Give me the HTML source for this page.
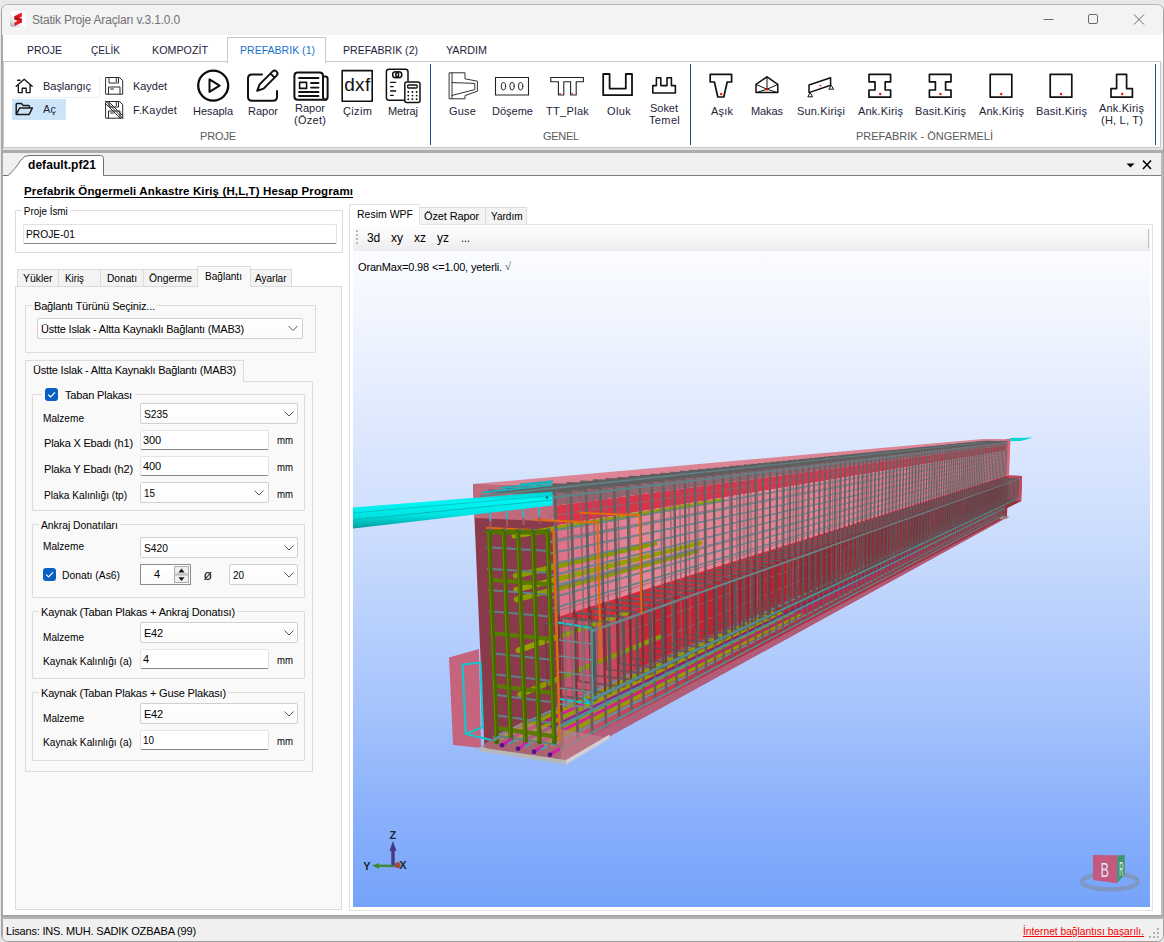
<!DOCTYPE html>
<html><head><meta charset="utf-8"><title>Statik Proje Araçları</title>
<style>
*{box-sizing:border-box;margin:0;padding:0}
html,body{width:1164px;height:942px;overflow:hidden;background:#e9e9e9;font-family:"Liberation Sans",sans-serif;font-size:11px;color:#000}
#win{position:absolute;left:1px;top:4px;width:1163px;height:938px;background:#f0f0f0;border:1px solid #a6a6a6;border-top-color:#b8b8b8;border-bottom:1.5px solid #a0a0a0;border-radius:7px;overflow:hidden}
#root{position:absolute;left:-2px;top:-5px;width:1164px;height:942px}
#root div,#root span,#root svg{position:absolute}
.t{white-space:nowrap;line-height:14px;height:14px}
.b{font-weight:bold}
.gb{border:1px solid #dcdcdc;border-radius:1px}
.lg{background:#f9f9f9;padding:0 2px;left:0}
.tb{background:#fff;border:1px solid #e3e3e3;border-bottom:1px solid #868686;border-radius:2px}
.cb{background:#fff;border:1px solid #d0d0d0;border-radius:2px;background:linear-gradient(#ffffff,#fbfbfb)}
.tab{border:1px solid #dcdcdc;border-bottom:none;background:#f3f3f3}
.tabsel{border:1px solid #dcdcdc;border-bottom:none;background:#f9f9f9}
.chk{width:13px;height:13px;background:#0a5fc2;border-radius:3px}
.rl{color:#241e36}
.grp{color:#5a5a5a}
</style></head><body>
<div id="win"><div id="root">
<!-- title bar -->
<div style="left:0;top:0;width:1164px;height:35px;background:#f3f3f3"></div>
<svg style="left:10px;top:10.8px" width="16.4" height="16.2" viewBox="10 10.8 16.4 16.2">
 <defs><linearGradient id="ig" x1="0" y1="1" x2="0.75" y2="0.2"><stop offset="0" stop-color="#9a9a9a"/><stop offset=".3" stop-color="#dedede"/><stop offset=".6" stop-color="#fdfdfd"/><stop offset="1" stop-color="#ffffff"/></linearGradient></defs>
 <rect x="10" y="10.9" width="16.3" height="16" rx="3.2" fill="url(#ig)"/>
 <path d="M21.9 12.3 L14.6 15.7 L14.4 19.4 L21.8 16.6 Z" fill="#e8181e"/>
 <path d="M14.5 15.8 L22 18.6 L22 22.4 L14.4 19.4 Z" fill="#b81018"/>
 <path d="M22 18.8 L14.4 22.4 L14.4 25.8 L22 22.4 Z" fill="#ea1a20"/>
</svg>
<span class="t" style="letter-spacing:-0.192px;left:32px;top:13px;font-size:12px;color:#727272">Statik Proje Araçları v.3.1.0.0</span>
<svg style="left:1040px;top:10px" width="110" height="20" viewBox="0 0 110 20" fill="none" stroke="#6a6a6a" stroke-width="1">
 <path d="M3.5 9.5 H13.5"/><rect x="48.5" y="4.5" width="9" height="9" rx="1.5"/><path d="M94 4.5 L104 14.5 M104 4.5 L94 14.5"/>
</svg>
<!-- menu row -->
<div style="left:3px;top:35px;width:1160px;height:27px;background:#fff"></div>
<div style="left:227px;top:37px;width:99px;height:26px;background:#fff;border:1px solid #c8c8c8;border-bottom:none"></div>
<span class="t" style="transform:scaleX(0.913);transform-origin:0 50%;left:27px;top:43px;font-size:11.5px;color:#1e1e3c">PROJE</span>
<span class="t" style="transform:scaleX(0.872);transform-origin:0 50%;left:91px;top:43px;font-size:11.5px;color:#1e1e3c">ÇELİK</span>
<span class="t" style="transform:scaleX(0.932);transform-origin:0 50%;left:152px;top:43px;font-size:11.5px;color:#1e1e3c">KOMPOZİT</span>
<span class="t" style="transform:scaleX(0.917);transform-origin:0 50%;left:240px;top:43px;font-size:11.5px;color:#1a6fd0">PREFABRIK (1)</span>
<span class="t" style="transform:scaleX(0.917);transform-origin:0 50%;left:343px;top:43px;font-size:11.5px;color:#1e1e3c">PREFABRIK (2)</span>
<span class="t" style="transform:scaleX(0.934);transform-origin:0 50%;left:446px;top:43px;font-size:11.5px;color:#1e1e3c">YARDIM</span>
<!-- ribbon -->
<div style="left:3px;top:61px;width:1158px;height:87px;background:#fff;border:1px solid #c8c8c8"></div>
<div style="left:227px;top:61px;width:99px;height:2px;background:#fff;border-left:1px solid #c8c8c8;border-right:1px solid #c8c8c8"></div>
<div style="left:12px;top:75px;width:88px;height:23px;border:1px solid #e8f1fa;border-left:none;border-top:none"></div>
<div style="left:12px;top:99px;width:54px;height:21px;background:#cce4f7"></div>
<div style="left:430px;top:64px;width:1px;height:81px;background:#1f4e8c"></div>
<div style="left:690px;top:64px;width:1px;height:81px;background:#1f4e8c"></div>
<div style="left:1155px;top:64px;width:1px;height:81px;background:#1f4e8c"></div>
<span class="t rl" style="letter-spacing:-0.037px;left:43px;top:79px">Başlangıç</span>
<span class="t rl" style="letter-spacing:0.104px;left:43px;top:102px">Aç</span>
<span class="t rl" style="letter-spacing:-0.045px;left:133px;top:79px">Kaydet</span>
<span class="t rl" style="letter-spacing:0.158px;left:133px;top:103px">F.Kaydet</span>
<span class="t rl" style="letter-spacing:-0.055px;left:193px;top:104px">Hesapla</span>
<span class="t rl" style="letter-spacing:0.007px;left:248px;top:104px">Rapor</span>
<span class="t rl" style="letter-spacing:0.007px;left:295px;top:101px">Rapor</span>
<span class="t rl" style="letter-spacing:0.261px;left:294px;top:113px">(Özet)</span>
<span class="t rl" style="letter-spacing:0.333px;left:343px;top:104px">Çizim</span>
<span class="t rl" style="letter-spacing:-0.102px;left:388px;top:104px">Metraj</span>
<span class="t grp" style="letter-spacing:-0.153px;left:200px;top:129px">PROJE</span>
<span class="t rl" style="letter-spacing:0.201px;left:449px;top:104px">Guse</span>
<span class="t rl" style="letter-spacing:0.006px;left:492px;top:104px">Döşeme</span>
<span class="t rl" style="letter-spacing:0.312px;left:546px;top:104px">TT_Plak</span>
<span class="t rl" style="letter-spacing:0.393px;left:607px;top:104px">Oluk</span>
<span class="t rl" style="letter-spacing:-0.031px;left:650px;top:101px">Soket</span>
<span class="t rl" style="letter-spacing:0.368px;left:649px;top:113px">Temel</span>
<span class="t grp" style="letter-spacing:-0.288px;left:543px;top:129px">GENEL</span>
<span class="t rl" style="letter-spacing:0.170px;left:711px;top:104px">Aşık</span>
<span class="t rl" style="letter-spacing:-0.090px;left:751px;top:104px">Makas</span>
<span class="t rl" style="letter-spacing:0.161px;left:797px;top:104px">Sun.Kirişi</span>
<span class="t rl" style="letter-spacing:0.188px;left:858px;top:104px">Ank.Kiriş</span>
<span class="t rl" style="letter-spacing:0.199px;left:915px;top:104px">Basit.Kiriş</span>
<span class="t rl" style="letter-spacing:0.188px;left:979px;top:104px">Ank.Kiriş</span>
<span class="t rl" style="letter-spacing:0.199px;left:1036px;top:104px">Basit.Kiriş</span>
<span class="t rl" style="letter-spacing:0.188px;left:1099px;top:101px">Ank.Kiriş</span>
<span class="t rl" style="letter-spacing:0.219px;left:1101px;top:113px">(H, L, T)</span>
<span class="t grp" style="letter-spacing:-0.026px;left:856px;top:129px">PREFABRIK - ÖNGERMELİ</span>
<svg style="left:0;top:62px" width="1164" height="86" viewBox="0 62 1164 86" fill="none" stroke="#1a1a1a" stroke-linejoin="round" stroke-linecap="round">
<!-- home -->
<path d="M16.2 86.2 L24.2 79.2 L32.2 86.2 M18.3 84.6 V92.6 H22.2 V88.2 H26.2 V92.6 H30.1 V84.6 M17.6 80.2 h2.4" stroke-width="1.4"/>
<!-- folder -->
<path d="M16.2 114.6 V104.2 Q16.2 103.4 17 103.4 H21.4 L23.2 105.4 H28.6 Q29.4 105.4 29.4 106.2 V108 M16.2 114.6 L19.6 108 H32.4 L29 114.6 Z" stroke-width="1.5"/>
<!-- save -->
<g stroke-width="1" stroke="#2a2a2a">
<path d="M106 77.5 H119.5 L122.7 80.7 V94.2 H106 Z"/><path d="M109 77.5 V83 H118.5 V77.5 M116.3 78.6 V81.6"/><path d="M108.5 94.2 V87 H120 V94.2 M110.5 89 H113.5"/>
<path d="M106 101.5 H119.5 L122.7 104.7 V118.2 H106 Z"/><path d="M109 101.5 V107 H118.5 V101.5 M116.3 102.6 V105.6"/><path d="M108.5 118.2 V111 H120 V118.2 M110.5 113 H113.5"/>
<path d="M106 101.5 L122.7 118.2 M106 104 L120.2 118.2 M108.5 101.5 L122.7 115.7"/>
</g>
<!-- hesapla -->
<circle cx="213.2" cy="85.6" r="15" stroke-width="2.3" stroke="#0c0c0c"/>
<path d="M209.5 79.3 V91.9 L219.6 85.6 Z" stroke-width="2" stroke="#0c0c0c"/>
<!-- rapor (pencil) -->
<g stroke-width="2" stroke="#111">
<path d="M262 74.6 H252 Q248 74.6 248 78.6 V96.8 Q248 100.8 252 100.8 H273 Q277 100.8 277 96.8 V91"/>
<path d="M257.2 90.8 L259.6 84.4 L272.6 71.4 Q274.6 69.6 276.6 71.6 Q278.6 73.6 276.6 75.6 L263.6 88.6 Z M270.6 73.6 L274.6 77.6"/>
</g>
<!-- rapor ozet (newspaper) -->
<g stroke-width="2" stroke="#111">
<path d="M294.4 76 Q294.4 72.6 297.8 72.6 H319.6 Q323 72.6 323 76 V96.4 Q323 99.8 326 99.8 H297.8 Q294.4 99.8 294.4 96.4 Z"/>
<path d="M323 76.4 H325.4 Q327.6 76.4 327.6 78.6 V97 Q327.6 99.8 325.2 99.8"/>
<path d="M299 78 H318.5 M311 83 H318.5 M311 87.6 H318.5 M299 92 H318.5 M299 96 H318.5" stroke-width="1.8"/>
<rect x="299.6" y="82.4" width="7" height="6" stroke-width="1.6"/>
</g>
<!-- dxf -->
<rect x="342.2" y="70.6" width="30" height="30.6" stroke-width="1.6" stroke="#111"/>
<!-- metraj -->
<g stroke="#111" stroke-width="1.5">
<path d="M404 100.2 H389 Q386.4 100.2 386.4 97.6 V71.8 Q386.4 69.2 389 69.2 H405.4 Q408 69.2 408 71.8 V81"/>
<circle cx="395.6" cy="74.8" r="3"/><circle cx="398.8" cy="74.8" r="3"/>
<path d="M390.6 82.4 H395.6 M390.6 86.6 H393.2 M390.6 91 H395.6 M390.6 95.4 H393.2" stroke-width="1.4"/>
<rect x="404.8" y="82" width="15.2" height="20.4" rx="2" fill="#fff"/>
<rect x="407.6" y="85" width="9.6" height="3" rx="1" stroke-width="1.3"/>
<path d="M408.2 92 h.1 M412.4 92 h.1 M416.6 92 h.1 M408.2 95.6 h.1 M412.4 95.6 h.1 M416.6 95.6 h.1 M408.2 99.2 h.1 M412.4 99.2 h.1 M416.6 99.2 h.1" stroke-width="1.8"/>
</g>
<!-- guse -->
<g stroke="#333" stroke-width="1">
<path d="M449.5 72.8 H465 V78.8 L477.4 81.2 V91.2 L465 95.6 V98.8 H449.5 Z"/>
<path d="M452 73 V98.6 M452 82.6 L474.8 83.4 V89.6 L452 95.4"/>
</g>
<!-- doseme -->
<rect x="495.5" y="77.5" width="33" height="17.5" stroke="#222" stroke-width="1.1"/>
<g stroke="#222" stroke-width="1"><ellipse cx="503.4" cy="86.2" rx="2.2" ry="3.8"/><ellipse cx="512" cy="86.2" rx="2.2" ry="3.8"/><ellipse cx="520.6" cy="86.2" rx="2.2" ry="3.8"/></g>
<!-- tt plak -->
<path d="M550.8 77.5 H583.4 V81.8 H576.2 V95 H570.6 V81.8 H563.8 V95 H558.4 V81.8 H550.8 Z" stroke="#222" stroke-width="1.1"/>
<!-- oluk -->
<path d="M603.2 74 H609.6 V88.6 H625.8 V74 H632 V95.2 H603.2 Z" stroke="#111" stroke-width="1.8"/>
<!-- soket -->
<path d="M652.8 93 V85.6 H656.4 V77.8 H660.8 V85.6 H667 V77.8 H671.4 V85.6 H675.4 V93 Z" stroke="#111" stroke-width="1.6"/>
<!-- asik -->
<path d="M710.2 74.4 H731.6 V82 H727.2 L723.8 97 H717.8 L714.4 82 H710.2 Z" stroke="#111" stroke-width="1.7"/>
<!-- makas -->
<g stroke="#111" stroke-width="1.5"><path d="M767 76.8 L777.8 84.4 V92.6 H756 V84.4 Z"/><path d="M767 76.8 V89 M756.4 84.6 L767 89.2 L777.6 84.6 M767 89.2 L757 92.4 M767 89.2 L777 92.4" stroke-width="1"/></g>
<!-- sun kirisi -->
<g stroke="#111" stroke-width="1.5"><path d="M809 85 L830.6 77.8 V85.2 L809 92.6 Z"/><path d="M810 93 L807.8 96.8 H812.2 Z M831 85.6 L828.8 89.2 H833.2 Z" stroke-width="1"/></g>
<!-- I shapes -->
<path id="ish" d="M869 74.4 H890.6 V81.8 H885.2 V90 H890.6 V97.2 H869 V90 H875 V81.8 H869 Z" stroke="#111" stroke-width="1.7"/>
<path d="M929.4 74.4 H951 V81.8 H945.6 V90 H951 V97.2 H929.4 V90 H935.4 V81.8 H929.4 Z" stroke="#111" stroke-width="1.7"/>
<rect x="990.2" y="74.4" width="21.6" height="22.8" stroke="#111" stroke-width="1.7"/>
<rect x="1050.2" y="74.4" width="21.6" height="22.8" stroke="#111" stroke-width="1.7"/>
<path d="M1116.6 74.4 H1126.6 V88.6 H1132.4 V97.2 H1111 V88.6 H1116.6 Z" stroke="#111" stroke-width="1.7"/>
<g fill="#f01010" stroke="none">
<circle cx="721.2" cy="94" r="1.2"/><circle cx="767" cy="89.4" r="1.2"/><circle cx="820.4" cy="85.6" r="0.9"/>
<circle cx="880.2" cy="94" r="1.2"/><circle cx="940.4" cy="94" r="1.2"/><circle cx="1001.2" cy="94" r="1.2"/><circle cx="1061" cy="94" r="1.2"/><circle cx="1122.2" cy="94" r="1.2"/>
<rect x="559.4" y="93" width="1.4" height="1.4"/><rect x="571.6" y="93" width="1.4" height="1.4"/>
</g>
</svg>
<span class="t" style="letter-spacing:0.256px;left:344.3px;top:73.5px;font-size:19px;line-height:22px;height:22px;color:#111">dxf</span>
<!-- band under ribbon -->
<div style="left:0;top:148px;width:1164px;height:2px;background:#e2e2e2"></div><div style="left:0;top:149.5px;width:1164px;height:3px;background:#acacac"></div>
<div style="left:3px;top:153px;width:1158px;height:23px;background:#f0f0f0"></div>
<!-- doc content white -->
<div style="left:3px;top:176px;width:1158px;height:739px;background:#fff"></div><div style="left:1px;top:35px;width:2px;height:910px;background:#a8a8a8"></div>
<div style="left:3px;top:175px;width:1158px;height:1px;background:#7f7f7f"></div>
<div style="left:1161px;top:153px;width:1.6px;height:764px;background:#bcbcbc"></div>
<div style="left:1px;top:915px;width:1162px;height:4px;background:linear-gradient(#a0a0a0,#bcbcbc)"></div>
<!-- doc tab -->
<svg style="left:4px;top:153px" width="104" height="24" viewBox="4 153 104 24">
<path d="M7.5 176 C13 172 17 166 21 160 Q24 155.5 29 155.5 H100.5 Q103.5 155.5 103.5 158.5 V176 Z" fill="#fff"/>
<path d="M4 175.5 H8 C13 171.5 17 166 21 160 Q24 155.5 29 155.5 H100.5 Q103.5 155.5 103.5 158.5 V175.5" fill="none" stroke="#707070" stroke-width="1"/>
</svg>
<span class="t b" style="letter-spacing:0.057px;left:28px;top:158px;font-size:12px">default.pf21</span>
<svg style="left:1124px;top:158px" width="32" height="14" viewBox="0 0 32 14"><path d="M2.5 5.5 H10.5 L6.5 9.5 Z" fill="#000"/><path d="M19 2.5 L27 11 M27 2.5 L19 11" stroke="#000" stroke-width="1.6"/></svg>
<!-- heading -->
<span class="t b" style="letter-spacing:0.130px;left:24px;top:183.5px;font-size:11.5px;text-decoration:underline;text-underline-offset:2px;text-decoration-skip-ink:none;text-decoration-thickness:1.3px">Prefabrik Öngermeli Ankastre Kiriş (H,L,T) Hesap Programı</span>
<!-- proje ismi -->
<div class="gb" style="left:15px;top:210px;width:328px;height:43px"></div>
<span class="t" style="transform:scaleX(0.900);transform-origin:0 50%;left:22px;top:204px;background:#fff;padding:0 2px">Proje İsmi</span>
<div class="tb" style="left:23px;top:224px;width:314px;height:20px"></div>
<span class="t" style="transform:scaleX(0.932);transform-origin:0 50%;left:26px;top:227px">PROJE-01</span>
<!-- main tab control -->
<div style="left:15px;top:286px;width:327px;height:624px;background:#f9f9f9;border:1px solid #dcdcdc"></div>
<div class="tab" style="left:17px;top:269px;width:42px;height:17px"></div>
<div class="tab" style="left:58px;top:269px;width:43px;height:17px"></div>
<div class="tab" style="left:100px;top:269px;width:44px;height:17px"></div>
<div class="tab" style="left:143px;top:269px;width:55px;height:17px"></div>
<div class="tab" style="left:250px;top:269px;width:42px;height:17px"></div>
<div class="tabsel" style="left:197px;top:266px;width:54px;height:21px"></div>
<span class="t" style="transform:scaleX(0.946);transform-origin:0 50%;left:23px;top:271px">Yükler</span>
<span class="t" style="transform:scaleX(0.888);transform-origin:0 50%;left:65px;top:271px">Kiriş</span>
<span class="t" style="transform:scaleX(0.925);transform-origin:0 50%;left:107px;top:271px">Donatı</span>
<span class="t" style="transform:scaleX(0.938);transform-origin:0 50%;left:149px;top:271px">Öngerme</span>
<span class="t" style="transform:scaleX(0.916);transform-origin:0 50%;left:205px;top:269px">Bağlantı</span>
<span class="t" style="transform:scaleX(0.909);transform-origin:0 50%;left:255px;top:271px">Ayarlar</span>
<!-- baglanti turu -->
<div class="gb" style="left:25px;top:305px;width:291px;height:48px"></div>
<span class="t" style="letter-spacing:-0.187px;left:32px;top:299px;background:#f9f9f9;padding:0 2px">Bağlantı Türünü Seçiniz...</span>
<div class="cb" style="left:37px;top:318px;width:266px;height:21px"></div>
<span class="t" style="letter-spacing:-0.196px;left:41px;top:322px">Üstte Islak - Altta Kaynaklı Bağlantı (MAB3)</span>
<!-- inner tab -->
<div style="left:25px;top:381px;width:288px;height:391px;background:#f9f9f9;border:1px solid #dcdcdc"></div>
<div class="tabsel" style="left:25px;top:360px;width:219px;height:22px"></div>
<span class="t" style="letter-spacing:-0.196px;left:33px;top:363px">Üstte Islak - Altta Kaynaklı Bağlantı (MAB3)</span>
<!-- taban plakasi -->
<div class="gb" style="left:32px;top:394px;width:273px;height:117px"></div>
<div style="left:42px;top:386px;width:93px;height:16px;background:#f9f9f9"></div>
<div class="chk" style="left:45px;top:388px"></div>
<span class="t" style="letter-spacing:-0.169px;left:65px;top:388px">Taban Plakası</span>
<span class="t" style="transform:scaleX(0.919);transform-origin:0 50%;left:43px;top:411px">Malzeme</span>
<div class="cb" style="left:139.5px;top:403px;width:158px;height:21px"></div>
<span class="t" style="transform:scaleX(0.934);transform-origin:0 50%;left:144px;top:407px">S235</span>
<span class="t" style="letter-spacing:-0.191px;left:44px;top:436px">Plaka X Ebadı (h1)</span>
<div class="tb" style="left:139.5px;top:430px;width:129px;height:20px"></div>
<span class="t" style="letter-spacing:-0.144px;left:143px;top:433px">300</span>
<span class="t" style="transform:scaleX(0.873);transform-origin:0 50%;left:277px;top:433px">mm</span>
<span class="t" style="letter-spacing:-0.168px;left:44px;top:462px">Plaka Y Ebadı (h2)</span>
<div class="tb" style="left:139.5px;top:456px;width:129px;height:20px"></div>
<span class="t" style="letter-spacing:-0.144px;left:143px;top:459px">400</span>
<span class="t" style="transform:scaleX(0.873);transform-origin:0 50%;left:277px;top:460px">mm</span>
<span class="t" style="transform:scaleX(0.924);transform-origin:0 50%;left:44px;top:488px">Plaka Kalınlığı (tp)</span>
<div class="cb" style="left:139.5px;top:482px;width:129px;height:21px"></div>
<span class="t" style="transform:scaleX(0.898);transform-origin:0 50%;left:144px;top:486px">15</span>
<span class="t" style="transform:scaleX(0.873);transform-origin:0 50%;left:277px;top:487px">mm</span>
<!-- ankraj -->
<div class="gb" style="left:32px;top:524px;width:273px;height:74px"></div>
<span class="t" style="transform:scaleX(0.940);transform-origin:0 50%;left:39px;top:518px;background:#f9f9f9;padding:0 2px">Ankraj Donatıları</span>
<span class="t" style="transform:scaleX(0.919);transform-origin:0 50%;left:43px;top:539px">Malzeme</span>
<div class="cb" style="left:139.5px;top:537px;width:158px;height:21px"></div>
<span class="t" style="transform:scaleX(0.934);transform-origin:0 50%;left:144px;top:541px">S420</span>
<div class="chk" style="left:43px;top:568px"></div>
<span class="t" style="transform:scaleX(0.939);transform-origin:0 50%;left:62px;top:568px">Donatı (As6)</span>
<div class="cb" style="left:139.5px;top:564px;width:51px;height:21px;border-color:#8c8c8c;border-radius:0"></div>
<span class="t" style="left:154px;top:567px">4</span>
<span class="t" style="left:203.5px;top:568px;font-size:14px;color:#222">ø</span>
<div class="cb" style="left:229px;top:564px;width:69px;height:21px"></div>
<span class="t" style="transform:scaleX(0.898);transform-origin:0 50%;left:233px;top:568px">20</span>
<!-- kaynak 1 -->
<div class="gb" style="left:32px;top:611px;width:273px;height:68px"></div>
<span class="t" style="letter-spacing:-0.162px;left:39px;top:605px;background:#f9f9f9;padding:0 2px">Kaynak (Taban Plakas + Ankraj Donatısı)</span>
<span class="t" style="transform:scaleX(0.919);transform-origin:0 50%;left:43px;top:630px">Malzeme</span>
<div class="cb" style="left:139.5px;top:622px;width:158px;height:21px"></div>
<span class="t" style="letter-spacing:-0.231px;left:144px;top:626px">E42</span>
<span class="t" style="transform:scaleX(0.927);transform-origin:0 50%;left:43px;top:654px">Kaynak Kalınlığı (a)</span>
<div class="tb" style="left:139.5px;top:649px;width:129px;height:20px"></div>
<span class="t" style="left:143px;top:652px">4</span>
<span class="t" style="transform:scaleX(0.873);transform-origin:0 50%;left:277px;top:653px">mm</span>
<!-- kaynak 2 -->
<div class="gb" style="left:32px;top:692px;width:273px;height:69px"></div>
<span class="t" style="letter-spacing:-0.171px;left:39px;top:686px;background:#f9f9f9;padding:0 2px">Kaynak (Taban Plakas + Guse Plakası)</span>
<span class="t" style="transform:scaleX(0.919);transform-origin:0 50%;left:43px;top:711px">Malzeme</span>
<div class="cb" style="left:139.5px;top:703px;width:158px;height:21px"></div>
<span class="t" style="letter-spacing:-0.231px;left:144px;top:707px">E42</span>
<span class="t" style="transform:scaleX(0.927);transform-origin:0 50%;left:43px;top:735px">Kaynak Kalınlığı (a)</span>
<div class="tb" style="left:139.5px;top:730px;width:129px;height:20px"></div>
<span class="t" style="transform:scaleX(0.898);transform-origin:0 50%;left:143px;top:733px">10</span>
<span class="t" style="transform:scaleX(0.873);transform-origin:0 50%;left:277px;top:734px">mm</span>
<!-- chevrons, checks, spinner -->
<svg style="left:0;top:300px" width="345" height="460" viewBox="0 300 345 460" fill="none" stroke="#555" stroke-width="1">
<path d="M288.5 326 L293 330.5 L297.5 326"/>
<path d="M284.5 411.5 L289 416 L293.5 411.5"/>
<path d="M254.5 490.5 L259 495 L263.5 490.5"/>
<path d="M284.5 545.5 L289 550 L293.5 545.5"/>
<path d="M284.5 572.5 L289 577 L293.5 572.5"/>
<path d="M284.5 630.5 L289 635 L293.5 630.5"/>
<path d="M284.5 711.5 L289 716 L293.5 711.5"/>
<path d="M48.2 394.6 L50.6 397 L55 392.4 M46.2 574.6 L48.6 577 L53 572.4" stroke="#fff" stroke-width="1.2"/>
<rect x="174.5" y="566.5" width="14" height="7.5" fill="#f0f0f0" stroke="#adadad" stroke-width="1"/>
<rect x="174.5" y="575" width="14" height="7.5" fill="#f0f0f0" stroke="#adadad" stroke-width="1"/>
<path d="M178.4 572.4 L181.5 568.6 L184.6 572.4 Z M178.4 577.2 L181.5 581 L184.6 577.2 Z" fill="#1a1a1a" stroke="none"/>
</svg>
<!-- right tab control -->
<div style="left:349px;top:224px;width:804px;height:687px;background:#fff;border:1px solid #e2e2e2"></div>
<div class="tab" style="left:419px;top:207px;width:67px;height:17px;background:#f3f3f3"></div>
<div class="tab" style="left:485px;top:207px;width:42px;height:17px;background:#f3f3f3"></div>
<div class="tabsel" style="left:349px;top:204px;width:71px;height:21px;background:#fff;border-color:#e2e2e2"></div>
<span class="t" style="transform:scaleX(0.954);transform-origin:0 50%;left:357px;top:207px">Resim WPF</span>
<span class="t" style="letter-spacing:-0.132px;left:424px;top:209px">Özet Rapor</span>
<span class="t" style="transform:scaleX(0.909);transform-origin:0 50%;left:491px;top:209px">Yardım</span>
<!-- toolbar -->
<div style="left:353px;top:226px;width:797px;height:25px;border-radius:3px 0 0 3px;background:linear-gradient(#fcfcfc,#f6f6f6 50%,#ececec)"></div>
<div style="left:1148px;top:229px;width:1px;height:19px;background:#c0c0c0"></div>
<svg style="left:355px;top:229px" width="4" height="18" viewBox="0 0 4 18" fill="#b9b9b9"><rect x="1" y="1" width="2" height="2"/><rect x="1" y="5" width="2" height="2"/><rect x="1" y="9" width="2" height="2"/><rect x="1" y="13" width="2" height="2"/></svg>
<span class="t" style="letter-spacing:-0.240px;left:367px;top:231px;font-size:12px">3d</span>
<span class="t" style="letter-spacing:0.000px;left:391px;top:231px;font-size:12px">xy</span>
<span class="t" style="letter-spacing:0.000px;left:414px;top:231px;font-size:12px">xz</span>
<span class="t" style="letter-spacing:0.000px;left:437px;top:231px;font-size:12px">yz</span>
<span class="t" style="transform:scaleX(0.899);transform-origin:0 50%;left:461px;top:231px;font-size:12px">...</span>
<!-- viewport -->
<div style="left:353px;top:251px;width:797px;height:656px;background:linear-gradient(#fbfcff 0%,#e6eefe 20%,#c9dbfd 45%,#a5c3fc 70%,#86aefb 88%,#76a3fa 100%)"></div>
<svg style="left:353px;top:251px" width="796" height="655" viewBox="353 251 796 655">
<defs><linearGradient id="cy" x1="0" y1="0" x2="0.08" y2="1"><stop offset="0" stop-color="#00b4b4"/><stop offset=".3" stop-color="#00f6f6"/><stop offset=".65" stop-color="#00e4e4"/><stop offset="1" stop-color="#009a9a"/></linearGradient>
<linearGradient id="web" x1="553" y1="0" x2="1010" y2="0" gradientUnits="userSpaceOnUse"><stop offset="0" stop-color="#df7089"/><stop offset=".2" stop-color="#e48798"/><stop offset="1" stop-color="#e07c8c"/></linearGradient>
<linearGradient id="ledt" x1="553" y1="0" x2="1010" y2="0" gradientUnits="userSpaceOnUse"><stop offset="0" stop-color="#e02632"/><stop offset="1" stop-color="#c62a38"/></linearGradient>
<linearGradient id="leds" x1="598" y1="0" x2="1020" y2="0" gradientUnits="userSpaceOnUse"><stop offset="0" stop-color="#d2566c"/><stop offset=".12" stop-color="#ca2432"/><stop offset=".5" stop-color="#b2202c"/><stop offset="1" stop-color="#92303a"/></linearGradient>
<linearGradient id="lowf" x1="560" y1="0" x2="1010" y2="0" gradientUnits="userSpaceOnUse"><stop offset="0" stop-color="#c85870"/><stop offset=".4" stop-color="#b82c40"/><stop offset="1" stop-color="#9c3444"/></linearGradient>
</defs>
<polygon points="449.0,657.5 479.0,649.0 481.0,748.0 453.0,745.0" fill="#c6647e" />
<polygon points="473.0,484.0 553.1,486.4 561.6,762.7 484.5,750.7" fill="#8b3a4c" />
<polygon points="473.0,484.0 553.1,486.4 554.2,521.6 474.5,517.9" fill="#c06a7c" />
<polygon points="473.0,484.0 982.9,438.9 1010.0,439.1 553.1,486.4" fill="#dc8494" />
<polygon points="553.1,486.4 1010.0,439.1 1010.0,440.2 553.2,490.5" fill="#dc7c8e" />
<polygon points="553.2,490.5 1010.0,440.2 1009.8,444.5 553.7,506.1" fill="#93666e" />
<polygon points="553.7,506.1 1009.8,444.5 1009.6,449.9 554.3,525.7" fill="#d9344a" />
<polygon points="554.3,525.7 1009.6,449.9 1008.6,475.6 557.1,617.2" fill="url(#web)" />
<polygon points="557.1,617.2 1008.6,475.6 1006.9,517.6 561.6,762.7" fill="url(#lowf)" />
<polygon points="557.1,617.2 598.1,620.9 600.3,710.2 559.8,705.0" fill="#d0506a" />
<polygon points="557.1,617.2 1008.6,475.6 1022.1,475.9 598.1,620.9" fill="url(#ledt)" />
<polygon points="598.1,620.9 1022.1,475.9 1021.1,501.2 600.3,710.2" fill="url(#leds)" />
<polygon points="1008.6,475.6 1022.1,475.9 1021.1,501.2 1007.6,500.7" fill="#c04a5e" />
<polygon points="1005.5,439.1 1010.4,439.1 1009.0,475.6 1005.6,475.6" fill="#d8687c" />
<polygon points="1001.0,516.6 1009.5,516.3 1007.0,518.8 999.0,519.2" fill="#9a9484" />
<line x1="514.2" y1="535.8" x2="518.5" y2="535.1" stroke="#94a000" stroke-width="5.63" stroke-linecap="round"/><line x1="518.5" y1="535.1" x2="527.1" y2="533.6" stroke="#94a000" stroke-width="5.57" stroke-linecap="round"/><line x1="527.1" y1="533.6" x2="538.5" y2="531.6" stroke="#94a000" stroke-width="5.49" stroke-linecap="round"/><line x1="538.5" y1="531.6" x2="552.0" y2="529.3" stroke="#94a000" stroke-width="5.38" stroke-linecap="round"/><line x1="552.0" y1="529.3" x2="566.9" y2="526.8" stroke="#94a000" stroke-width="5.26" stroke-linecap="round"/><line x1="566.9" y1="526.8" x2="583.0" y2="524.0" stroke="#94a000" stroke-width="5.13" stroke-linecap="round"/><line x1="583.0" y1="524.0" x2="599.7" y2="521.1" stroke="#94a000" stroke-width="4.99" stroke-linecap="round"/><line x1="599.7" y1="521.1" x2="617.0" y2="518.2" stroke="#94a000" stroke-width="4.85" stroke-linecap="round"/><line x1="617.0" y1="518.2" x2="634.5" y2="515.2" stroke="#94a000" stroke-width="4.70" stroke-linecap="round"/><line x1="634.5" y1="515.2" x2="652.0" y2="512.2" stroke="#94a000" stroke-width="4.55" stroke-linecap="round"/><line x1="652.0" y1="512.2" x2="669.4" y2="509.2" stroke="#94a000" stroke-width="4.41" stroke-linecap="round"/><line x1="669.4" y1="509.2" x2="686.6" y2="506.2" stroke="#94a000" stroke-width="4.26" stroke-linecap="round"/><line x1="686.6" y1="506.2" x2="703.5" y2="503.4" stroke="#94a000" stroke-width="4.12" stroke-linecap="round"/><line x1="703.5" y1="503.4" x2="720.0" y2="500.5" stroke="#94a000" stroke-width="3.97" stroke-linecap="round"/>
<line x1="515.6" y1="575.8" x2="518.2" y2="575.2" stroke="#8a9a00" stroke-width="5.60" stroke-linecap="round"/><line x1="518.2" y1="575.2" x2="523.4" y2="574.0" stroke="#8a9a00" stroke-width="5.57" stroke-linecap="round"/><line x1="523.4" y1="574.0" x2="530.3" y2="572.4" stroke="#8a9a00" stroke-width="5.52" stroke-linecap="round"/><line x1="530.3" y1="572.4" x2="538.6" y2="570.5" stroke="#8a9a00" stroke-width="5.45" stroke-linecap="round"/><line x1="538.6" y1="570.5" x2="548.0" y2="568.3" stroke="#8a9a00" stroke-width="5.38" stroke-linecap="round"/><line x1="548.0" y1="568.3" x2="558.2" y2="565.9" stroke="#8a9a00" stroke-width="5.30" stroke-linecap="round"/><line x1="558.2" y1="565.9" x2="569.2" y2="563.4" stroke="#8a9a00" stroke-width="5.21" stroke-linecap="round"/><line x1="569.2" y1="563.4" x2="580.7" y2="560.7" stroke="#8a9a00" stroke-width="5.11" stroke-linecap="round"/><line x1="580.7" y1="560.7" x2="592.6" y2="557.9" stroke="#8a9a00" stroke-width="5.01" stroke-linecap="round"/><line x1="592.6" y1="557.9" x2="604.8" y2="555.1" stroke="#8a9a00" stroke-width="4.91" stroke-linecap="round"/><line x1="604.8" y1="555.1" x2="617.3" y2="552.2" stroke="#8a9a00" stroke-width="4.81" stroke-linecap="round"/><line x1="617.3" y1="552.2" x2="629.9" y2="549.3" stroke="#8a9a00" stroke-width="4.70" stroke-linecap="round"/><line x1="629.9" y1="549.3" x2="642.5" y2="546.4" stroke="#8a9a00" stroke-width="4.60" stroke-linecap="round"/><line x1="642.5" y1="546.4" x2="655.1" y2="543.4" stroke="#8a9a00" stroke-width="4.49" stroke-linecap="round"/>
<line x1="516.2" y1="589.6" x2="519.9" y2="588.7" stroke="#94a000" stroke-width="5.58" stroke-linecap="round"/><line x1="519.9" y1="588.7" x2="527.3" y2="586.8" stroke="#94a000" stroke-width="5.54" stroke-linecap="round"/><line x1="527.3" y1="586.8" x2="537.1" y2="584.3" stroke="#94a000" stroke-width="5.46" stroke-linecap="round"/><line x1="537.1" y1="584.3" x2="548.8" y2="581.4" stroke="#94a000" stroke-width="5.37" stroke-linecap="round"/><line x1="548.8" y1="581.4" x2="561.8" y2="578.1" stroke="#94a000" stroke-width="5.27" stroke-linecap="round"/><line x1="561.8" y1="578.1" x2="575.9" y2="574.5" stroke="#94a000" stroke-width="5.16" stroke-linecap="round"/><line x1="575.9" y1="574.5" x2="590.8" y2="570.8" stroke="#94a000" stroke-width="5.03" stroke-linecap="round"/><line x1="590.8" y1="570.8" x2="606.1" y2="566.9" stroke="#94a000" stroke-width="4.91" stroke-linecap="round"/><line x1="606.1" y1="566.9" x2="621.8" y2="562.9" stroke="#94a000" stroke-width="4.78" stroke-linecap="round"/><line x1="621.8" y1="562.9" x2="637.7" y2="558.9" stroke="#94a000" stroke-width="4.64" stroke-linecap="round"/><line x1="637.7" y1="558.9" x2="653.6" y2="554.9" stroke="#94a000" stroke-width="4.51" stroke-linecap="round"/><line x1="653.6" y1="554.9" x2="669.4" y2="550.9" stroke="#94a000" stroke-width="4.38" stroke-linecap="round"/><line x1="669.4" y1="550.9" x2="685.0" y2="546.9" stroke="#94a000" stroke-width="4.24" stroke-linecap="round"/><line x1="685.0" y1="546.9" x2="700.4" y2="543.1" stroke="#94a000" stroke-width="4.11" stroke-linecap="round"/>
<line x1="516.5" y1="599.5" x2="520.1" y2="598.5" stroke="#8a9a00" stroke-width="5.58" stroke-linecap="round"/><line x1="520.1" y1="598.5" x2="527.4" y2="596.6" stroke="#8a9a00" stroke-width="5.53" stroke-linecap="round"/><line x1="527.4" y1="596.6" x2="537.0" y2="594.0" stroke="#8a9a00" stroke-width="5.46" stroke-linecap="round"/><line x1="537.0" y1="594.0" x2="548.4" y2="591.0" stroke="#8a9a00" stroke-width="5.37" stroke-linecap="round"/><line x1="548.4" y1="591.0" x2="561.1" y2="587.6" stroke="#8a9a00" stroke-width="5.27" stroke-linecap="round"/><line x1="561.1" y1="587.6" x2="574.9" y2="583.9" stroke="#8a9a00" stroke-width="5.16" stroke-linecap="round"/><line x1="574.9" y1="583.9" x2="589.4" y2="580.0" stroke="#8a9a00" stroke-width="5.04" stroke-linecap="round"/><line x1="589.4" y1="580.0" x2="604.5" y2="575.9" stroke="#8a9a00" stroke-width="4.91" stroke-linecap="round"/><line x1="604.5" y1="575.9" x2="619.9" y2="571.8" stroke="#8a9a00" stroke-width="4.79" stroke-linecap="round"/><line x1="619.9" y1="571.8" x2="635.5" y2="567.6" stroke="#8a9a00" stroke-width="4.66" stroke-linecap="round"/><line x1="635.5" y1="567.6" x2="651.1" y2="563.5" stroke="#8a9a00" stroke-width="4.52" stroke-linecap="round"/><line x1="651.1" y1="563.5" x2="666.7" y2="559.3" stroke="#8a9a00" stroke-width="4.39" stroke-linecap="round"/><line x1="666.7" y1="559.3" x2="682.1" y2="555.2" stroke="#8a9a00" stroke-width="4.26" stroke-linecap="round"/><line x1="682.1" y1="555.2" x2="697.2" y2="551.1" stroke="#8a9a00" stroke-width="4.13" stroke-linecap="round"/>
<line x1="518.4" y1="650.3" x2="520.3" y2="649.7" stroke="#94a000" stroke-width="5.54" stroke-linecap="round"/><line x1="520.3" y1="649.7" x2="524.2" y2="648.3" stroke="#94a000" stroke-width="5.51" stroke-linecap="round"/><line x1="524.2" y1="648.3" x2="529.4" y2="646.5" stroke="#94a000" stroke-width="5.48" stroke-linecap="round"/><line x1="529.4" y1="646.5" x2="535.7" y2="644.4" stroke="#94a000" stroke-width="5.43" stroke-linecap="round"/><line x1="535.7" y1="644.4" x2="542.8" y2="641.9" stroke="#94a000" stroke-width="5.37" stroke-linecap="round"/><line x1="542.8" y1="641.9" x2="550.7" y2="639.2" stroke="#94a000" stroke-width="5.31" stroke-linecap="round"/><line x1="550.7" y1="639.2" x2="559.2" y2="636.2" stroke="#94a000" stroke-width="5.24" stroke-linecap="round"/><line x1="559.2" y1="636.2" x2="568.2" y2="633.1" stroke="#94a000" stroke-width="5.17" stroke-linecap="round"/><line x1="568.2" y1="633.1" x2="577.6" y2="629.9" stroke="#94a000" stroke-width="5.09" stroke-linecap="round"/><line x1="577.6" y1="629.9" x2="587.3" y2="626.5" stroke="#94a000" stroke-width="5.01" stroke-linecap="round"/><line x1="587.3" y1="626.5" x2="597.3" y2="623.1" stroke="#94a000" stroke-width="4.93" stroke-linecap="round"/><line x1="597.3" y1="623.1" x2="607.5" y2="619.6" stroke="#94a000" stroke-width="4.84" stroke-linecap="round"/><line x1="607.5" y1="619.6" x2="617.8" y2="616.0" stroke="#94a000" stroke-width="4.76" stroke-linecap="round"/><line x1="617.8" y1="616.0" x2="628.3" y2="612.4" stroke="#94a000" stroke-width="4.67" stroke-linecap="round"/>
<line x1="520.1" y1="694.6" x2="522.7" y2="693.5" stroke="#8a9a00" stroke-width="5.50" stroke-linecap="round"/><line x1="522.7" y1="693.5" x2="527.9" y2="691.4" stroke="#8a9a00" stroke-width="5.46" stroke-linecap="round"/><line x1="527.9" y1="691.4" x2="534.8" y2="688.5" stroke="#8a9a00" stroke-width="5.41" stroke-linecap="round"/><line x1="534.8" y1="688.5" x2="543.2" y2="685.1" stroke="#8a9a00" stroke-width="5.35" stroke-linecap="round"/><line x1="543.2" y1="685.1" x2="552.6" y2="681.2" stroke="#8a9a00" stroke-width="5.27" stroke-linecap="round"/><line x1="552.6" y1="681.2" x2="562.9" y2="676.9" stroke="#8a9a00" stroke-width="5.19" stroke-linecap="round"/><line x1="562.9" y1="676.9" x2="574.0" y2="672.3" stroke="#8a9a00" stroke-width="5.10" stroke-linecap="round"/><line x1="574.0" y1="672.3" x2="585.5" y2="667.6" stroke="#8a9a00" stroke-width="5.01" stroke-linecap="round"/><line x1="585.5" y1="667.6" x2="597.5" y2="662.6" stroke="#8a9a00" stroke-width="4.91" stroke-linecap="round"/><line x1="597.5" y1="662.6" x2="609.8" y2="657.5" stroke="#8a9a00" stroke-width="4.81" stroke-linecap="round"/><line x1="609.8" y1="657.5" x2="622.3" y2="652.4" stroke="#8a9a00" stroke-width="4.71" stroke-linecap="round"/><line x1="622.3" y1="652.4" x2="634.9" y2="647.2" stroke="#8a9a00" stroke-width="4.60" stroke-linecap="round"/><line x1="634.9" y1="647.2" x2="647.6" y2="641.9" stroke="#8a9a00" stroke-width="4.50" stroke-linecap="round"/><line x1="647.6" y1="641.9" x2="660.2" y2="636.7" stroke="#8a9a00" stroke-width="4.39" stroke-linecap="round"/>
<line x1="549.8" y1="515.9" x2="565.9" y2="513.5" stroke="#8a6c76" stroke-width="1.28" stroke-opacity="0.80"/><line x1="565.9" y1="513.5" x2="596.2" y2="508.9" stroke="#8a6c76" stroke-width="1.23" stroke-opacity="0.80"/><line x1="596.2" y1="508.9" x2="632.9" y2="503.4" stroke="#8a6c76" stroke-width="1.16" stroke-opacity="0.80"/><line x1="632.9" y1="503.4" x2="672.1" y2="497.6" stroke="#8a6c76" stroke-width="1.09" stroke-opacity="0.80"/><line x1="672.1" y1="497.6" x2="711.2" y2="491.7" stroke="#8a6c76" stroke-width="1.01" stroke-opacity="0.80"/><line x1="711.2" y1="491.7" x2="748.7" y2="486.1" stroke="#8a6c76" stroke-width="0.93" stroke-opacity="0.80"/><line x1="748.7" y1="486.1" x2="783.7" y2="480.9" stroke="#8a6c76" stroke-width="0.85" stroke-opacity="0.80"/><line x1="783.7" y1="480.9" x2="816.0" y2="476.0" stroke="#8a6c76" stroke-width="0.78" stroke-opacity="0.80"/><line x1="816.0" y1="476.0" x2="845.4" y2="471.6" stroke="#8a6c76" stroke-width="0.72" stroke-opacity="0.80"/><line x1="845.4" y1="471.6" x2="872.0" y2="467.7" stroke="#8a6c76" stroke-width="0.66" stroke-opacity="0.80"/><line x1="872.0" y1="467.7" x2="896.0" y2="464.1" stroke="#8a6c76" stroke-width="0.61" stroke-opacity="0.80"/><line x1="896.0" y1="464.1" x2="917.6" y2="460.8" stroke="#8a6c76" stroke-width="0.56" stroke-opacity="0.80"/><line x1="917.6" y1="460.8" x2="937.0" y2="457.9" stroke="#8a6c76" stroke-width="0.52" stroke-opacity="0.80"/><line x1="937.0" y1="457.9" x2="954.6" y2="455.3" stroke="#8a6c76" stroke-width="0.48" stroke-opacity="0.80"/><line x1="954.6" y1="455.3" x2="970.4" y2="452.9" stroke="#8a6c76" stroke-width="0.45" stroke-opacity="0.80"/><line x1="970.4" y1="452.9" x2="984.6" y2="450.8" stroke="#8a6c76" stroke-width="0.42" stroke-opacity="0.80"/>
<line x1="550.6" y1="540.3" x2="566.6" y2="537.2" stroke="#8a6c76" stroke-width="1.28" stroke-opacity="0.80"/><line x1="566.6" y1="537.2" x2="596.7" y2="531.6" stroke="#8a6c76" stroke-width="1.23" stroke-opacity="0.80"/><line x1="596.7" y1="531.6" x2="633.3" y2="524.7" stroke="#8a6c76" stroke-width="1.16" stroke-opacity="0.80"/><line x1="633.3" y1="524.7" x2="672.4" y2="517.3" stroke="#8a6c76" stroke-width="1.08" stroke-opacity="0.80"/><line x1="672.4" y1="517.3" x2="711.3" y2="510.0" stroke="#8a6c76" stroke-width="1.00" stroke-opacity="0.80"/><line x1="711.3" y1="510.0" x2="748.7" y2="502.9" stroke="#8a6c76" stroke-width="0.92" stroke-opacity="0.80"/><line x1="748.7" y1="502.9" x2="783.6" y2="496.3" stroke="#8a6c76" stroke-width="0.85" stroke-opacity="0.80"/><line x1="783.6" y1="496.3" x2="815.8" y2="490.3" stroke="#8a6c76" stroke-width="0.78" stroke-opacity="0.80"/><line x1="815.8" y1="490.3" x2="845.2" y2="484.7" stroke="#8a6c76" stroke-width="0.72" stroke-opacity="0.80"/><line x1="845.2" y1="484.7" x2="871.7" y2="479.7" stroke="#8a6c76" stroke-width="0.66" stroke-opacity="0.80"/><line x1="871.7" y1="479.7" x2="895.7" y2="475.2" stroke="#8a6c76" stroke-width="0.61" stroke-opacity="0.80"/><line x1="895.7" y1="475.2" x2="917.3" y2="471.1" stroke="#8a6c76" stroke-width="0.56" stroke-opacity="0.80"/><line x1="917.3" y1="471.1" x2="936.8" y2="467.5" stroke="#8a6c76" stroke-width="0.52" stroke-opacity="0.80"/><line x1="936.8" y1="467.5" x2="954.3" y2="464.2" stroke="#8a6c76" stroke-width="0.48" stroke-opacity="0.80"/><line x1="954.3" y1="464.2" x2="970.1" y2="461.2" stroke="#8a6c76" stroke-width="0.45" stroke-opacity="0.80"/><line x1="970.1" y1="461.2" x2="984.4" y2="458.5" stroke="#8a6c76" stroke-width="0.42" stroke-opacity="0.80"/>
<line x1="551.3" y1="564.5" x2="567.3" y2="560.8" stroke="#8a6c76" stroke-width="1.27" stroke-opacity="0.80"/><line x1="567.3" y1="560.8" x2="597.3" y2="554.0" stroke="#8a6c76" stroke-width="1.22" stroke-opacity="0.80"/><line x1="597.3" y1="554.0" x2="633.7" y2="545.8" stroke="#8a6c76" stroke-width="1.16" stroke-opacity="0.80"/><line x1="633.7" y1="545.8" x2="672.6" y2="536.9" stroke="#8a6c76" stroke-width="1.08" stroke-opacity="0.80"/><line x1="672.6" y1="536.9" x2="711.4" y2="528.1" stroke="#8a6c76" stroke-width="1.00" stroke-opacity="0.80"/><line x1="711.4" y1="528.1" x2="748.7" y2="519.6" stroke="#8a6c76" stroke-width="0.92" stroke-opacity="0.80"/><line x1="748.7" y1="519.6" x2="783.6" y2="511.7" stroke="#8a6c76" stroke-width="0.85" stroke-opacity="0.80"/><line x1="783.6" y1="511.7" x2="815.7" y2="504.4" stroke="#8a6c76" stroke-width="0.78" stroke-opacity="0.80"/><line x1="815.7" y1="504.4" x2="845.0" y2="497.8" stroke="#8a6c76" stroke-width="0.72" stroke-opacity="0.80"/><line x1="845.0" y1="497.8" x2="871.5" y2="491.8" stroke="#8a6c76" stroke-width="0.66" stroke-opacity="0.80"/><line x1="871.5" y1="491.8" x2="895.5" y2="486.3" stroke="#8a6c76" stroke-width="0.61" stroke-opacity="0.80"/><line x1="895.5" y1="486.3" x2="917.1" y2="481.4" stroke="#8a6c76" stroke-width="0.56" stroke-opacity="0.80"/><line x1="917.1" y1="481.4" x2="936.5" y2="477.0" stroke="#8a6c76" stroke-width="0.52" stroke-opacity="0.80"/><line x1="936.5" y1="477.0" x2="954.0" y2="473.0" stroke="#8a6c76" stroke-width="0.48" stroke-opacity="0.80"/><line x1="954.0" y1="473.0" x2="969.8" y2="469.4" stroke="#8a6c76" stroke-width="0.45" stroke-opacity="0.80"/><line x1="969.8" y1="469.4" x2="984.1" y2="466.2" stroke="#8a6c76" stroke-width="0.42" stroke-opacity="0.80"/>
<line x1="552.1" y1="588.5" x2="567.9" y2="584.3" stroke="#8a6c76" stroke-width="1.27" stroke-opacity="0.80"/><line x1="567.9" y1="584.3" x2="597.8" y2="576.4" stroke="#8a6c76" stroke-width="1.22" stroke-opacity="0.80"/><line x1="597.8" y1="576.4" x2="634.1" y2="566.7" stroke="#8a6c76" stroke-width="1.15" stroke-opacity="0.80"/><line x1="634.1" y1="566.7" x2="672.9" y2="556.4" stroke="#8a6c76" stroke-width="1.08" stroke-opacity="0.80"/><line x1="672.9" y1="556.4" x2="711.6" y2="546.1" stroke="#8a6c76" stroke-width="1.00" stroke-opacity="0.80"/><line x1="711.6" y1="546.1" x2="748.7" y2="536.3" stroke="#8a6c76" stroke-width="0.92" stroke-opacity="0.80"/><line x1="748.7" y1="536.3" x2="783.5" y2="527.1" stroke="#8a6c76" stroke-width="0.85" stroke-opacity="0.80"/><line x1="783.5" y1="527.1" x2="815.6" y2="518.5" stroke="#8a6c76" stroke-width="0.78" stroke-opacity="0.80"/><line x1="815.6" y1="518.5" x2="844.8" y2="510.8" stroke="#8a6c76" stroke-width="0.72" stroke-opacity="0.80"/><line x1="844.8" y1="510.8" x2="871.3" y2="503.7" stroke="#8a6c76" stroke-width="0.66" stroke-opacity="0.80"/><line x1="871.3" y1="503.7" x2="895.2" y2="497.4" stroke="#8a6c76" stroke-width="0.61" stroke-opacity="0.80"/><line x1="895.2" y1="497.4" x2="916.8" y2="491.7" stroke="#8a6c76" stroke-width="0.56" stroke-opacity="0.80"/><line x1="916.8" y1="491.7" x2="936.2" y2="486.5" stroke="#8a6c76" stroke-width="0.52" stroke-opacity="0.80"/><line x1="936.2" y1="486.5" x2="953.7" y2="481.9" stroke="#8a6c76" stroke-width="0.48" stroke-opacity="0.80"/><line x1="953.7" y1="481.9" x2="969.5" y2="477.7" stroke="#8a6c76" stroke-width="0.45" stroke-opacity="0.80"/><line x1="969.5" y1="477.7" x2="983.8" y2="473.9" stroke="#8a6c76" stroke-width="0.42" stroke-opacity="0.80"/>
<line x1="552.8" y1="612.3" x2="568.6" y2="607.5" stroke="#8a6c76" stroke-width="1.26" stroke-opacity="0.80"/><line x1="568.6" y1="607.5" x2="598.3" y2="598.5" stroke="#8a6c76" stroke-width="1.22" stroke-opacity="0.80"/><line x1="598.3" y1="598.5" x2="634.5" y2="587.5" stroke="#8a6c76" stroke-width="1.15" stroke-opacity="0.80"/><line x1="634.5" y1="587.5" x2="673.1" y2="575.8" stroke="#8a6c76" stroke-width="1.07" stroke-opacity="0.80"/><line x1="673.1" y1="575.8" x2="711.7" y2="564.1" stroke="#8a6c76" stroke-width="0.99" stroke-opacity="0.80"/><line x1="711.7" y1="564.1" x2="748.7" y2="552.8" stroke="#8a6c76" stroke-width="0.92" stroke-opacity="0.80"/><line x1="748.7" y1="552.8" x2="783.4" y2="542.3" stroke="#8a6c76" stroke-width="0.84" stroke-opacity="0.80"/><line x1="783.4" y1="542.3" x2="815.4" y2="532.6" stroke="#8a6c76" stroke-width="0.78" stroke-opacity="0.80"/><line x1="815.4" y1="532.6" x2="844.6" y2="523.7" stroke="#8a6c76" stroke-width="0.71" stroke-opacity="0.80"/><line x1="844.6" y1="523.7" x2="871.1" y2="515.7" stroke="#8a6c76" stroke-width="0.66" stroke-opacity="0.80"/><line x1="871.1" y1="515.7" x2="895.0" y2="508.4" stroke="#8a6c76" stroke-width="0.61" stroke-opacity="0.80"/><line x1="895.0" y1="508.4" x2="916.5" y2="501.9" stroke="#8a6c76" stroke-width="0.56" stroke-opacity="0.80"/><line x1="916.5" y1="501.9" x2="935.9" y2="496.0" stroke="#8a6c76" stroke-width="0.52" stroke-opacity="0.80"/><line x1="935.9" y1="496.0" x2="953.5" y2="490.7" stroke="#8a6c76" stroke-width="0.48" stroke-opacity="0.80"/><line x1="953.5" y1="490.7" x2="969.3" y2="485.9" stroke="#8a6c76" stroke-width="0.45" stroke-opacity="0.80"/><line x1="969.3" y1="485.9" x2="983.5" y2="481.5" stroke="#8a6c76" stroke-width="0.42" stroke-opacity="0.80"/>
<line x1="553.6" y1="636.0" x2="569.3" y2="630.6" stroke="#8a6c76" stroke-width="1.26" stroke-opacity="0.80"/><line x1="569.3" y1="630.6" x2="598.9" y2="620.5" stroke="#8a6c76" stroke-width="1.21" stroke-opacity="0.80"/><line x1="598.9" y1="620.5" x2="634.9" y2="608.2" stroke="#8a6c76" stroke-width="1.14" stroke-opacity="0.80"/><line x1="634.9" y1="608.2" x2="673.3" y2="595.1" stroke="#8a6c76" stroke-width="1.07" stroke-opacity="0.80"/><line x1="673.3" y1="595.1" x2="711.8" y2="581.9" stroke="#8a6c76" stroke-width="0.99" stroke-opacity="0.80"/><line x1="711.8" y1="581.9" x2="748.7" y2="569.3" stroke="#8a6c76" stroke-width="0.91" stroke-opacity="0.80"/><line x1="748.7" y1="569.3" x2="783.3" y2="557.5" stroke="#8a6c76" stroke-width="0.84" stroke-opacity="0.80"/><line x1="783.3" y1="557.5" x2="815.3" y2="546.6" stroke="#8a6c76" stroke-width="0.77" stroke-opacity="0.80"/><line x1="815.3" y1="546.6" x2="844.4" y2="536.6" stroke="#8a6c76" stroke-width="0.71" stroke-opacity="0.80"/><line x1="844.4" y1="536.6" x2="870.8" y2="527.6" stroke="#8a6c76" stroke-width="0.66" stroke-opacity="0.80"/><line x1="870.8" y1="527.6" x2="894.7" y2="519.4" stroke="#8a6c76" stroke-width="0.61" stroke-opacity="0.80"/><line x1="894.7" y1="519.4" x2="916.3" y2="512.0" stroke="#8a6c76" stroke-width="0.56" stroke-opacity="0.80"/><line x1="916.3" y1="512.0" x2="935.7" y2="505.4" stroke="#8a6c76" stroke-width="0.52" stroke-opacity="0.80"/><line x1="935.7" y1="505.4" x2="953.2" y2="499.4" stroke="#8a6c76" stroke-width="0.48" stroke-opacity="0.80"/><line x1="953.2" y1="499.4" x2="969.0" y2="494.0" stroke="#8a6c76" stroke-width="0.45" stroke-opacity="0.80"/><line x1="969.0" y1="494.0" x2="983.3" y2="489.2" stroke="#8a6c76" stroke-width="0.42" stroke-opacity="0.80"/>
<line x1="554.3" y1="659.5" x2="569.9" y2="653.6" stroke="#8a6c76" stroke-width="1.25" stroke-opacity="0.80"/><line x1="569.9" y1="653.6" x2="599.4" y2="642.4" stroke="#8a6c76" stroke-width="1.21" stroke-opacity="0.80"/><line x1="599.4" y1="642.4" x2="635.2" y2="628.8" stroke="#8a6c76" stroke-width="1.14" stroke-opacity="0.80"/><line x1="635.2" y1="628.8" x2="673.6" y2="614.2" stroke="#8a6c76" stroke-width="1.07" stroke-opacity="0.80"/><line x1="673.6" y1="614.2" x2="711.9" y2="599.7" stroke="#8a6c76" stroke-width="0.99" stroke-opacity="0.80"/><line x1="711.9" y1="599.7" x2="748.7" y2="585.7" stroke="#8a6c76" stroke-width="0.91" stroke-opacity="0.80"/><line x1="748.7" y1="585.7" x2="783.3" y2="572.6" stroke="#8a6c76" stroke-width="0.84" stroke-opacity="0.80"/><line x1="783.3" y1="572.6" x2="815.1" y2="560.5" stroke="#8a6c76" stroke-width="0.77" stroke-opacity="0.80"/><line x1="815.1" y1="560.5" x2="844.2" y2="549.4" stroke="#8a6c76" stroke-width="0.71" stroke-opacity="0.80"/><line x1="844.2" y1="549.4" x2="870.6" y2="539.4" stroke="#8a6c76" stroke-width="0.66" stroke-opacity="0.80"/><line x1="870.6" y1="539.4" x2="894.5" y2="530.4" stroke="#8a6c76" stroke-width="0.60" stroke-opacity="0.80"/><line x1="894.5" y1="530.4" x2="916.0" y2="522.2" stroke="#8a6c76" stroke-width="0.56" stroke-opacity="0.80"/><line x1="916.0" y1="522.2" x2="935.4" y2="514.8" stroke="#8a6c76" stroke-width="0.52" stroke-opacity="0.80"/><line x1="935.4" y1="514.8" x2="952.9" y2="508.2" stroke="#8a6c76" stroke-width="0.48" stroke-opacity="0.80"/><line x1="952.9" y1="508.2" x2="968.7" y2="502.2" stroke="#8a6c76" stroke-width="0.45" stroke-opacity="0.80"/><line x1="968.7" y1="502.2" x2="983.0" y2="496.8" stroke="#8a6c76" stroke-width="0.42" stroke-opacity="0.80"/>
<line x1="555.0" y1="682.8" x2="570.6" y2="676.3" stroke="#8a6c76" stroke-width="1.25" stroke-opacity="0.80"/><line x1="570.6" y1="676.3" x2="599.9" y2="664.1" stroke="#8a6c76" stroke-width="1.20" stroke-opacity="0.80"/><line x1="599.9" y1="664.1" x2="635.6" y2="649.2" stroke="#8a6c76" stroke-width="1.14" stroke-opacity="0.80"/><line x1="635.6" y1="649.2" x2="673.8" y2="633.3" stroke="#8a6c76" stroke-width="1.06" stroke-opacity="0.80"/><line x1="673.8" y1="633.3" x2="712.0" y2="617.3" stroke="#8a6c76" stroke-width="0.99" stroke-opacity="0.80"/><line x1="712.0" y1="617.3" x2="748.7" y2="602.0" stroke="#8a6c76" stroke-width="0.91" stroke-opacity="0.80"/><line x1="748.7" y1="602.0" x2="783.2" y2="587.6" stroke="#8a6c76" stroke-width="0.84" stroke-opacity="0.80"/><line x1="783.2" y1="587.6" x2="815.0" y2="574.3" stroke="#8a6c76" stroke-width="0.77" stroke-opacity="0.80"/><line x1="815.0" y1="574.3" x2="844.0" y2="562.2" stroke="#8a6c76" stroke-width="0.71" stroke-opacity="0.80"/><line x1="844.0" y1="562.2" x2="870.4" y2="551.2" stroke="#8a6c76" stroke-width="0.65" stroke-opacity="0.80"/><line x1="870.4" y1="551.2" x2="894.2" y2="541.3" stroke="#8a6c76" stroke-width="0.60" stroke-opacity="0.80"/><line x1="894.2" y1="541.3" x2="915.7" y2="532.3" stroke="#8a6c76" stroke-width="0.56" stroke-opacity="0.80"/><line x1="915.7" y1="532.3" x2="935.1" y2="524.2" stroke="#8a6c76" stroke-width="0.52" stroke-opacity="0.80"/><line x1="935.1" y1="524.2" x2="952.6" y2="516.9" stroke="#8a6c76" stroke-width="0.48" stroke-opacity="0.80"/><line x1="952.6" y1="516.9" x2="968.4" y2="510.3" stroke="#8a6c76" stroke-width="0.45" stroke-opacity="0.80"/><line x1="968.4" y1="510.3" x2="982.7" y2="504.4" stroke="#8a6c76" stroke-width="0.42" stroke-opacity="0.80"/>
<line x1="555.8" y1="705.9" x2="571.2" y2="698.9" stroke="#8a6c76" stroke-width="1.24" stroke-opacity="0.80"/><line x1="571.2" y1="698.9" x2="600.4" y2="685.6" stroke="#8a6c76" stroke-width="1.20" stroke-opacity="0.80"/><line x1="600.4" y1="685.6" x2="636.0" y2="669.5" stroke="#8a6c76" stroke-width="1.13" stroke-opacity="0.80"/><line x1="636.0" y1="669.5" x2="674.0" y2="652.2" stroke="#8a6c76" stroke-width="1.06" stroke-opacity="0.80"/><line x1="674.0" y1="652.2" x2="712.1" y2="634.9" stroke="#8a6c76" stroke-width="0.98" stroke-opacity="0.80"/><line x1="712.1" y1="634.9" x2="748.7" y2="618.2" stroke="#8a6c76" stroke-width="0.91" stroke-opacity="0.80"/><line x1="748.7" y1="618.2" x2="783.1" y2="602.6" stroke="#8a6c76" stroke-width="0.84" stroke-opacity="0.80"/><line x1="783.1" y1="602.6" x2="814.9" y2="588.1" stroke="#8a6c76" stroke-width="0.77" stroke-opacity="0.80"/><line x1="814.9" y1="588.1" x2="843.9" y2="575.0" stroke="#8a6c76" stroke-width="0.71" stroke-opacity="0.80"/><line x1="843.9" y1="575.0" x2="870.2" y2="563.0" stroke="#8a6c76" stroke-width="0.65" stroke-opacity="0.80"/><line x1="870.2" y1="563.0" x2="894.0" y2="552.2" stroke="#8a6c76" stroke-width="0.60" stroke-opacity="0.80"/><line x1="894.0" y1="552.2" x2="915.5" y2="542.4" stroke="#8a6c76" stroke-width="0.56" stroke-opacity="0.80"/><line x1="915.5" y1="542.4" x2="934.9" y2="533.6" stroke="#8a6c76" stroke-width="0.52" stroke-opacity="0.80"/><line x1="934.9" y1="533.6" x2="952.4" y2="525.6" stroke="#8a6c76" stroke-width="0.48" stroke-opacity="0.80"/><line x1="952.4" y1="525.6" x2="968.2" y2="518.4" stroke="#8a6c76" stroke-width="0.45" stroke-opacity="0.80"/><line x1="968.2" y1="518.4" x2="982.4" y2="511.9" stroke="#8a6c76" stroke-width="0.42" stroke-opacity="0.80"/>
<line x1="566.5" y1="483.2" x2="572.9" y2="705.8" stroke="#866069" stroke-width="1.69" stroke-opacity="0.85"/>
<line x1="580.1" y1="481.9" x2="585.9" y2="699.8" stroke="#866069" stroke-width="1.66" stroke-opacity="0.85"/>
<line x1="593.0" y1="480.6" x2="598.3" y2="694.0" stroke="#866069" stroke-width="1.62" stroke-opacity="0.85"/>
<line x1="605.5" y1="479.3" x2="610.2" y2="688.4" stroke="#866069" stroke-width="1.59" stroke-opacity="0.85"/>
<line x1="617.4" y1="478.1" x2="621.6" y2="683.1" stroke="#866069" stroke-width="1.55" stroke-opacity="0.85"/>
<line x1="628.8" y1="477.0" x2="632.6" y2="678.0" stroke="#866069" stroke-width="1.52" stroke-opacity="0.85"/>
<line x1="639.7" y1="475.9" x2="643.1" y2="673.0" stroke="#866069" stroke-width="1.49" stroke-opacity="0.85"/>
<line x1="650.3" y1="474.8" x2="653.3" y2="668.3" stroke="#866069" stroke-width="1.46" stroke-opacity="0.85"/>
<line x1="660.4" y1="473.8" x2="663.1" y2="663.7" stroke="#866069" stroke-width="1.43" stroke-opacity="0.85"/>
<line x1="670.2" y1="472.8" x2="672.5" y2="659.3" stroke="#866069" stroke-width="1.41" stroke-opacity="0.85"/>
<line x1="679.6" y1="471.9" x2="681.6" y2="655.1" stroke="#866069" stroke-width="1.38" stroke-opacity="0.85"/>
<line x1="688.6" y1="470.9" x2="690.4" y2="651.0" stroke="#866069" stroke-width="1.36" stroke-opacity="0.85"/>
<line x1="697.4" y1="470.1" x2="698.8" y2="647.0" stroke="#866069" stroke-width="1.33" stroke-opacity="0.85"/>
<line x1="705.8" y1="469.2" x2="707.0" y2="643.2" stroke="#866069" stroke-width="1.31" stroke-opacity="0.85"/>
<line x1="713.9" y1="468.4" x2="714.9" y2="639.5" stroke="#866069" stroke-width="1.29" stroke-opacity="0.85"/>
<line x1="721.8" y1="467.6" x2="722.6" y2="635.9" stroke="#866069" stroke-width="1.27" stroke-opacity="0.85"/>
<line x1="729.4" y1="466.8" x2="730.0" y2="632.4" stroke="#866069" stroke-width="1.24" stroke-opacity="0.85"/>
<line x1="736.8" y1="466.1" x2="737.1" y2="629.1" stroke="#866069" stroke-width="1.22" stroke-opacity="0.85"/>
<line x1="743.9" y1="465.4" x2="744.1" y2="625.8" stroke="#866069" stroke-width="1.20" stroke-opacity="0.85"/>
<line x1="750.8" y1="464.7" x2="750.8" y2="622.7" stroke="#866069" stroke-width="1.19" stroke-opacity="0.85"/>
<line x1="757.5" y1="464.0" x2="757.3" y2="619.7" stroke="#866069" stroke-width="1.17" stroke-opacity="0.85"/>
<line x1="764.0" y1="463.4" x2="763.7" y2="616.7" stroke="#866069" stroke-width="1.15" stroke-opacity="0.85"/>
<line x1="770.3" y1="462.7" x2="769.8" y2="613.8" stroke="#866069" stroke-width="1.13" stroke-opacity="0.85"/>
<line x1="776.4" y1="462.1" x2="775.8" y2="611.0" stroke="#866069" stroke-width="1.12" stroke-opacity="0.85"/>
<line x1="782.3" y1="461.5" x2="781.6" y2="608.3" stroke="#866069" stroke-width="1.10" stroke-opacity="0.85"/>
<line x1="788.0" y1="460.9" x2="787.2" y2="605.7" stroke="#866069" stroke-width="1.08" stroke-opacity="0.85"/>
<line x1="793.6" y1="460.4" x2="792.7" y2="603.1" stroke="#866069" stroke-width="1.07" stroke-opacity="0.85"/>
<line x1="799.1" y1="459.8" x2="798.0" y2="600.6" stroke="#866069" stroke-width="1.05" stroke-opacity="0.85"/>
<line x1="804.3" y1="459.3" x2="803.2" y2="598.2" stroke="#866069" stroke-width="1.04" stroke-opacity="0.85"/>
<line x1="809.5" y1="458.8" x2="808.3" y2="595.9" stroke="#866069" stroke-width="1.02" stroke-opacity="0.85"/>
<line x1="814.5" y1="458.3" x2="813.2" y2="593.6" stroke="#866069" stroke-width="1.01" stroke-opacity="0.85"/>
<line x1="819.4" y1="457.8" x2="818.0" y2="591.3" stroke="#866069" stroke-width="1.00" stroke-opacity="0.85"/>
<line x1="824.1" y1="457.3" x2="822.6" y2="589.1" stroke="#866069" stroke-width="0.98" stroke-opacity="0.85"/>
<line x1="828.7" y1="456.8" x2="827.2" y2="587.0" stroke="#866069" stroke-width="0.97" stroke-opacity="0.85"/>
<line x1="833.2" y1="456.4" x2="831.6" y2="585.0" stroke="#866069" stroke-width="0.96" stroke-opacity="0.85"/>
<line x1="837.6" y1="456.0" x2="835.9" y2="582.9" stroke="#866069" stroke-width="0.95" stroke-opacity="0.85"/>
<line x1="841.9" y1="455.5" x2="840.1" y2="581.0" stroke="#866069" stroke-width="0.93" stroke-opacity="0.85"/>
<line x1="846.1" y1="455.1" x2="844.2" y2="579.0" stroke="#866069" stroke-width="0.92" stroke-opacity="0.85"/>
<line x1="850.1" y1="454.7" x2="848.3" y2="577.2" stroke="#866069" stroke-width="0.91" stroke-opacity="0.85"/>
<line x1="854.1" y1="454.3" x2="852.2" y2="575.3" stroke="#866069" stroke-width="0.90" stroke-opacity="0.85"/>
<line x1="858.0" y1="453.9" x2="856.0" y2="573.5" stroke="#866069" stroke-width="0.89" stroke-opacity="0.85"/>
<line x1="861.8" y1="453.5" x2="859.8" y2="571.8" stroke="#866069" stroke-width="0.88" stroke-opacity="0.85"/>
<line x1="865.5" y1="453.1" x2="863.4" y2="570.1" stroke="#866069" stroke-width="0.87" stroke-opacity="0.85"/>
<line x1="869.1" y1="452.8" x2="867.0" y2="568.4" stroke="#866069" stroke-width="0.86" stroke-opacity="0.85"/>
<line x1="872.6" y1="452.4" x2="870.5" y2="566.8" stroke="#866069" stroke-width="0.85" stroke-opacity="0.85"/>
<line x1="876.1" y1="452.1" x2="873.9" y2="565.2" stroke="#866069" stroke-width="0.84" stroke-opacity="0.85"/>
<line x1="879.5" y1="451.7" x2="877.3" y2="563.6" stroke="#866069" stroke-width="0.83" stroke-opacity="0.85"/>
<line x1="882.8" y1="451.4" x2="880.5" y2="562.1" stroke="#866069" stroke-width="0.82" stroke-opacity="0.85"/>
<line x1="886.0" y1="451.1" x2="883.7" y2="560.6" stroke="#866069" stroke-width="0.81" stroke-opacity="0.85"/>
<line x1="889.2" y1="450.8" x2="886.9" y2="559.1" stroke="#866069" stroke-width="0.80" stroke-opacity="0.85"/>
<line x1="892.3" y1="450.5" x2="889.9" y2="557.7" stroke="#866069" stroke-width="0.80" stroke-opacity="0.85"/>
<line x1="895.3" y1="450.1" x2="892.9" y2="556.3" stroke="#866069" stroke-width="0.79" stroke-opacity="0.85"/>
<line x1="898.3" y1="449.8" x2="895.9" y2="554.9" stroke="#866069" stroke-width="0.78" stroke-opacity="0.85"/>
<line x1="901.2" y1="449.6" x2="898.8" y2="553.6" stroke="#866069" stroke-width="0.77" stroke-opacity="0.85"/>
<line x1="904.0" y1="449.3" x2="901.6" y2="552.2" stroke="#866069" stroke-width="0.76" stroke-opacity="0.85"/>
<line x1="906.8" y1="449.0" x2="904.4" y2="550.9" stroke="#866069" stroke-width="0.76" stroke-opacity="0.85"/>
<line x1="909.6" y1="448.7" x2="907.1" y2="549.7" stroke="#866069" stroke-width="0.75" stroke-opacity="0.85"/>
<line x1="912.2" y1="448.4" x2="909.8" y2="548.4" stroke="#866069" stroke-width="0.74" stroke-opacity="0.85"/>
<line x1="914.9" y1="448.2" x2="912.4" y2="547.2" stroke="#866069" stroke-width="0.73" stroke-opacity="0.85"/>
<line x1="917.5" y1="447.9" x2="914.9" y2="546.0" stroke="#866069" stroke-width="0.73" stroke-opacity="0.85"/>
<line x1="920.0" y1="447.7" x2="917.5" y2="544.8" stroke="#866069" stroke-width="0.72" stroke-opacity="0.85"/>
<line x1="922.5" y1="447.4" x2="919.9" y2="543.7" stroke="#866069" stroke-width="0.71" stroke-opacity="0.85"/>
<line x1="924.9" y1="447.2" x2="922.4" y2="542.5" stroke="#866069" stroke-width="0.71" stroke-opacity="0.85"/>
<line x1="927.3" y1="446.9" x2="924.7" y2="541.4" stroke="#866069" stroke-width="0.70" stroke-opacity="0.85"/>
<line x1="929.6" y1="446.7" x2="927.1" y2="540.3" stroke="#866069" stroke-width="0.69" stroke-opacity="0.85"/>
<line x1="931.9" y1="446.5" x2="929.4" y2="539.3" stroke="#866069" stroke-width="0.69" stroke-opacity="0.85"/>
<line x1="934.2" y1="446.2" x2="931.6" y2="538.2" stroke="#866069" stroke-width="0.68" stroke-opacity="0.85"/>
<line x1="936.4" y1="446.0" x2="933.8" y2="537.2" stroke="#866069" stroke-width="0.67" stroke-opacity="0.85"/>
<line x1="938.6" y1="445.8" x2="936.0" y2="536.2" stroke="#866069" stroke-width="0.67" stroke-opacity="0.85"/>
<line x1="940.8" y1="445.6" x2="938.1" y2="535.2" stroke="#866069" stroke-width="0.66" stroke-opacity="0.85"/>
<line x1="942.9" y1="445.4" x2="940.2" y2="534.2" stroke="#866069" stroke-width="0.66" stroke-opacity="0.85"/>
<line x1="944.9" y1="445.2" x2="942.3" y2="533.2" stroke="#866069" stroke-width="0.65" stroke-opacity="0.85"/>
<line x1="947.0" y1="444.9" x2="944.3" y2="532.3" stroke="#866069" stroke-width="0.65" stroke-opacity="0.85"/>
<line x1="949.0" y1="444.7" x2="946.3" y2="531.3" stroke="#866069" stroke-width="0.64" stroke-opacity="0.85"/>
<line x1="950.9" y1="444.5" x2="948.3" y2="530.4" stroke="#866069" stroke-width="0.63" stroke-opacity="0.85"/>
<line x1="952.9" y1="444.4" x2="950.2" y2="529.5" stroke="#866069" stroke-width="0.63" stroke-opacity="0.85"/>
<line x1="954.8" y1="444.2" x2="952.1" y2="528.6" stroke="#866069" stroke-width="0.62" stroke-opacity="0.85"/>
<line x1="956.6" y1="444.0" x2="954.0" y2="527.8" stroke="#866069" stroke-width="0.62" stroke-opacity="0.85"/>
<line x1="958.5" y1="443.8" x2="955.8" y2="526.9" stroke="#866069" stroke-width="0.61" stroke-opacity="0.85"/>
<line x1="960.3" y1="443.6" x2="957.6" y2="526.1" stroke="#866069" stroke-width="0.61" stroke-opacity="0.85"/>
<line x1="962.1" y1="443.4" x2="959.4" y2="525.2" stroke="#866069" stroke-width="0.60" stroke-opacity="0.85"/>
<line x1="963.8" y1="443.3" x2="961.2" y2="524.4" stroke="#866069" stroke-width="0.60" stroke-opacity="0.85"/>
<line x1="965.5" y1="443.1" x2="962.9" y2="523.6" stroke="#866069" stroke-width="0.59" stroke-opacity="0.85"/>
<line x1="967.2" y1="442.9" x2="964.6" y2="522.8" stroke="#866069" stroke-width="0.59" stroke-opacity="0.85"/>
<line x1="968.9" y1="442.7" x2="966.2" y2="522.0" stroke="#866069" stroke-width="0.59" stroke-opacity="0.85"/>
<line x1="970.5" y1="442.6" x2="967.9" y2="521.3" stroke="#866069" stroke-width="0.58" stroke-opacity="0.85"/>
<line x1="972.2" y1="442.4" x2="969.5" y2="520.5" stroke="#866069" stroke-width="0.58" stroke-opacity="0.85"/>
<line x1="973.8" y1="442.3" x2="971.1" y2="519.8" stroke="#866069" stroke-width="0.57" stroke-opacity="0.85"/>
<line x1="975.3" y1="442.1" x2="972.7" y2="519.0" stroke="#866069" stroke-width="0.57" stroke-opacity="0.85"/>
<line x1="976.9" y1="441.9" x2="974.2" y2="518.3" stroke="#866069" stroke-width="0.56" stroke-opacity="0.85"/>
<line x1="978.4" y1="441.8" x2="975.8" y2="517.6" stroke="#866069" stroke-width="0.56" stroke-opacity="0.85"/>
<line x1="979.9" y1="441.6" x2="977.3" y2="516.9" stroke="#866069" stroke-width="0.56" stroke-opacity="0.85"/>
<line x1="981.4" y1="441.5" x2="978.7" y2="516.2" stroke="#866069" stroke-width="0.55" stroke-opacity="0.85"/>
<line x1="982.8" y1="441.3" x2="980.2" y2="515.5" stroke="#866069" stroke-width="0.55" stroke-opacity="0.85"/>
<line x1="984.3" y1="441.2" x2="981.6" y2="514.8" stroke="#866069" stroke-width="0.54" stroke-opacity="0.85"/>
<line x1="547.7" y1="531.5" x2="556.7" y2="529.9" stroke="#698488" stroke-width="2.26"/><line x1="556.7" y1="529.9" x2="574.2" y2="526.9" stroke="#698488" stroke-width="2.21"/><line x1="574.2" y1="526.9" x2="596.4" y2="523.0" stroke="#698488" stroke-width="2.14"/><line x1="596.4" y1="523.0" x2="621.6" y2="518.7" stroke="#698488" stroke-width="2.06"/><line x1="621.6" y1="518.7" x2="648.3" y2="514.0" stroke="#698488" stroke-width="1.96"/><line x1="648.3" y1="514.0" x2="675.4" y2="509.3" stroke="#698488" stroke-width="1.87"/><line x1="675.4" y1="509.3" x2="702.4" y2="504.6" stroke="#698488" stroke-width="1.77"/><line x1="702.4" y1="504.6" x2="728.8" y2="500.0" stroke="#698488" stroke-width="1.67"/><line x1="728.8" y1="500.0" x2="754.1" y2="495.6" stroke="#698488" stroke-width="1.58"/><line x1="754.1" y1="495.6" x2="778.2" y2="491.4" stroke="#698488" stroke-width="1.49"/><line x1="778.2" y1="491.4" x2="801.0" y2="487.5" stroke="#698488" stroke-width="1.41"/><line x1="801.0" y1="487.5" x2="822.4" y2="483.8" stroke="#698488" stroke-width="1.33"/><line x1="822.4" y1="483.8" x2="842.5" y2="480.3" stroke="#698488" stroke-width="1.25"/><line x1="842.5" y1="480.3" x2="861.3" y2="477.0" stroke="#698488" stroke-width="1.18"/><line x1="861.3" y1="477.0" x2="878.8" y2="474.0" stroke="#698488" stroke-width="1.12"/><line x1="878.8" y1="474.0" x2="895.1" y2="471.1" stroke="#698488" stroke-width="1.06"/><line x1="895.1" y1="471.1" x2="910.2" y2="468.5" stroke="#698488" stroke-width="1.00"/><line x1="910.2" y1="468.5" x2="924.3" y2="466.1" stroke="#698488" stroke-width="0.95"/><line x1="924.3" y1="466.1" x2="937.4" y2="463.8" stroke="#698488" stroke-width="0.90"/><line x1="937.4" y1="463.8" x2="949.6" y2="461.7" stroke="#698488" stroke-width="0.85"/><line x1="949.6" y1="461.7" x2="961.0" y2="459.7" stroke="#698488" stroke-width="0.81"/><line x1="961.0" y1="459.7" x2="971.6" y2="457.8" stroke="#698488" stroke-width="0.77"/><line x1="971.6" y1="457.8" x2="981.4" y2="456.1" stroke="#698488" stroke-width="0.74"/><line x1="981.4" y1="456.1" x2="990.7" y2="454.5" stroke="#698488" stroke-width="0.70"/><line x1="990.7" y1="454.5" x2="999.3" y2="453.0" stroke="#698488" stroke-width="0.67"/><line x1="999.3" y1="453.0" x2="1007.3" y2="451.6" stroke="#698488" stroke-width="0.64"/>
<line x1="548.1" y1="542.7" x2="557.1" y2="541.0" stroke="#698488" stroke-width="2.26"/><line x1="557.1" y1="541.0" x2="574.5" y2="537.7" stroke="#698488" stroke-width="2.21"/><line x1="574.5" y1="537.7" x2="596.7" y2="533.4" stroke="#698488" stroke-width="2.14"/><line x1="596.7" y1="533.4" x2="621.8" y2="528.6" stroke="#698488" stroke-width="2.05"/><line x1="621.8" y1="528.6" x2="648.4" y2="523.5" stroke="#698488" stroke-width="1.96"/><line x1="648.4" y1="523.5" x2="675.5" y2="518.3" stroke="#698488" stroke-width="1.86"/><line x1="675.5" y1="518.3" x2="702.5" y2="513.1" stroke="#698488" stroke-width="1.77"/><line x1="702.5" y1="513.1" x2="728.8" y2="508.1" stroke="#698488" stroke-width="1.67"/><line x1="728.8" y1="508.1" x2="754.1" y2="503.3" stroke="#698488" stroke-width="1.58"/><line x1="754.1" y1="503.3" x2="778.2" y2="498.6" stroke="#698488" stroke-width="1.49"/><line x1="778.2" y1="498.6" x2="801.0" y2="494.3" stroke="#698488" stroke-width="1.41"/><line x1="801.0" y1="494.3" x2="822.4" y2="490.2" stroke="#698488" stroke-width="1.33"/><line x1="822.4" y1="490.2" x2="842.4" y2="486.3" stroke="#698488" stroke-width="1.25"/><line x1="842.4" y1="486.3" x2="861.2" y2="482.7" stroke="#698488" stroke-width="1.18"/><line x1="861.2" y1="482.7" x2="878.7" y2="479.4" stroke="#698488" stroke-width="1.12"/><line x1="878.7" y1="479.4" x2="894.9" y2="476.3" stroke="#698488" stroke-width="1.06"/><line x1="894.9" y1="476.3" x2="910.1" y2="473.4" stroke="#698488" stroke-width="1.00"/><line x1="910.1" y1="473.4" x2="924.2" y2="470.7" stroke="#698488" stroke-width="0.95"/><line x1="924.2" y1="470.7" x2="937.3" y2="468.2" stroke="#698488" stroke-width="0.90"/><line x1="937.3" y1="468.2" x2="949.5" y2="465.8" stroke="#698488" stroke-width="0.85"/><line x1="949.5" y1="465.8" x2="960.9" y2="463.6" stroke="#698488" stroke-width="0.81"/><line x1="960.9" y1="463.6" x2="971.4" y2="461.6" stroke="#698488" stroke-width="0.77"/><line x1="971.4" y1="461.6" x2="981.3" y2="459.7" stroke="#698488" stroke-width="0.74"/><line x1="981.3" y1="459.7" x2="990.5" y2="458.0" stroke="#698488" stroke-width="0.70"/><line x1="990.5" y1="458.0" x2="999.1" y2="456.3" stroke="#698488" stroke-width="0.67"/><line x1="999.1" y1="456.3" x2="1007.2" y2="454.8" stroke="#698488" stroke-width="0.64"/>
<line x1="548.5" y1="553.9" x2="557.4" y2="552.0" stroke="#698488" stroke-width="2.25"/><line x1="557.4" y1="552.0" x2="574.8" y2="548.4" stroke="#698488" stroke-width="2.21"/><line x1="574.8" y1="548.4" x2="596.9" y2="543.8" stroke="#698488" stroke-width="2.13"/><line x1="596.9" y1="543.8" x2="622.0" y2="538.5" stroke="#698488" stroke-width="2.05"/><line x1="622.0" y1="538.5" x2="648.6" y2="533.0" stroke="#698488" stroke-width="1.96"/><line x1="648.6" y1="533.0" x2="675.7" y2="527.3" stroke="#698488" stroke-width="1.86"/><line x1="675.7" y1="527.3" x2="702.6" y2="521.6" stroke="#698488" stroke-width="1.76"/><line x1="702.6" y1="521.6" x2="728.8" y2="516.1" stroke="#698488" stroke-width="1.67"/><line x1="728.8" y1="516.1" x2="754.1" y2="510.9" stroke="#698488" stroke-width="1.58"/><line x1="754.1" y1="510.9" x2="778.2" y2="505.8" stroke="#698488" stroke-width="1.49"/><line x1="778.2" y1="505.8" x2="800.9" y2="501.1" stroke="#698488" stroke-width="1.40"/><line x1="800.9" y1="501.1" x2="822.3" y2="496.6" stroke="#698488" stroke-width="1.32"/><line x1="822.3" y1="496.6" x2="842.4" y2="492.4" stroke="#698488" stroke-width="1.25"/><line x1="842.4" y1="492.4" x2="861.1" y2="488.5" stroke="#698488" stroke-width="1.18"/><line x1="861.1" y1="488.5" x2="878.6" y2="484.8" stroke="#698488" stroke-width="1.12"/><line x1="878.6" y1="484.8" x2="894.8" y2="481.4" stroke="#698488" stroke-width="1.06"/><line x1="894.8" y1="481.4" x2="910.0" y2="478.2" stroke="#698488" stroke-width="1.00"/><line x1="910.0" y1="478.2" x2="924.1" y2="475.3" stroke="#698488" stroke-width="0.95"/><line x1="924.1" y1="475.3" x2="937.2" y2="472.5" stroke="#698488" stroke-width="0.90"/><line x1="937.2" y1="472.5" x2="949.4" y2="470.0" stroke="#698488" stroke-width="0.85"/><line x1="949.4" y1="470.0" x2="960.7" y2="467.6" stroke="#698488" stroke-width="0.81"/><line x1="960.7" y1="467.6" x2="971.3" y2="465.4" stroke="#698488" stroke-width="0.77"/><line x1="971.3" y1="465.4" x2="981.2" y2="463.3" stroke="#698488" stroke-width="0.74"/><line x1="981.2" y1="463.3" x2="990.4" y2="461.4" stroke="#698488" stroke-width="0.70"/><line x1="990.4" y1="461.4" x2="999.0" y2="459.6" stroke="#698488" stroke-width="0.67"/><line x1="999.0" y1="459.6" x2="1007.1" y2="457.9" stroke="#698488" stroke-width="0.64"/>
<line x1="548.8" y1="565.1" x2="557.7" y2="563.0" stroke="#698488" stroke-width="2.25"/><line x1="557.7" y1="563.0" x2="575.1" y2="559.1" stroke="#698488" stroke-width="2.20"/><line x1="575.1" y1="559.1" x2="597.2" y2="554.1" stroke="#698488" stroke-width="2.13"/><line x1="597.2" y1="554.1" x2="622.2" y2="548.4" stroke="#698488" stroke-width="2.05"/><line x1="622.2" y1="548.4" x2="648.7" y2="542.4" stroke="#698488" stroke-width="1.95"/><line x1="648.7" y1="542.4" x2="675.8" y2="536.2" stroke="#698488" stroke-width="1.86"/><line x1="675.8" y1="536.2" x2="702.6" y2="530.1" stroke="#698488" stroke-width="1.76"/><line x1="702.6" y1="530.1" x2="728.9" y2="524.2" stroke="#698488" stroke-width="1.67"/><line x1="728.9" y1="524.2" x2="754.1" y2="518.4" stroke="#698488" stroke-width="1.57"/><line x1="754.1" y1="518.4" x2="778.1" y2="513.0" stroke="#698488" stroke-width="1.49"/><line x1="778.1" y1="513.0" x2="800.9" y2="507.8" stroke="#698488" stroke-width="1.40"/><line x1="800.9" y1="507.8" x2="822.2" y2="503.0" stroke="#698488" stroke-width="1.32"/><line x1="822.2" y1="503.0" x2="842.3" y2="498.4" stroke="#698488" stroke-width="1.25"/><line x1="842.3" y1="498.4" x2="861.0" y2="494.2" stroke="#698488" stroke-width="1.18"/><line x1="861.0" y1="494.2" x2="878.5" y2="490.2" stroke="#698488" stroke-width="1.12"/><line x1="878.5" y1="490.2" x2="894.7" y2="486.5" stroke="#698488" stroke-width="1.06"/><line x1="894.7" y1="486.5" x2="909.9" y2="483.1" stroke="#698488" stroke-width="1.00"/><line x1="909.9" y1="483.1" x2="923.9" y2="479.9" stroke="#698488" stroke-width="0.95"/><line x1="923.9" y1="479.9" x2="937.0" y2="476.9" stroke="#698488" stroke-width="0.90"/><line x1="937.0" y1="476.9" x2="949.2" y2="474.1" stroke="#698488" stroke-width="0.85"/><line x1="949.2" y1="474.1" x2="960.6" y2="471.5" stroke="#698488" stroke-width="0.81"/><line x1="960.6" y1="471.5" x2="971.2" y2="469.1" stroke="#698488" stroke-width="0.77"/><line x1="971.2" y1="469.1" x2="981.1" y2="466.9" stroke="#698488" stroke-width="0.74"/><line x1="981.1" y1="466.9" x2="990.3" y2="464.8" stroke="#698488" stroke-width="0.70"/><line x1="990.3" y1="464.8" x2="998.9" y2="462.9" stroke="#698488" stroke-width="0.67"/><line x1="998.9" y1="462.9" x2="1006.9" y2="461.0" stroke="#698488" stroke-width="0.64"/>
<line x1="549.2" y1="576.2" x2="558.1" y2="574.0" stroke="#698488" stroke-width="2.24"/><line x1="558.1" y1="574.0" x2="575.4" y2="569.8" stroke="#698488" stroke-width="2.20"/><line x1="575.4" y1="569.8" x2="597.4" y2="564.4" stroke="#698488" stroke-width="2.13"/><line x1="597.4" y1="564.4" x2="622.4" y2="558.2" stroke="#698488" stroke-width="2.04"/><line x1="622.4" y1="558.2" x2="648.9" y2="551.8" stroke="#698488" stroke-width="1.95"/><line x1="648.9" y1="551.8" x2="675.9" y2="545.2" stroke="#698488" stroke-width="1.86"/><line x1="675.9" y1="545.2" x2="702.7" y2="538.6" stroke="#698488" stroke-width="1.76"/><line x1="702.7" y1="538.6" x2="728.9" y2="532.2" stroke="#698488" stroke-width="1.66"/><line x1="728.9" y1="532.2" x2="754.1" y2="526.0" stroke="#698488" stroke-width="1.57"/><line x1="754.1" y1="526.0" x2="778.1" y2="520.1" stroke="#698488" stroke-width="1.48"/><line x1="778.1" y1="520.1" x2="800.8" y2="514.6" stroke="#698488" stroke-width="1.40"/><line x1="800.8" y1="514.6" x2="822.2" y2="509.3" stroke="#698488" stroke-width="1.32"/><line x1="822.2" y1="509.3" x2="842.2" y2="504.4" stroke="#698488" stroke-width="1.25"/><line x1="842.2" y1="504.4" x2="860.9" y2="499.9" stroke="#698488" stroke-width="1.18"/><line x1="860.9" y1="499.9" x2="878.4" y2="495.6" stroke="#698488" stroke-width="1.11"/><line x1="878.4" y1="495.6" x2="894.6" y2="491.6" stroke="#698488" stroke-width="1.05"/><line x1="894.6" y1="491.6" x2="909.7" y2="487.9" stroke="#698488" stroke-width="1.00"/><line x1="909.7" y1="487.9" x2="923.8" y2="484.5" stroke="#698488" stroke-width="0.95"/><line x1="923.8" y1="484.5" x2="936.9" y2="481.3" stroke="#698488" stroke-width="0.90"/><line x1="936.9" y1="481.3" x2="949.1" y2="478.3" stroke="#698488" stroke-width="0.85"/><line x1="949.1" y1="478.3" x2="960.5" y2="475.5" stroke="#698488" stroke-width="0.81"/><line x1="960.5" y1="475.5" x2="971.1" y2="472.9" stroke="#698488" stroke-width="0.77"/><line x1="971.1" y1="472.9" x2="980.9" y2="470.5" stroke="#698488" stroke-width="0.73"/><line x1="980.9" y1="470.5" x2="990.1" y2="468.2" stroke="#698488" stroke-width="0.70"/><line x1="990.1" y1="468.2" x2="998.8" y2="466.1" stroke="#698488" stroke-width="0.67"/><line x1="998.8" y1="466.1" x2="1006.8" y2="464.1" stroke="#698488" stroke-width="0.64"/>
<line x1="549.5" y1="587.2" x2="558.4" y2="584.9" stroke="#698488" stroke-width="2.24"/><line x1="558.4" y1="584.9" x2="575.6" y2="580.4" stroke="#698488" stroke-width="2.19"/><line x1="575.6" y1="580.4" x2="597.7" y2="574.6" stroke="#698488" stroke-width="2.12"/><line x1="597.7" y1="574.6" x2="622.6" y2="568.1" stroke="#698488" stroke-width="2.04"/><line x1="622.6" y1="568.1" x2="649.0" y2="561.1" stroke="#698488" stroke-width="1.95"/><line x1="649.0" y1="561.1" x2="676.0" y2="554.1" stroke="#698488" stroke-width="1.85"/><line x1="676.0" y1="554.1" x2="702.8" y2="547.0" stroke="#698488" stroke-width="1.76"/><line x1="702.8" y1="547.0" x2="728.9" y2="540.2" stroke="#698488" stroke-width="1.66"/><line x1="728.9" y1="540.2" x2="754.1" y2="533.6" stroke="#698488" stroke-width="1.57"/><line x1="754.1" y1="533.6" x2="778.1" y2="527.3" stroke="#698488" stroke-width="1.48"/><line x1="778.1" y1="527.3" x2="800.8" y2="521.3" stroke="#698488" stroke-width="1.40"/><line x1="800.8" y1="521.3" x2="822.1" y2="515.7" stroke="#698488" stroke-width="1.32"/><line x1="822.1" y1="515.7" x2="842.1" y2="510.5" stroke="#698488" stroke-width="1.25"/><line x1="842.1" y1="510.5" x2="860.8" y2="505.6" stroke="#698488" stroke-width="1.18"/><line x1="860.8" y1="505.6" x2="878.2" y2="501.0" stroke="#698488" stroke-width="1.11"/><line x1="878.2" y1="501.0" x2="894.5" y2="496.7" stroke="#698488" stroke-width="1.05"/><line x1="894.5" y1="496.7" x2="909.6" y2="492.7" stroke="#698488" stroke-width="1.00"/><line x1="909.6" y1="492.7" x2="923.7" y2="489.0" stroke="#698488" stroke-width="0.95"/><line x1="923.7" y1="489.0" x2="936.8" y2="485.6" stroke="#698488" stroke-width="0.90"/><line x1="936.8" y1="485.6" x2="949.0" y2="482.4" stroke="#698488" stroke-width="0.85"/><line x1="949.0" y1="482.4" x2="960.3" y2="479.4" stroke="#698488" stroke-width="0.81"/><line x1="960.3" y1="479.4" x2="970.9" y2="476.6" stroke="#698488" stroke-width="0.77"/><line x1="970.9" y1="476.6" x2="980.8" y2="474.1" stroke="#698488" stroke-width="0.73"/><line x1="980.8" y1="474.1" x2="990.0" y2="471.6" stroke="#698488" stroke-width="0.70"/><line x1="990.0" y1="471.6" x2="998.6" y2="469.4" stroke="#698488" stroke-width="0.67"/><line x1="998.6" y1="469.4" x2="1006.7" y2="467.3" stroke="#698488" stroke-width="0.64"/>
<line x1="549.9" y1="598.3" x2="558.7" y2="595.8" stroke="#698488" stroke-width="2.24"/><line x1="558.7" y1="595.8" x2="575.9" y2="591.0" stroke="#698488" stroke-width="2.19"/><line x1="575.9" y1="591.0" x2="597.9" y2="584.8" stroke="#698488" stroke-width="2.12"/><line x1="597.9" y1="584.8" x2="622.8" y2="577.9" stroke="#698488" stroke-width="2.04"/><line x1="622.8" y1="577.9" x2="649.2" y2="570.5" stroke="#698488" stroke-width="1.94"/><line x1="649.2" y1="570.5" x2="676.1" y2="562.9" stroke="#698488" stroke-width="1.85"/><line x1="676.1" y1="562.9" x2="702.8" y2="555.4" stroke="#698488" stroke-width="1.75"/><line x1="702.8" y1="555.4" x2="728.9" y2="548.1" stroke="#698488" stroke-width="1.66"/><line x1="728.9" y1="548.1" x2="754.1" y2="541.1" stroke="#698488" stroke-width="1.57"/><line x1="754.1" y1="541.1" x2="778.0" y2="534.4" stroke="#698488" stroke-width="1.48"/><line x1="778.0" y1="534.4" x2="800.7" y2="528.0" stroke="#698488" stroke-width="1.40"/><line x1="800.7" y1="528.0" x2="822.0" y2="522.1" stroke="#698488" stroke-width="1.32"/><line x1="822.0" y1="522.1" x2="842.0" y2="516.5" stroke="#698488" stroke-width="1.25"/><line x1="842.0" y1="516.5" x2="860.7" y2="511.2" stroke="#698488" stroke-width="1.18"/><line x1="860.7" y1="511.2" x2="878.1" y2="506.3" stroke="#698488" stroke-width="1.11"/><line x1="878.1" y1="506.3" x2="894.4" y2="501.8" stroke="#698488" stroke-width="1.05"/><line x1="894.4" y1="501.8" x2="909.5" y2="497.6" stroke="#698488" stroke-width="1.00"/><line x1="909.5" y1="497.6" x2="923.6" y2="493.6" stroke="#698488" stroke-width="0.94"/><line x1="923.6" y1="493.6" x2="936.7" y2="490.0" stroke="#698488" stroke-width="0.90"/><line x1="936.7" y1="490.0" x2="948.9" y2="486.5" stroke="#698488" stroke-width="0.85"/><line x1="948.9" y1="486.5" x2="960.2" y2="483.4" stroke="#698488" stroke-width="0.81"/><line x1="960.2" y1="483.4" x2="970.8" y2="480.4" stroke="#698488" stroke-width="0.77"/><line x1="970.8" y1="480.4" x2="980.7" y2="477.6" stroke="#698488" stroke-width="0.73"/><line x1="980.7" y1="477.6" x2="989.9" y2="475.1" stroke="#698488" stroke-width="0.70"/><line x1="989.9" y1="475.1" x2="998.5" y2="472.6" stroke="#698488" stroke-width="0.67"/><line x1="998.5" y1="472.6" x2="1006.6" y2="470.4" stroke="#698488" stroke-width="0.64"/>
<line x1="550.2" y1="609.3" x2="559.0" y2="606.7" stroke="#698488" stroke-width="2.23"/><line x1="559.0" y1="606.7" x2="576.2" y2="601.5" stroke="#698488" stroke-width="2.19"/><line x1="576.2" y1="601.5" x2="598.2" y2="595.0" stroke="#698488" stroke-width="2.12"/><line x1="598.2" y1="595.0" x2="623.0" y2="587.6" stroke="#698488" stroke-width="2.03"/><line x1="623.0" y1="587.6" x2="649.3" y2="579.8" stroke="#698488" stroke-width="1.94"/><line x1="649.3" y1="579.8" x2="676.2" y2="571.8" stroke="#698488" stroke-width="1.85"/><line x1="676.2" y1="571.8" x2="702.9" y2="563.8" stroke="#698488" stroke-width="1.75"/><line x1="702.9" y1="563.8" x2="729.0" y2="556.1" stroke="#698488" stroke-width="1.66"/><line x1="729.0" y1="556.1" x2="754.1" y2="548.6" stroke="#698488" stroke-width="1.57"/><line x1="754.1" y1="548.6" x2="778.0" y2="541.5" stroke="#698488" stroke-width="1.48"/><line x1="778.0" y1="541.5" x2="800.6" y2="534.7" stroke="#698488" stroke-width="1.40"/><line x1="800.6" y1="534.7" x2="822.0" y2="528.4" stroke="#698488" stroke-width="1.32"/><line x1="822.0" y1="528.4" x2="841.9" y2="522.5" stroke="#698488" stroke-width="1.24"/><line x1="841.9" y1="522.5" x2="860.6" y2="516.9" stroke="#698488" stroke-width="1.18"/><line x1="860.6" y1="516.9" x2="878.0" y2="511.7" stroke="#698488" stroke-width="1.11"/><line x1="878.0" y1="511.7" x2="894.3" y2="506.9" stroke="#698488" stroke-width="1.05"/><line x1="894.3" y1="506.9" x2="909.4" y2="502.4" stroke="#698488" stroke-width="1.00"/><line x1="909.4" y1="502.4" x2="923.4" y2="498.2" stroke="#698488" stroke-width="0.94"/><line x1="923.4" y1="498.2" x2="936.5" y2="494.3" stroke="#698488" stroke-width="0.90"/><line x1="936.5" y1="494.3" x2="948.7" y2="490.7" stroke="#698488" stroke-width="0.85"/><line x1="948.7" y1="490.7" x2="960.1" y2="487.3" stroke="#698488" stroke-width="0.81"/><line x1="960.1" y1="487.3" x2="970.7" y2="484.1" stroke="#698488" stroke-width="0.77"/><line x1="970.7" y1="484.1" x2="980.6" y2="481.2" stroke="#698488" stroke-width="0.73"/><line x1="980.6" y1="481.2" x2="989.8" y2="478.5" stroke="#698488" stroke-width="0.70"/><line x1="989.8" y1="478.5" x2="998.4" y2="475.9" stroke="#698488" stroke-width="0.67"/><line x1="998.4" y1="475.9" x2="1006.4" y2="473.5" stroke="#698488" stroke-width="0.64"/>
<line x1="488.6" y1="491.1" x2="554.9" y2="493.3" stroke="#615e5f" stroke-width="2.96"/>
<line x1="554.9" y1="493.3" x2="558.6" y2="614.1" stroke="#675f62" stroke-width="2.96"/>
<line x1="505.7" y1="489.4" x2="570.8" y2="491.4" stroke="#615e5f" stroke-width="2.88"/>
<line x1="570.8" y1="491.4" x2="574.1" y2="609.3" stroke="#675f62" stroke-width="2.88"/>
<line x1="522.0" y1="487.7" x2="586.0" y2="489.7" stroke="#615e5f" stroke-width="2.81"/>
<line x1="586.0" y1="489.7" x2="589.0" y2="604.7" stroke="#675f62" stroke-width="2.81"/>
<line x1="537.6" y1="486.2" x2="600.5" y2="488.0" stroke="#615e5f" stroke-width="2.74"/>
<line x1="600.5" y1="488.0" x2="603.1" y2="600.4" stroke="#675f62" stroke-width="2.74"/>
<line x1="552.4" y1="484.7" x2="614.2" y2="486.5" stroke="#615e5f" stroke-width="2.68"/>
<line x1="614.2" y1="486.5" x2="616.6" y2="596.2" stroke="#675f62" stroke-width="2.68"/>
<line x1="566.5" y1="483.2" x2="627.4" y2="484.9" stroke="#615e5f" stroke-width="2.62"/>
<line x1="627.4" y1="484.9" x2="629.4" y2="592.2" stroke="#675f62" stroke-width="2.62"/>
<line x1="580.1" y1="481.9" x2="639.9" y2="483.5" stroke="#615e5f" stroke-width="2.56"/>
<line x1="639.9" y1="483.5" x2="641.7" y2="588.4" stroke="#675f62" stroke-width="2.56"/>
<line x1="593.0" y1="480.6" x2="651.9" y2="482.1" stroke="#615e5f" stroke-width="2.50"/>
<line x1="651.9" y1="482.1" x2="653.4" y2="584.8" stroke="#675f62" stroke-width="2.50"/>
<line x1="605.5" y1="479.3" x2="663.3" y2="480.8" stroke="#615e5f" stroke-width="2.45"/>
<line x1="663.3" y1="480.8" x2="664.7" y2="581.3" stroke="#675f62" stroke-width="2.45"/>
<line x1="617.4" y1="478.1" x2="674.3" y2="479.6" stroke="#615e5f" stroke-width="2.39"/>
<line x1="674.3" y1="479.6" x2="675.5" y2="578.0" stroke="#675f62" stroke-width="2.39"/>
<line x1="628.8" y1="477.0" x2="684.8" y2="478.4" stroke="#615e5f" stroke-width="2.34"/>
<line x1="684.8" y1="478.4" x2="685.8" y2="574.8" stroke="#675f62" stroke-width="2.34"/>
<line x1="639.7" y1="475.9" x2="694.9" y2="477.2" stroke="#615e5f" stroke-width="2.30"/>
<line x1="694.9" y1="477.2" x2="695.7" y2="571.7" stroke="#675f62" stroke-width="2.30"/>
<line x1="650.3" y1="474.8" x2="704.6" y2="476.1" stroke="#615e5f" stroke-width="2.25"/>
<line x1="704.6" y1="476.1" x2="705.3" y2="568.7" stroke="#675f62" stroke-width="2.25"/>
<line x1="660.4" y1="473.8" x2="713.9" y2="475.0" stroke="#615e5f" stroke-width="2.21"/>
<line x1="713.9" y1="475.0" x2="714.4" y2="565.9" stroke="#675f62" stroke-width="2.21"/>
<line x1="670.2" y1="472.8" x2="722.9" y2="474.0" stroke="#615e5f" stroke-width="2.16"/>
<line x1="722.9" y1="474.0" x2="723.3" y2="563.2" stroke="#675f62" stroke-width="2.16"/>
<line x1="679.6" y1="471.9" x2="731.5" y2="473.0" stroke="#615e5f" stroke-width="2.12"/>
<line x1="731.5" y1="473.0" x2="731.8" y2="560.6" stroke="#675f62" stroke-width="2.12"/>
<line x1="688.6" y1="470.9" x2="739.8" y2="472.0" stroke="#615e5f" stroke-width="2.08"/>
<line x1="739.8" y1="472.0" x2="739.9" y2="558.0" stroke="#675f62" stroke-width="2.08"/>
<line x1="697.4" y1="470.1" x2="747.8" y2="471.1" stroke="#615e5f" stroke-width="2.05"/>
<line x1="747.8" y1="471.1" x2="747.8" y2="555.6" stroke="#675f62" stroke-width="2.05"/>
<line x1="705.8" y1="469.2" x2="755.5" y2="470.2" stroke="#615e5f" stroke-width="2.01"/>
<line x1="755.5" y1="470.2" x2="755.5" y2="553.2" stroke="#675f62" stroke-width="2.01"/>
<line x1="713.9" y1="468.4" x2="762.9" y2="469.4" stroke="#615e5f" stroke-width="1.98"/>
<line x1="762.9" y1="469.4" x2="762.8" y2="550.9" stroke="#675f62" stroke-width="1.98"/>
<line x1="721.8" y1="467.6" x2="770.1" y2="468.6" stroke="#615e5f" stroke-width="1.94"/>
<line x1="770.1" y1="468.6" x2="769.9" y2="548.7" stroke="#675f62" stroke-width="1.94"/>
<line x1="729.4" y1="466.8" x2="777.1" y2="467.8" stroke="#615e5f" stroke-width="1.91"/>
<line x1="777.1" y1="467.8" x2="776.8" y2="546.6" stroke="#675f62" stroke-width="1.91"/>
<line x1="736.8" y1="466.1" x2="783.8" y2="467.0" stroke="#615e5f" stroke-width="1.88"/>
<line x1="783.8" y1="467.0" x2="783.4" y2="544.6" stroke="#675f62" stroke-width="1.88"/>
<line x1="743.9" y1="465.4" x2="790.3" y2="466.2" stroke="#615e5f" stroke-width="1.85"/>
<line x1="790.3" y1="466.2" x2="789.8" y2="542.6" stroke="#675f62" stroke-width="1.85"/>
<line x1="750.8" y1="464.7" x2="796.6" y2="465.5" stroke="#615e5f" stroke-width="1.82"/>
<line x1="796.6" y1="465.5" x2="796.1" y2="540.7" stroke="#675f62" stroke-width="1.82"/>
<line x1="757.5" y1="464.0" x2="802.7" y2="464.8" stroke="#615e5f" stroke-width="1.79"/>
<line x1="802.7" y1="464.8" x2="802.1" y2="538.8" stroke="#675f62" stroke-width="1.79"/>
<line x1="764.0" y1="463.4" x2="808.6" y2="464.1" stroke="#615e5f" stroke-width="1.76"/>
<line x1="808.6" y1="464.1" x2="807.9" y2="537.0" stroke="#675f62" stroke-width="1.76"/>
<line x1="770.3" y1="462.7" x2="814.3" y2="463.5" stroke="#615e5f" stroke-width="1.73"/>
<line x1="814.3" y1="463.5" x2="813.6" y2="535.2" stroke="#675f62" stroke-width="1.73"/>
<line x1="776.4" y1="462.1" x2="819.9" y2="462.9" stroke="#615e5f" stroke-width="1.71"/>
<line x1="819.9" y1="462.9" x2="819.1" y2="533.5" stroke="#675f62" stroke-width="1.71"/>
<line x1="782.3" y1="461.5" x2="825.2" y2="462.2" stroke="#615e5f" stroke-width="1.68"/>
<line x1="825.2" y1="462.2" x2="824.4" y2="531.9" stroke="#675f62" stroke-width="1.68"/>
<line x1="788.0" y1="460.9" x2="830.5" y2="461.6" stroke="#615e5f" stroke-width="1.66"/>
<line x1="830.5" y1="461.6" x2="829.6" y2="530.3" stroke="#675f62" stroke-width="1.66"/>
<line x1="793.6" y1="460.4" x2="835.5" y2="461.1" stroke="#615e5f" stroke-width="1.63"/>
<line x1="835.5" y1="461.1" x2="834.7" y2="528.7" stroke="#675f62" stroke-width="1.63"/>
<line x1="799.1" y1="459.8" x2="840.5" y2="460.5" stroke="#615e5f" stroke-width="1.61"/>
<line x1="840.5" y1="460.5" x2="839.5" y2="527.2" stroke="#675f62" stroke-width="1.61"/>
<line x1="804.3" y1="459.3" x2="845.3" y2="459.9" stroke="#615e5f" stroke-width="1.59"/>
<line x1="845.3" y1="459.9" x2="844.3" y2="525.7" stroke="#675f62" stroke-width="1.59"/>
<line x1="809.5" y1="458.8" x2="849.9" y2="459.4" stroke="#615e5f" stroke-width="1.56"/>
<line x1="849.9" y1="459.4" x2="848.9" y2="524.3" stroke="#675f62" stroke-width="1.56"/>
<line x1="814.5" y1="458.3" x2="854.4" y2="458.9" stroke="#615e5f" stroke-width="1.54"/>
<line x1="854.4" y1="458.9" x2="853.4" y2="522.9" stroke="#675f62" stroke-width="1.54"/>
<line x1="819.4" y1="457.8" x2="858.8" y2="458.4" stroke="#615e5f" stroke-width="1.52"/>
<line x1="858.8" y1="458.4" x2="857.8" y2="521.6" stroke="#675f62" stroke-width="1.52"/>
<line x1="824.1" y1="457.3" x2="863.1" y2="457.9" stroke="#615e5f" stroke-width="1.50"/>
<line x1="863.1" y1="457.9" x2="862.1" y2="520.2" stroke="#675f62" stroke-width="1.50"/>
<line x1="828.7" y1="456.8" x2="867.3" y2="457.4" stroke="#615e5f" stroke-width="1.48"/>
<line x1="867.3" y1="457.4" x2="866.2" y2="518.9" stroke="#675f62" stroke-width="1.48"/>
<line x1="833.2" y1="456.4" x2="871.4" y2="456.9" stroke="#615e5f" stroke-width="1.46"/>
<line x1="871.4" y1="456.9" x2="870.3" y2="517.7" stroke="#675f62" stroke-width="1.46"/>
<line x1="837.6" y1="456.0" x2="875.4" y2="456.5" stroke="#615e5f" stroke-width="1.44"/>
<line x1="875.4" y1="456.5" x2="874.2" y2="516.5" stroke="#675f62" stroke-width="1.44"/>
<line x1="841.9" y1="455.5" x2="879.2" y2="456.0" stroke="#615e5f" stroke-width="1.43"/>
<line x1="879.2" y1="456.0" x2="878.1" y2="515.3" stroke="#675f62" stroke-width="1.43"/>
<line x1="846.1" y1="455.1" x2="883.0" y2="455.6" stroke="#615e5f" stroke-width="1.41"/>
<line x1="883.0" y1="455.6" x2="881.8" y2="514.1" stroke="#675f62" stroke-width="1.41"/>
<line x1="850.1" y1="454.7" x2="886.7" y2="455.2" stroke="#615e5f" stroke-width="1.39"/>
<line x1="886.7" y1="455.2" x2="885.5" y2="513.0" stroke="#675f62" stroke-width="1.39"/>
<line x1="854.1" y1="454.3" x2="890.3" y2="454.8" stroke="#615e5f" stroke-width="1.37"/>
<line x1="890.3" y1="454.8" x2="889.0" y2="511.9" stroke="#675f62" stroke-width="1.37"/>
<line x1="858.0" y1="453.9" x2="893.8" y2="454.4" stroke="#615e5f" stroke-width="1.36"/>
<line x1="893.8" y1="454.4" x2="892.5" y2="510.8" stroke="#675f62" stroke-width="1.36"/>
<line x1="861.8" y1="453.5" x2="897.2" y2="454.0" stroke="#615e5f" stroke-width="1.34"/>
<line x1="897.2" y1="454.0" x2="895.9" y2="509.8" stroke="#675f62" stroke-width="1.34"/>
<line x1="865.5" y1="453.1" x2="900.5" y2="453.6" stroke="#615e5f" stroke-width="1.33"/>
<line x1="900.5" y1="453.6" x2="899.3" y2="508.7" stroke="#675f62" stroke-width="1.33"/>
<line x1="869.1" y1="452.8" x2="903.8" y2="453.2" stroke="#615e5f" stroke-width="1.31"/>
<line x1="903.8" y1="453.2" x2="902.5" y2="507.7" stroke="#675f62" stroke-width="1.31"/>
<line x1="872.6" y1="452.4" x2="907.0" y2="452.9" stroke="#615e5f" stroke-width="1.29"/>
<line x1="907.0" y1="452.9" x2="905.7" y2="506.7" stroke="#675f62" stroke-width="1.29"/>
<line x1="876.1" y1="452.1" x2="910.1" y2="452.5" stroke="#615e5f" stroke-width="1.28"/>
<line x1="910.1" y1="452.5" x2="908.8" y2="505.8" stroke="#675f62" stroke-width="1.28"/>
<line x1="879.5" y1="451.7" x2="913.1" y2="452.1" stroke="#615e5f" stroke-width="1.27"/>
<line x1="913.1" y1="452.1" x2="911.8" y2="504.8" stroke="#675f62" stroke-width="1.27"/>
<line x1="882.8" y1="451.4" x2="916.1" y2="451.8" stroke="#615e5f" stroke-width="1.25"/>
<line x1="916.1" y1="451.8" x2="914.8" y2="503.9" stroke="#675f62" stroke-width="1.25"/>
<line x1="886.0" y1="451.1" x2="919.0" y2="451.5" stroke="#615e5f" stroke-width="1.24"/>
<line x1="919.0" y1="451.5" x2="917.7" y2="503.0" stroke="#675f62" stroke-width="1.24"/>
<line x1="889.2" y1="450.8" x2="921.9" y2="451.1" stroke="#615e5f" stroke-width="1.22"/>
<line x1="921.9" y1="451.1" x2="920.5" y2="502.1" stroke="#675f62" stroke-width="1.22"/>
<line x1="892.3" y1="450.5" x2="924.6" y2="450.8" stroke="#615e5f" stroke-width="1.21"/>
<line x1="924.6" y1="450.8" x2="923.3" y2="501.3" stroke="#675f62" stroke-width="1.21"/>
<line x1="895.3" y1="450.1" x2="927.4" y2="450.5" stroke="#615e5f" stroke-width="1.20"/>
<line x1="927.4" y1="450.5" x2="926.0" y2="500.4" stroke="#675f62" stroke-width="1.20"/>
<line x1="898.3" y1="449.8" x2="930.0" y2="450.2" stroke="#615e5f" stroke-width="1.19"/>
<line x1="930.0" y1="450.2" x2="928.7" y2="499.6" stroke="#675f62" stroke-width="1.19"/>
<line x1="901.2" y1="449.6" x2="932.7" y2="449.9" stroke="#615e5f" stroke-width="1.17"/>
<line x1="932.7" y1="449.9" x2="931.3" y2="498.8" stroke="#675f62" stroke-width="1.17"/>
<line x1="904.0" y1="449.3" x2="935.2" y2="449.6" stroke="#615e5f" stroke-width="1.16"/>
<line x1="935.2" y1="449.6" x2="933.9" y2="498.0" stroke="#675f62" stroke-width="1.16"/>
<line x1="906.8" y1="449.0" x2="937.7" y2="449.3" stroke="#615e5f" stroke-width="1.15"/>
<line x1="937.7" y1="449.3" x2="936.4" y2="497.2" stroke="#675f62" stroke-width="1.15"/>
<line x1="909.6" y1="448.7" x2="940.2" y2="449.0" stroke="#615e5f" stroke-width="1.14"/>
<line x1="940.2" y1="449.0" x2="938.8" y2="496.5" stroke="#675f62" stroke-width="1.14"/>
<line x1="912.2" y1="448.4" x2="942.6" y2="448.8" stroke="#615e5f" stroke-width="1.13"/>
<line x1="942.6" y1="448.8" x2="941.2" y2="495.7" stroke="#675f62" stroke-width="1.13"/>
<line x1="914.9" y1="448.2" x2="945.0" y2="448.5" stroke="#615e5f" stroke-width="1.12"/>
<line x1="945.0" y1="448.5" x2="943.6" y2="495.0" stroke="#675f62" stroke-width="1.12"/>
<line x1="917.5" y1="447.9" x2="947.3" y2="448.2" stroke="#615e5f" stroke-width="1.10"/>
<line x1="947.3" y1="448.2" x2="945.9" y2="494.3" stroke="#675f62" stroke-width="1.10"/>
<line x1="920.0" y1="447.7" x2="949.6" y2="448.0" stroke="#615e5f" stroke-width="1.09"/>
<line x1="949.6" y1="448.0" x2="948.2" y2="493.6" stroke="#675f62" stroke-width="1.09"/>
<line x1="922.5" y1="447.4" x2="951.8" y2="447.7" stroke="#615e5f" stroke-width="1.08"/>
<line x1="951.8" y1="447.7" x2="950.4" y2="492.9" stroke="#675f62" stroke-width="1.08"/>
<line x1="924.9" y1="447.2" x2="954.0" y2="447.5" stroke="#615e5f" stroke-width="1.07"/>
<line x1="954.0" y1="447.5" x2="952.6" y2="492.2" stroke="#675f62" stroke-width="1.07"/>
<line x1="927.3" y1="446.9" x2="956.1" y2="447.2" stroke="#615e5f" stroke-width="1.06"/>
<line x1="956.1" y1="447.2" x2="954.7" y2="491.6" stroke="#675f62" stroke-width="1.06"/>
<line x1="929.6" y1="446.7" x2="958.2" y2="447.0" stroke="#615e5f" stroke-width="1.05"/>
<line x1="958.2" y1="447.0" x2="956.8" y2="490.9" stroke="#675f62" stroke-width="1.05"/>
<line x1="931.9" y1="446.5" x2="960.3" y2="446.7" stroke="#615e5f" stroke-width="1.04"/>
<line x1="960.3" y1="446.7" x2="958.9" y2="490.3" stroke="#675f62" stroke-width="1.04"/>
<line x1="934.2" y1="446.2" x2="962.3" y2="446.5" stroke="#615e5f" stroke-width="1.03"/>
<line x1="962.3" y1="446.5" x2="960.9" y2="489.7" stroke="#675f62" stroke-width="1.03"/>
<line x1="936.4" y1="446.0" x2="964.3" y2="446.3" stroke="#615e5f" stroke-width="1.02"/>
<line x1="964.3" y1="446.3" x2="962.9" y2="489.0" stroke="#675f62" stroke-width="1.02"/>
<line x1="938.6" y1="445.8" x2="966.2" y2="446.1" stroke="#615e5f" stroke-width="1.01"/>
<line x1="966.2" y1="446.1" x2="964.8" y2="488.4" stroke="#675f62" stroke-width="1.01"/>
<line x1="940.8" y1="445.6" x2="968.2" y2="445.8" stroke="#615e5f" stroke-width="1.01"/>
<line x1="968.2" y1="445.8" x2="966.8" y2="487.8" stroke="#675f62" stroke-width="1.01"/>
<line x1="942.9" y1="445.4" x2="970.1" y2="445.6" stroke="#615e5f" stroke-width="1.00"/>
<line x1="970.1" y1="445.6" x2="968.7" y2="487.3" stroke="#675f62" stroke-width="1.00"/>
<line x1="944.9" y1="445.2" x2="971.9" y2="445.4" stroke="#615e5f" stroke-width="0.99"/>
<line x1="971.9" y1="445.4" x2="970.5" y2="486.7" stroke="#675f62" stroke-width="0.99"/>
<line x1="947.0" y1="444.9" x2="973.7" y2="445.2" stroke="#615e5f" stroke-width="0.98"/>
<line x1="973.7" y1="445.2" x2="972.3" y2="486.1" stroke="#675f62" stroke-width="0.98"/>
<line x1="949.0" y1="444.7" x2="975.5" y2="445.0" stroke="#615e5f" stroke-width="0.97"/>
<line x1="975.5" y1="445.0" x2="974.1" y2="485.6" stroke="#675f62" stroke-width="0.97"/>
<line x1="950.9" y1="444.5" x2="977.3" y2="444.8" stroke="#615e5f" stroke-width="0.96"/>
<line x1="977.3" y1="444.8" x2="975.9" y2="485.0" stroke="#675f62" stroke-width="0.96"/>
<line x1="952.9" y1="444.4" x2="979.0" y2="444.6" stroke="#615e5f" stroke-width="0.95"/>
<line x1="979.0" y1="444.6" x2="977.6" y2="484.5" stroke="#675f62" stroke-width="0.95"/>
<line x1="954.8" y1="444.2" x2="980.7" y2="444.4" stroke="#615e5f" stroke-width="0.95"/>
<line x1="980.7" y1="444.4" x2="979.3" y2="484.0" stroke="#675f62" stroke-width="0.95"/>
<line x1="956.6" y1="444.0" x2="982.4" y2="444.2" stroke="#615e5f" stroke-width="0.94"/>
<line x1="982.4" y1="444.2" x2="981.0" y2="483.4" stroke="#675f62" stroke-width="0.94"/>
<line x1="958.5" y1="443.8" x2="984.0" y2="444.0" stroke="#615e5f" stroke-width="0.93"/>
<line x1="984.0" y1="444.0" x2="982.6" y2="482.9" stroke="#675f62" stroke-width="0.93"/>
<line x1="960.3" y1="443.6" x2="985.6" y2="443.8" stroke="#615e5f" stroke-width="0.92"/>
<line x1="985.6" y1="443.8" x2="984.3" y2="482.4" stroke="#675f62" stroke-width="0.92"/>
<line x1="962.1" y1="443.4" x2="987.2" y2="443.6" stroke="#615e5f" stroke-width="0.92"/>
<line x1="987.2" y1="443.6" x2="985.8" y2="481.9" stroke="#675f62" stroke-width="0.92"/>
<line x1="963.8" y1="443.3" x2="988.8" y2="443.5" stroke="#615e5f" stroke-width="0.91"/>
<line x1="988.8" y1="443.5" x2="987.4" y2="481.4" stroke="#675f62" stroke-width="0.91"/>
<line x1="965.5" y1="443.1" x2="990.3" y2="443.3" stroke="#615e5f" stroke-width="0.90"/>
<line x1="990.3" y1="443.3" x2="989.0" y2="481.0" stroke="#675f62" stroke-width="0.90"/>
<line x1="967.2" y1="442.9" x2="991.9" y2="443.1" stroke="#615e5f" stroke-width="0.89"/>
<line x1="991.9" y1="443.1" x2="990.5" y2="480.5" stroke="#675f62" stroke-width="0.89"/>
<line x1="968.9" y1="442.7" x2="993.3" y2="442.9" stroke="#615e5f" stroke-width="0.89"/>
<line x1="993.3" y1="442.9" x2="992.0" y2="480.0" stroke="#675f62" stroke-width="0.89"/>
<line x1="970.5" y1="442.6" x2="994.8" y2="442.8" stroke="#615e5f" stroke-width="0.88"/>
<line x1="994.8" y1="442.8" x2="993.4" y2="479.6" stroke="#675f62" stroke-width="0.88"/>
<line x1="972.2" y1="442.4" x2="996.3" y2="442.6" stroke="#615e5f" stroke-width="0.87"/>
<line x1="996.3" y1="442.6" x2="994.9" y2="479.1" stroke="#675f62" stroke-width="0.87"/>
<line x1="973.8" y1="442.3" x2="997.7" y2="442.4" stroke="#615e5f" stroke-width="0.87"/>
<line x1="997.7" y1="442.4" x2="996.3" y2="478.7" stroke="#675f62" stroke-width="0.87"/>
<line x1="975.3" y1="442.1" x2="999.1" y2="442.3" stroke="#615e5f" stroke-width="0.86"/>
<line x1="999.1" y1="442.3" x2="997.7" y2="478.3" stroke="#675f62" stroke-width="0.86"/>
<line x1="976.9" y1="441.9" x2="1000.5" y2="442.1" stroke="#615e5f" stroke-width="0.85"/>
<line x1="1000.5" y1="442.1" x2="999.1" y2="477.8" stroke="#675f62" stroke-width="0.85"/>
<line x1="978.4" y1="441.8" x2="1001.8" y2="442.0" stroke="#615e5f" stroke-width="0.85"/>
<line x1="1001.8" y1="442.0" x2="1000.5" y2="477.4" stroke="#675f62" stroke-width="0.85"/>
<line x1="979.9" y1="441.6" x2="1003.2" y2="441.8" stroke="#615e5f" stroke-width="0.84"/>
<line x1="1003.2" y1="441.8" x2="1001.8" y2="477.0" stroke="#675f62" stroke-width="0.84"/>
<line x1="981.4" y1="441.5" x2="1004.5" y2="441.7" stroke="#615e5f" stroke-width="0.83"/>
<line x1="1004.5" y1="441.7" x2="1003.1" y2="476.6" stroke="#675f62" stroke-width="0.83"/>
<line x1="982.8" y1="441.3" x2="1005.8" y2="441.5" stroke="#615e5f" stroke-width="0.83"/>
<line x1="1005.8" y1="441.5" x2="1004.4" y2="476.2" stroke="#675f62" stroke-width="0.83"/>
<line x1="984.3" y1="441.2" x2="1007.1" y2="441.4" stroke="#615e5f" stroke-width="0.82"/>
<line x1="1007.1" y1="441.4" x2="1005.7" y2="475.8" stroke="#675f62" stroke-width="0.82"/>
<line x1="546.7" y1="498.4" x2="555.7" y2="497.3" stroke="#5f8286" stroke-width="2.57"/><line x1="555.7" y1="497.3" x2="573.3" y2="495.1" stroke="#5f8286" stroke-width="2.51"/><line x1="573.3" y1="495.1" x2="595.7" y2="492.4" stroke="#5f8286" stroke-width="2.43"/><line x1="595.7" y1="492.4" x2="621.0" y2="489.3" stroke="#5f8286" stroke-width="2.33"/><line x1="621.0" y1="489.3" x2="647.8" y2="486.1" stroke="#5f8286" stroke-width="2.23"/><line x1="647.8" y1="486.1" x2="675.1" y2="482.8" stroke="#5f8286" stroke-width="2.12"/><line x1="675.1" y1="482.8" x2="702.3" y2="479.5" stroke="#5f8286" stroke-width="2.01"/><line x1="702.3" y1="479.5" x2="728.7" y2="476.3" stroke="#5f8286" stroke-width="1.90"/><line x1="728.7" y1="476.3" x2="754.1" y2="473.2" stroke="#5f8286" stroke-width="1.79"/><line x1="754.1" y1="473.2" x2="778.3" y2="470.3" stroke="#5f8286" stroke-width="1.69"/><line x1="778.3" y1="470.3" x2="801.2" y2="467.5" stroke="#5f8286" stroke-width="1.60"/><line x1="801.2" y1="467.5" x2="822.7" y2="464.9" stroke="#5f8286" stroke-width="1.51"/><line x1="822.7" y1="464.9" x2="842.8" y2="462.4" stroke="#5f8286" stroke-width="1.42"/><line x1="842.8" y1="462.4" x2="861.6" y2="460.2" stroke="#5f8286" stroke-width="1.34"/><line x1="861.6" y1="460.2" x2="879.1" y2="458.0" stroke="#5f8286" stroke-width="1.27"/><line x1="879.1" y1="458.0" x2="895.4" y2="456.1" stroke="#5f8286" stroke-width="1.20"/><line x1="895.4" y1="456.1" x2="910.6" y2="454.2" stroke="#5f8286" stroke-width="1.13"/><line x1="910.6" y1="454.2" x2="924.7" y2="452.5" stroke="#5f8286" stroke-width="1.08"/><line x1="924.7" y1="452.5" x2="937.8" y2="450.9" stroke="#5f8286" stroke-width="1.02"/><line x1="937.8" y1="450.9" x2="950.0" y2="449.4" stroke="#5f8286" stroke-width="0.97"/><line x1="950.0" y1="449.4" x2="961.4" y2="448.1" stroke="#5f8286" stroke-width="0.92"/><line x1="961.4" y1="448.1" x2="971.9" y2="446.8" stroke="#5f8286" stroke-width="0.88"/><line x1="971.9" y1="446.8" x2="981.8" y2="445.6" stroke="#5f8286" stroke-width="0.83"/><line x1="981.8" y1="445.6" x2="991.0" y2="444.5" stroke="#5f8286" stroke-width="0.80"/><line x1="991.0" y1="444.5" x2="999.6" y2="443.4" stroke="#5f8286" stroke-width="0.76"/><line x1="999.6" y1="443.4" x2="1007.7" y2="442.4" stroke="#5f8286" stroke-width="0.73"/>
<line x1="479.8" y1="496.0" x2="489.5" y2="495.0" stroke="#5f8286" stroke-width="2.11"/><line x1="489.5" y1="495.0" x2="508.4" y2="493.0" stroke="#5f8286" stroke-width="2.06"/><line x1="508.4" y1="493.0" x2="532.5" y2="490.4" stroke="#5f8286" stroke-width="2.00"/><line x1="532.5" y1="490.4" x2="559.7" y2="487.5" stroke="#5f8286" stroke-width="1.92"/><line x1="559.7" y1="487.5" x2="588.7" y2="484.4" stroke="#5f8286" stroke-width="1.84"/><line x1="588.7" y1="484.4" x2="618.3" y2="481.3" stroke="#5f8286" stroke-width="1.75"/><line x1="618.3" y1="481.3" x2="647.7" y2="478.1" stroke="#5f8286" stroke-width="1.66"/><line x1="647.7" y1="478.1" x2="676.5" y2="475.1" stroke="#5f8286" stroke-width="1.57"/><line x1="676.5" y1="475.1" x2="704.3" y2="472.1" stroke="#5f8286" stroke-width="1.48"/><line x1="704.3" y1="472.1" x2="730.8" y2="469.3" stroke="#5f8286" stroke-width="1.40"/><line x1="730.8" y1="469.3" x2="755.8" y2="466.6" stroke="#5f8286" stroke-width="1.32"/><line x1="755.8" y1="466.6" x2="779.5" y2="464.1" stroke="#5f8286" stroke-width="1.25"/><line x1="779.5" y1="464.1" x2="801.6" y2="461.8" stroke="#5f8286" stroke-width="1.18"/><line x1="801.6" y1="461.8" x2="822.4" y2="459.5" stroke="#5f8286" stroke-width="1.12"/><line x1="822.4" y1="459.5" x2="841.7" y2="457.5" stroke="#5f8286" stroke-width="1.06"/><line x1="841.7" y1="457.5" x2="859.8" y2="455.6" stroke="#5f8286" stroke-width="1.00"/><line x1="859.8" y1="455.6" x2="876.6" y2="453.8" stroke="#5f8286" stroke-width="0.95"/><line x1="876.6" y1="453.8" x2="892.3" y2="452.1" stroke="#5f8286" stroke-width="0.90"/><line x1="892.3" y1="452.1" x2="906.9" y2="450.6" stroke="#5f8286" stroke-width="0.85"/><line x1="906.9" y1="450.6" x2="920.5" y2="449.1" stroke="#5f8286" stroke-width="0.81"/><line x1="920.5" y1="449.1" x2="933.2" y2="447.8" stroke="#5f8286" stroke-width="0.77"/><line x1="933.2" y1="447.8" x2="945.0" y2="446.5" stroke="#5f8286" stroke-width="0.73"/><line x1="945.0" y1="446.5" x2="956.0" y2="445.3" stroke="#5f8286" stroke-width="0.70"/><line x1="956.0" y1="445.3" x2="966.3" y2="444.2" stroke="#5f8286" stroke-width="0.67"/><line x1="966.3" y1="444.2" x2="975.9" y2="443.2" stroke="#5f8286" stroke-width="0.64"/><line x1="975.9" y1="443.2" x2="984.9" y2="442.3" stroke="#5f8286" stroke-width="0.61"/>
<line x1="493.3" y1="737.3" x2="504.7" y2="732.1" stroke="#5c9aa0" stroke-width="2.40" stroke-opacity="0.90"/><line x1="504.7" y1="732.1" x2="526.5" y2="722.1" stroke="#5c9aa0" stroke-width="2.34" stroke-opacity="0.90"/><line x1="526.5" y1="722.1" x2="554.2" y2="709.4" stroke="#5c9aa0" stroke-width="2.25" stroke-opacity="0.90"/><line x1="554.2" y1="709.4" x2="585.0" y2="695.2" stroke="#5c9aa0" stroke-width="2.15" stroke-opacity="0.90"/><line x1="585.0" y1="695.2" x2="617.3" y2="680.4" stroke="#5c9aa0" stroke-width="2.04" stroke-opacity="0.90"/><line x1="617.3" y1="680.4" x2="649.8" y2="665.5" stroke="#5c9aa0" stroke-width="1.92" stroke-opacity="0.90"/><line x1="649.8" y1="665.5" x2="681.5" y2="650.9" stroke="#5c9aa0" stroke-width="1.81" stroke-opacity="0.90"/><line x1="681.5" y1="650.9" x2="712.1" y2="636.9" stroke="#5c9aa0" stroke-width="1.70" stroke-opacity="0.90"/><line x1="712.1" y1="636.9" x2="741.2" y2="623.6" stroke="#5c9aa0" stroke-width="1.60" stroke-opacity="0.90"/><line x1="741.2" y1="623.6" x2="768.5" y2="611.0" stroke="#5c9aa0" stroke-width="1.50" stroke-opacity="0.90"/><line x1="768.5" y1="611.0" x2="794.0" y2="599.3" stroke="#5c9aa0" stroke-width="1.41" stroke-opacity="0.90"/><line x1="794.0" y1="599.3" x2="817.8" y2="588.4" stroke="#5c9aa0" stroke-width="1.32" stroke-opacity="0.90"/><line x1="817.8" y1="588.4" x2="839.8" y2="578.3" stroke="#5c9aa0" stroke-width="1.24" stroke-opacity="0.90"/><line x1="839.8" y1="578.3" x2="860.2" y2="568.9" stroke="#5c9aa0" stroke-width="1.16" stroke-opacity="0.90"/><line x1="860.2" y1="568.9" x2="879.0" y2="560.3" stroke="#5c9aa0" stroke-width="1.10" stroke-opacity="0.90"/><line x1="879.0" y1="560.3" x2="896.4" y2="552.3" stroke="#5c9aa0" stroke-width="1.03" stroke-opacity="0.90"/><line x1="896.4" y1="552.3" x2="912.4" y2="544.9" stroke="#5c9aa0" stroke-width="0.97" stroke-opacity="0.90"/><line x1="912.4" y1="544.9" x2="927.3" y2="538.1" stroke="#5c9aa0" stroke-width="0.92" stroke-opacity="0.90"/><line x1="927.3" y1="538.1" x2="941.0" y2="531.8" stroke="#5c9aa0" stroke-width="0.87" stroke-opacity="0.90"/><line x1="941.0" y1="531.8" x2="953.7" y2="526.0" stroke="#5c9aa0" stroke-width="0.82" stroke-opacity="0.90"/><line x1="953.7" y1="526.0" x2="965.4" y2="520.6" stroke="#5c9aa0" stroke-width="0.78" stroke-opacity="0.90"/><line x1="965.4" y1="520.6" x2="976.3" y2="515.6" stroke="#5c9aa0" stroke-width="0.74" stroke-opacity="0.90"/>
<line x1="500.4" y1="738.4" x2="503.6" y2="736.9" stroke="#8fa000" stroke-width="4.10" stroke-opacity="0.95"/><line x1="503.6" y1="736.9" x2="510.1" y2="733.8" stroke="#8fa000" stroke-width="4.07" stroke-opacity="0.95"/><line x1="510.1" y1="733.8" x2="518.7" y2="729.8" stroke="#8fa000" stroke-width="4.02" stroke-opacity="0.95"/><line x1="518.7" y1="729.8" x2="529.0" y2="725.0" stroke="#8fa000" stroke-width="3.96" stroke-opacity="0.95"/><line x1="529.0" y1="725.0" x2="540.5" y2="719.7" stroke="#8fa000" stroke-width="3.90" stroke-opacity="0.95"/><line x1="540.5" y1="719.7" x2="553.1" y2="713.8" stroke="#8fa000" stroke-width="3.82" stroke-opacity="0.95"/><line x1="553.1" y1="713.8" x2="566.4" y2="707.6" stroke="#8fa000" stroke-width="3.75" stroke-opacity="0.95"/><line x1="566.4" y1="707.6" x2="580.3" y2="701.2" stroke="#8fa000" stroke-width="3.66" stroke-opacity="0.95"/><line x1="580.3" y1="701.2" x2="594.6" y2="694.5" stroke="#8fa000" stroke-width="3.58" stroke-opacity="0.95"/><line x1="594.6" y1="694.5" x2="609.1" y2="687.8" stroke="#8fa000" stroke-width="3.49" stroke-opacity="0.95"/><line x1="609.1" y1="687.8" x2="623.8" y2="680.9" stroke="#8fa000" stroke-width="3.41" stroke-opacity="0.95"/><line x1="623.8" y1="680.9" x2="638.5" y2="674.1" stroke="#8fa000" stroke-width="3.32" stroke-opacity="0.95"/><line x1="638.5" y1="674.1" x2="653.1" y2="667.3" stroke="#8fa000" stroke-width="3.23" stroke-opacity="0.95"/><line x1="653.1" y1="667.3" x2="667.6" y2="660.5" stroke="#8fa000" stroke-width="3.14" stroke-opacity="0.95"/><line x1="667.6" y1="660.5" x2="681.9" y2="653.9" stroke="#8fa000" stroke-width="3.05" stroke-opacity="0.95"/><line x1="681.9" y1="653.9" x2="696.0" y2="647.3" stroke="#8fa000" stroke-width="2.97" stroke-opacity="0.95"/><line x1="696.0" y1="647.3" x2="709.8" y2="640.9" stroke="#8fa000" stroke-width="2.88" stroke-opacity="0.95"/><line x1="709.8" y1="640.9" x2="723.3" y2="634.6" stroke="#8fa000" stroke-width="2.80" stroke-opacity="0.95"/><line x1="723.3" y1="634.6" x2="736.5" y2="628.5" stroke="#8fa000" stroke-width="2.72" stroke-opacity="0.95"/><line x1="736.5" y1="628.5" x2="749.3" y2="622.5" stroke="#8fa000" stroke-width="2.64" stroke-opacity="0.95"/><line x1="749.3" y1="622.5" x2="761.7" y2="616.7" stroke="#8fa000" stroke-width="2.57" stroke-opacity="0.95"/><line x1="761.7" y1="616.7" x2="773.8" y2="611.1" stroke="#8fa000" stroke-width="2.49" stroke-opacity="0.95"/>
<line x1="507.5" y1="739.4" x2="514.6" y2="736.1" stroke="#d4149a" stroke-width="2.05" stroke-opacity="0.85"/><line x1="514.6" y1="736.1" x2="528.5" y2="729.5" stroke="#d4149a" stroke-width="2.02" stroke-opacity="0.85"/><line x1="528.5" y1="729.5" x2="546.6" y2="720.9" stroke="#d4149a" stroke-width="1.97" stroke-opacity="0.85"/><line x1="546.6" y1="720.9" x2="567.5" y2="711.1" stroke="#d4149a" stroke-width="1.91" stroke-opacity="0.85"/><line x1="567.5" y1="711.1" x2="590.1" y2="700.4" stroke="#d4149a" stroke-width="1.84" stroke-opacity="0.85"/><line x1="590.1" y1="700.4" x2="613.7" y2="689.3" stroke="#d4149a" stroke-width="1.77" stroke-opacity="0.85"/><line x1="613.7" y1="689.3" x2="637.6" y2="678.0" stroke="#d4149a" stroke-width="1.70" stroke-opacity="0.85"/><line x1="637.6" y1="678.0" x2="661.6" y2="666.7" stroke="#d4149a" stroke-width="1.62" stroke-opacity="0.85"/><line x1="661.6" y1="666.7" x2="685.1" y2="655.6" stroke="#d4149a" stroke-width="1.55" stroke-opacity="0.85"/><line x1="685.1" y1="655.6" x2="708.0" y2="644.8" stroke="#d4149a" stroke-width="1.48" stroke-opacity="0.85"/><line x1="708.0" y1="644.8" x2="730.1" y2="634.4" stroke="#d4149a" stroke-width="1.41" stroke-opacity="0.85"/><line x1="730.1" y1="634.4" x2="751.4" y2="624.4" stroke="#d4149a" stroke-width="1.35" stroke-opacity="0.85"/><line x1="751.4" y1="624.4" x2="771.6" y2="614.8" stroke="#d4149a" stroke-width="1.28" stroke-opacity="0.85"/><line x1="771.6" y1="614.8" x2="790.9" y2="605.7" stroke="#d4149a" stroke-width="1.22" stroke-opacity="0.85"/><line x1="790.9" y1="605.7" x2="809.2" y2="597.1" stroke="#d4149a" stroke-width="1.17" stroke-opacity="0.85"/><line x1="809.2" y1="597.1" x2="826.5" y2="588.9" stroke="#d4149a" stroke-width="1.11" stroke-opacity="0.85"/><line x1="826.5" y1="588.9" x2="842.8" y2="581.2" stroke="#d4149a" stroke-width="1.06" stroke-opacity="0.85"/><line x1="842.8" y1="581.2" x2="858.2" y2="573.9" stroke="#d4149a" stroke-width="1.01" stroke-opacity="0.85"/><line x1="858.2" y1="573.9" x2="872.7" y2="567.1" stroke="#d4149a" stroke-width="0.97" stroke-opacity="0.85"/><line x1="872.7" y1="567.1" x2="886.4" y2="560.6" stroke="#d4149a" stroke-width="0.92" stroke-opacity="0.85"/><line x1="886.4" y1="560.6" x2="899.3" y2="554.6" stroke="#d4149a" stroke-width="0.88" stroke-opacity="0.85"/><line x1="899.3" y1="554.6" x2="911.5" y2="548.8" stroke="#d4149a" stroke-width="0.84" stroke-opacity="0.85"/>
<line x1="514.6" y1="740.5" x2="517.8" y2="738.9" stroke="#8fa000" stroke-width="4.12" stroke-opacity="0.95"/><line x1="517.8" y1="738.9" x2="524.2" y2="735.9" stroke="#8fa000" stroke-width="4.09" stroke-opacity="0.95"/><line x1="524.2" y1="735.9" x2="532.7" y2="731.8" stroke="#8fa000" stroke-width="4.05" stroke-opacity="0.95"/><line x1="532.7" y1="731.8" x2="542.8" y2="727.0" stroke="#8fa000" stroke-width="3.99" stroke-opacity="0.95"/><line x1="542.8" y1="727.0" x2="554.2" y2="721.5" stroke="#8fa000" stroke-width="3.92" stroke-opacity="0.95"/><line x1="554.2" y1="721.5" x2="566.5" y2="715.6" stroke="#8fa000" stroke-width="3.85" stroke-opacity="0.95"/><line x1="566.5" y1="715.6" x2="579.6" y2="709.4" stroke="#8fa000" stroke-width="3.77" stroke-opacity="0.95"/><line x1="579.6" y1="709.4" x2="593.3" y2="702.8" stroke="#8fa000" stroke-width="3.69" stroke-opacity="0.95"/><line x1="593.3" y1="702.8" x2="607.4" y2="696.1" stroke="#8fa000" stroke-width="3.60" stroke-opacity="0.95"/><line x1="607.4" y1="696.1" x2="621.7" y2="689.3" stroke="#8fa000" stroke-width="3.51" stroke-opacity="0.95"/><line x1="621.7" y1="689.3" x2="636.1" y2="682.4" stroke="#8fa000" stroke-width="3.42" stroke-opacity="0.95"/><line x1="636.1" y1="682.4" x2="650.5" y2="675.5" stroke="#8fa000" stroke-width="3.33" stroke-opacity="0.95"/><line x1="650.5" y1="675.5" x2="664.9" y2="668.6" stroke="#8fa000" stroke-width="3.25" stroke-opacity="0.95"/><line x1="664.9" y1="668.6" x2="679.2" y2="661.7" stroke="#8fa000" stroke-width="3.16" stroke-opacity="0.95"/><line x1="679.2" y1="661.7" x2="693.2" y2="655.0" stroke="#8fa000" stroke-width="3.07" stroke-opacity="0.95"/><line x1="693.2" y1="655.0" x2="707.1" y2="648.4" stroke="#8fa000" stroke-width="2.98" stroke-opacity="0.95"/><line x1="707.1" y1="648.4" x2="720.6" y2="641.9" stroke="#8fa000" stroke-width="2.90" stroke-opacity="0.95"/><line x1="720.6" y1="641.9" x2="733.9" y2="635.6" stroke="#8fa000" stroke-width="2.81" stroke-opacity="0.95"/><line x1="733.9" y1="635.6" x2="746.8" y2="629.4" stroke="#8fa000" stroke-width="2.73" stroke-opacity="0.95"/><line x1="746.8" y1="629.4" x2="759.3" y2="623.4" stroke="#8fa000" stroke-width="2.65" stroke-opacity="0.95"/><line x1="759.3" y1="623.4" x2="771.6" y2="617.6" stroke="#8fa000" stroke-width="2.58" stroke-opacity="0.95"/><line x1="771.6" y1="617.6" x2="783.4" y2="611.9" stroke="#8fa000" stroke-width="2.50" stroke-opacity="0.95"/>
<line x1="521.8" y1="741.5" x2="528.8" y2="738.2" stroke="#6a20a0" stroke-width="2.06" stroke-opacity="0.85"/><line x1="528.8" y1="738.2" x2="542.5" y2="731.5" stroke="#6a20a0" stroke-width="2.03" stroke-opacity="0.85"/><line x1="542.5" y1="731.5" x2="560.4" y2="722.8" stroke="#6a20a0" stroke-width="1.98" stroke-opacity="0.85"/><line x1="560.4" y1="722.8" x2="580.9" y2="712.9" stroke="#6a20a0" stroke-width="1.92" stroke-opacity="0.85"/><line x1="580.9" y1="712.9" x2="603.1" y2="702.1" stroke="#6a20a0" stroke-width="1.85" stroke-opacity="0.85"/><line x1="603.1" y1="702.1" x2="626.3" y2="690.8" stroke="#6a20a0" stroke-width="1.78" stroke-opacity="0.85"/><line x1="626.3" y1="690.8" x2="649.9" y2="679.4" stroke="#6a20a0" stroke-width="1.71" stroke-opacity="0.85"/><line x1="649.9" y1="679.4" x2="673.4" y2="668.0" stroke="#6a20a0" stroke-width="1.63" stroke-opacity="0.85"/><line x1="673.4" y1="668.0" x2="696.5" y2="656.8" stroke="#6a20a0" stroke-width="1.56" stroke-opacity="0.85"/><line x1="696.5" y1="656.8" x2="719.0" y2="645.9" stroke="#6a20a0" stroke-width="1.49" stroke-opacity="0.85"/><line x1="719.0" y1="645.9" x2="740.7" y2="635.3" stroke="#6a20a0" stroke-width="1.42" stroke-opacity="0.85"/><line x1="740.7" y1="635.3" x2="761.5" y2="625.2" stroke="#6a20a0" stroke-width="1.35" stroke-opacity="0.85"/><line x1="761.5" y1="625.2" x2="781.4" y2="615.6" stroke="#6a20a0" stroke-width="1.29" stroke-opacity="0.85"/><line x1="781.4" y1="615.6" x2="800.3" y2="606.4" stroke="#6a20a0" stroke-width="1.23" stroke-opacity="0.85"/><line x1="800.3" y1="606.4" x2="818.2" y2="597.7" stroke="#6a20a0" stroke-width="1.17" stroke-opacity="0.85"/><line x1="818.2" y1="597.7" x2="835.1" y2="589.5" stroke="#6a20a0" stroke-width="1.11" stroke-opacity="0.85"/><line x1="835.1" y1="589.5" x2="851.1" y2="581.7" stroke="#6a20a0" stroke-width="1.06" stroke-opacity="0.85"/><line x1="851.1" y1="581.7" x2="866.2" y2="574.4" stroke="#6a20a0" stroke-width="1.01" stroke-opacity="0.85"/><line x1="866.2" y1="574.4" x2="880.4" y2="567.5" stroke="#6a20a0" stroke-width="0.97" stroke-opacity="0.85"/><line x1="880.4" y1="567.5" x2="893.8" y2="561.0" stroke="#6a20a0" stroke-width="0.93" stroke-opacity="0.85"/><line x1="893.8" y1="561.0" x2="906.4" y2="554.9" stroke="#6a20a0" stroke-width="0.88" stroke-opacity="0.85"/><line x1="906.4" y1="554.9" x2="918.3" y2="549.2" stroke="#6a20a0" stroke-width="0.85" stroke-opacity="0.85"/>
<line x1="529.0" y1="742.6" x2="532.2" y2="741.1" stroke="#8fa000" stroke-width="4.15" stroke-opacity="0.95"/><line x1="532.2" y1="741.1" x2="538.5" y2="738.0" stroke="#8fa000" stroke-width="4.12" stroke-opacity="0.95"/><line x1="538.5" y1="738.0" x2="546.8" y2="733.9" stroke="#8fa000" stroke-width="4.07" stroke-opacity="0.95"/><line x1="546.8" y1="733.9" x2="556.8" y2="729.0" stroke="#8fa000" stroke-width="4.01" stroke-opacity="0.95"/><line x1="556.8" y1="729.0" x2="568.0" y2="723.4" stroke="#8fa000" stroke-width="3.95" stroke-opacity="0.95"/><line x1="568.0" y1="723.4" x2="580.1" y2="717.5" stroke="#8fa000" stroke-width="3.87" stroke-opacity="0.95"/><line x1="580.1" y1="717.5" x2="593.0" y2="711.1" stroke="#8fa000" stroke-width="3.79" stroke-opacity="0.95"/><line x1="593.0" y1="711.1" x2="606.5" y2="704.5" stroke="#8fa000" stroke-width="3.71" stroke-opacity="0.95"/><line x1="606.5" y1="704.5" x2="620.3" y2="697.7" stroke="#8fa000" stroke-width="3.62" stroke-opacity="0.95"/><line x1="620.3" y1="697.7" x2="634.4" y2="690.8" stroke="#8fa000" stroke-width="3.53" stroke-opacity="0.95"/><line x1="634.4" y1="690.8" x2="648.5" y2="683.8" stroke="#8fa000" stroke-width="3.44" stroke-opacity="0.95"/><line x1="648.5" y1="683.8" x2="662.7" y2="676.8" stroke="#8fa000" stroke-width="3.35" stroke-opacity="0.95"/><line x1="662.7" y1="676.8" x2="676.9" y2="669.9" stroke="#8fa000" stroke-width="3.26" stroke-opacity="0.95"/><line x1="676.9" y1="669.9" x2="690.8" y2="663.0" stroke="#8fa000" stroke-width="3.17" stroke-opacity="0.95"/><line x1="690.8" y1="663.0" x2="704.7" y2="656.2" stroke="#8fa000" stroke-width="3.08" stroke-opacity="0.95"/><line x1="704.7" y1="656.2" x2="718.2" y2="649.5" stroke="#8fa000" stroke-width="3.00" stroke-opacity="0.95"/><line x1="718.2" y1="649.5" x2="731.5" y2="642.9" stroke="#8fa000" stroke-width="2.91" stroke-opacity="0.95"/><line x1="731.5" y1="642.9" x2="744.5" y2="636.6" stroke="#8fa000" stroke-width="2.83" stroke-opacity="0.95"/><line x1="744.5" y1="636.6" x2="757.2" y2="630.3" stroke="#8fa000" stroke-width="2.75" stroke-opacity="0.95"/><line x1="757.2" y1="630.3" x2="769.5" y2="624.3" stroke="#8fa000" stroke-width="2.67" stroke-opacity="0.95"/><line x1="769.5" y1="624.3" x2="781.5" y2="618.4" stroke="#8fa000" stroke-width="2.59" stroke-opacity="0.95"/><line x1="781.5" y1="618.4" x2="793.1" y2="612.6" stroke="#8fa000" stroke-width="2.51" stroke-opacity="0.95"/>
<line x1="536.3" y1="743.7" x2="543.2" y2="740.3" stroke="#d4149a" stroke-width="2.08" stroke-opacity="0.85"/><line x1="543.2" y1="740.3" x2="556.7" y2="733.5" stroke="#d4149a" stroke-width="2.04" stroke-opacity="0.85"/><line x1="556.7" y1="733.5" x2="574.3" y2="724.7" stroke="#d4149a" stroke-width="1.99" stroke-opacity="0.85"/><line x1="574.3" y1="724.7" x2="594.5" y2="714.7" stroke="#d4149a" stroke-width="1.93" stroke-opacity="0.85"/><line x1="594.5" y1="714.7" x2="616.3" y2="703.7" stroke="#d4149a" stroke-width="1.86" stroke-opacity="0.85"/><line x1="616.3" y1="703.7" x2="639.1" y2="692.4" stroke="#d4149a" stroke-width="1.79" stroke-opacity="0.85"/><line x1="639.1" y1="692.4" x2="662.3" y2="680.8" stroke="#d4149a" stroke-width="1.72" stroke-opacity="0.85"/><line x1="662.3" y1="680.8" x2="685.3" y2="669.3" stroke="#d4149a" stroke-width="1.64" stroke-opacity="0.85"/><line x1="685.3" y1="669.3" x2="708.0" y2="657.9" stroke="#d4149a" stroke-width="1.57" stroke-opacity="0.85"/><line x1="708.0" y1="657.9" x2="730.1" y2="646.9" stroke="#d4149a" stroke-width="1.50" stroke-opacity="0.85"/><line x1="730.1" y1="646.9" x2="751.4" y2="636.3" stroke="#d4149a" stroke-width="1.43" stroke-opacity="0.85"/><line x1="751.4" y1="636.3" x2="771.8" y2="626.1" stroke="#d4149a" stroke-width="1.36" stroke-opacity="0.85"/><line x1="771.8" y1="626.1" x2="791.2" y2="616.4" stroke="#d4149a" stroke-width="1.29" stroke-opacity="0.85"/><line x1="791.2" y1="616.4" x2="809.7" y2="607.1" stroke="#d4149a" stroke-width="1.23" stroke-opacity="0.85"/><line x1="809.7" y1="607.1" x2="827.3" y2="598.4" stroke="#d4149a" stroke-width="1.17" stroke-opacity="0.85"/><line x1="827.3" y1="598.4" x2="843.8" y2="590.1" stroke="#d4149a" stroke-width="1.12" stroke-opacity="0.85"/><line x1="843.8" y1="590.1" x2="859.5" y2="582.3" stroke="#d4149a" stroke-width="1.07" stroke-opacity="0.85"/><line x1="859.5" y1="582.3" x2="874.2" y2="574.9" stroke="#d4149a" stroke-width="1.02" stroke-opacity="0.85"/><line x1="874.2" y1="574.9" x2="888.1" y2="568.0" stroke="#d4149a" stroke-width="0.97" stroke-opacity="0.85"/><line x1="888.1" y1="568.0" x2="901.2" y2="561.5" stroke="#d4149a" stroke-width="0.93" stroke-opacity="0.85"/><line x1="901.2" y1="561.5" x2="913.5" y2="555.3" stroke="#d4149a" stroke-width="0.89" stroke-opacity="0.85"/><line x1="913.5" y1="555.3" x2="925.1" y2="549.5" stroke="#d4149a" stroke-width="0.85" stroke-opacity="0.85"/>
<line x1="543.6" y1="744.8" x2="546.7" y2="743.2" stroke="#8fa000" stroke-width="4.18" stroke-opacity="0.95"/><line x1="546.7" y1="743.2" x2="552.9" y2="740.1" stroke="#8fa000" stroke-width="4.15" stroke-opacity="0.95"/><line x1="552.9" y1="740.1" x2="561.2" y2="735.9" stroke="#8fa000" stroke-width="4.10" stroke-opacity="0.95"/><line x1="561.2" y1="735.9" x2="571.0" y2="731.0" stroke="#8fa000" stroke-width="4.04" stroke-opacity="0.95"/><line x1="571.0" y1="731.0" x2="582.0" y2="725.4" stroke="#8fa000" stroke-width="3.97" stroke-opacity="0.95"/><line x1="582.0" y1="725.4" x2="593.9" y2="719.3" stroke="#8fa000" stroke-width="3.90" stroke-opacity="0.95"/><line x1="593.9" y1="719.3" x2="606.6" y2="712.9" stroke="#8fa000" stroke-width="3.82" stroke-opacity="0.95"/><line x1="606.6" y1="712.9" x2="619.8" y2="706.2" stroke="#8fa000" stroke-width="3.73" stroke-opacity="0.95"/><line x1="619.8" y1="706.2" x2="633.4" y2="699.3" stroke="#8fa000" stroke-width="3.64" stroke-opacity="0.95"/><line x1="633.4" y1="699.3" x2="647.2" y2="692.3" stroke="#8fa000" stroke-width="3.55" stroke-opacity="0.95"/><line x1="647.2" y1="692.3" x2="661.1" y2="685.2" stroke="#8fa000" stroke-width="3.46" stroke-opacity="0.95"/><line x1="661.1" y1="685.2" x2="675.0" y2="678.2" stroke="#8fa000" stroke-width="3.37" stroke-opacity="0.95"/><line x1="675.0" y1="678.2" x2="688.9" y2="671.2" stroke="#8fa000" stroke-width="3.28" stroke-opacity="0.95"/><line x1="688.9" y1="671.2" x2="702.6" y2="664.2" stroke="#8fa000" stroke-width="3.19" stroke-opacity="0.95"/><line x1="702.6" y1="664.2" x2="716.2" y2="657.3" stroke="#8fa000" stroke-width="3.10" stroke-opacity="0.95"/><line x1="716.2" y1="657.3" x2="729.5" y2="650.6" stroke="#8fa000" stroke-width="3.01" stroke-opacity="0.95"/><line x1="729.5" y1="650.6" x2="742.5" y2="644.0" stroke="#8fa000" stroke-width="2.93" stroke-opacity="0.95"/><line x1="742.5" y1="644.0" x2="755.2" y2="637.5" stroke="#8fa000" stroke-width="2.84" stroke-opacity="0.95"/><line x1="755.2" y1="637.5" x2="767.7" y2="631.2" stroke="#8fa000" stroke-width="2.76" stroke-opacity="0.95"/><line x1="767.7" y1="631.2" x2="779.7" y2="625.1" stroke="#8fa000" stroke-width="2.68" stroke-opacity="0.95"/><line x1="779.7" y1="625.1" x2="791.5" y2="619.2" stroke="#8fa000" stroke-width="2.60" stroke-opacity="0.95"/><line x1="791.5" y1="619.2" x2="802.8" y2="613.4" stroke="#8fa000" stroke-width="2.52" stroke-opacity="0.95"/>
<line x1="551.0" y1="745.9" x2="561.7" y2="740.4" stroke="#5c9aa0" stroke-width="2.46" stroke-opacity="0.90"/><line x1="561.7" y1="740.4" x2="582.3" y2="729.8" stroke="#5c9aa0" stroke-width="2.40" stroke-opacity="0.90"/><line x1="582.3" y1="729.8" x2="608.2" y2="716.5" stroke="#5c9aa0" stroke-width="2.31" stroke-opacity="0.90"/><line x1="608.2" y1="716.5" x2="637.0" y2="701.6" stroke="#5c9aa0" stroke-width="2.20" stroke-opacity="0.90"/><line x1="637.0" y1="701.6" x2="667.1" y2="686.1" stroke="#5c9aa0" stroke-width="2.08" stroke-opacity="0.90"/><line x1="667.1" y1="686.1" x2="697.3" y2="670.6" stroke="#5c9aa0" stroke-width="1.96" stroke-opacity="0.90"/><line x1="697.3" y1="670.6" x2="726.8" y2="655.4" stroke="#5c9aa0" stroke-width="1.85" stroke-opacity="0.90"/><line x1="726.8" y1="655.4" x2="755.2" y2="640.8" stroke="#5c9aa0" stroke-width="1.73" stroke-opacity="0.90"/><line x1="755.2" y1="640.8" x2="782.0" y2="627.0" stroke="#5c9aa0" stroke-width="1.63" stroke-opacity="0.90"/><line x1="782.0" y1="627.0" x2="807.2" y2="614.1" stroke="#5c9aa0" stroke-width="1.52" stroke-opacity="0.90"/><line x1="807.2" y1="614.1" x2="830.7" y2="602.0" stroke="#5c9aa0" stroke-width="1.43" stroke-opacity="0.90"/><line x1="830.7" y1="602.0" x2="852.5" y2="590.8" stroke="#5c9aa0" stroke-width="1.34" stroke-opacity="0.90"/><line x1="852.5" y1="590.8" x2="872.7" y2="580.4" stroke="#5c9aa0" stroke-width="1.26" stroke-opacity="0.90"/><line x1="872.7" y1="580.4" x2="891.3" y2="570.8" stroke="#5c9aa0" stroke-width="1.18" stroke-opacity="0.90"/><line x1="891.3" y1="570.8" x2="908.5" y2="561.9" stroke="#5c9aa0" stroke-width="1.11" stroke-opacity="0.90"/><line x1="908.5" y1="561.9" x2="924.4" y2="553.8" stroke="#5c9aa0" stroke-width="1.04" stroke-opacity="0.90"/><line x1="924.4" y1="553.8" x2="939.0" y2="546.2" stroke="#5c9aa0" stroke-width="0.98" stroke-opacity="0.90"/><line x1="939.0" y1="546.2" x2="952.5" y2="539.3" stroke="#5c9aa0" stroke-width="0.93" stroke-opacity="0.90"/><line x1="952.5" y1="539.3" x2="965.0" y2="532.9" stroke="#5c9aa0" stroke-width="0.88" stroke-opacity="0.90"/><line x1="965.0" y1="532.9" x2="976.5" y2="526.9" stroke="#5c9aa0" stroke-width="0.83" stroke-opacity="0.90"/><line x1="976.5" y1="526.9" x2="987.2" y2="521.5" stroke="#5c9aa0" stroke-width="0.79" stroke-opacity="0.90"/><line x1="987.2" y1="521.5" x2="997.0" y2="516.4" stroke="#5c9aa0" stroke-width="0.75" stroke-opacity="0.90"/>
<line x1="558.6" y1="614.1" x2="561.5" y2="712.0" stroke="#6e3038" stroke-width="2.47" stroke-opacity="0.90"/>
<line x1="561.5" y1="712.0" x2="562.7" y2="750.1" stroke="#6a5a5e" stroke-width="2.96"/>
<line x1="574.1" y1="609.3" x2="576.8" y2="704.8" stroke="#6e3038" stroke-width="2.40" stroke-opacity="0.90"/>
<line x1="576.8" y1="704.8" x2="577.9" y2="742.1" stroke="#6a5a5e" stroke-width="2.88"/>
<line x1="589.0" y1="604.7" x2="591.4" y2="698.0" stroke="#6e3038" stroke-width="2.34" stroke-opacity="0.90"/>
<line x1="591.4" y1="698.0" x2="592.3" y2="734.4" stroke="#6a5a5e" stroke-width="2.81"/>
<line x1="603.1" y1="600.4" x2="605.2" y2="691.5" stroke="#6e3038" stroke-width="2.29" stroke-opacity="0.90"/>
<line x1="605.2" y1="691.5" x2="606.1" y2="727.1" stroke="#6a5a5e" stroke-width="2.74"/>
<line x1="616.6" y1="596.2" x2="618.5" y2="685.3" stroke="#6e3038" stroke-width="2.23" stroke-opacity="0.90"/>
<line x1="618.5" y1="685.3" x2="619.2" y2="720.1" stroke="#6a5a5e" stroke-width="2.68"/>
<line x1="629.4" y1="592.2" x2="631.1" y2="679.4" stroke="#6e3038" stroke-width="2.18" stroke-opacity="0.90"/>
<line x1="631.1" y1="679.4" x2="631.7" y2="713.4" stroke="#6a5a5e" stroke-width="2.62"/>
<line x1="641.7" y1="588.4" x2="643.2" y2="673.7" stroke="#6e3038" stroke-width="2.13" stroke-opacity="0.90"/>
<line x1="643.2" y1="673.7" x2="643.8" y2="707.1" stroke="#6a5a5e" stroke-width="2.56"/>
<line x1="653.4" y1="584.8" x2="654.7" y2="668.3" stroke="#6e3038" stroke-width="2.08" stroke-opacity="0.90"/>
<line x1="654.7" y1="668.3" x2="655.2" y2="701.0" stroke="#6a5a5e" stroke-width="2.50"/>
<line x1="664.7" y1="581.3" x2="665.8" y2="663.1" stroke="#6e3038" stroke-width="2.04" stroke-opacity="0.90"/>
<line x1="665.8" y1="663.1" x2="666.2" y2="695.1" stroke="#6a5a5e" stroke-width="2.45"/>
<line x1="675.5" y1="578.0" x2="676.4" y2="658.1" stroke="#6e3038" stroke-width="2.00" stroke-opacity="0.90"/>
<line x1="676.4" y1="658.1" x2="676.8" y2="689.5" stroke="#6a5a5e" stroke-width="2.39"/>
<line x1="685.8" y1="574.8" x2="686.6" y2="653.4" stroke="#6e3038" stroke-width="1.95" stroke-opacity="0.90"/>
<line x1="686.6" y1="653.4" x2="686.9" y2="684.1" stroke="#6a5a5e" stroke-width="2.34"/>
<line x1="695.7" y1="571.7" x2="696.4" y2="648.8" stroke="#6e3038" stroke-width="1.91" stroke-opacity="0.90"/>
<line x1="696.4" y1="648.8" x2="696.7" y2="679.0" stroke="#6a5a5e" stroke-width="2.30"/>
<line x1="705.3" y1="568.7" x2="705.8" y2="644.4" stroke="#6e3038" stroke-width="1.88" stroke-opacity="0.90"/>
<line x1="705.8" y1="644.4" x2="706.0" y2="674.0" stroke="#6a5a5e" stroke-width="2.25"/>
<line x1="714.4" y1="565.9" x2="714.9" y2="640.1" stroke="#6e3038" stroke-width="1.84" stroke-opacity="0.90"/>
<line x1="714.9" y1="640.1" x2="715.0" y2="669.2" stroke="#6a5a5e" stroke-width="2.21"/>
<line x1="723.3" y1="563.2" x2="723.6" y2="636.0" stroke="#6e3038" stroke-width="1.80" stroke-opacity="0.90"/>
<line x1="723.6" y1="636.0" x2="723.7" y2="664.6" stroke="#6a5a5e" stroke-width="2.16"/>
<line x1="731.8" y1="560.6" x2="732.0" y2="632.1" stroke="#6e3038" stroke-width="1.77" stroke-opacity="0.90"/>
<line x1="732.0" y1="632.1" x2="732.1" y2="660.2" stroke="#6a5a5e" stroke-width="2.12"/>
<line x1="739.9" y1="558.0" x2="740.1" y2="628.3" stroke="#6e3038" stroke-width="1.74" stroke-opacity="0.90"/>
<line x1="740.1" y1="628.3" x2="740.1" y2="655.9" stroke="#6a5a5e" stroke-width="2.08"/>
<line x1="747.8" y1="555.6" x2="747.9" y2="624.7" stroke="#6e3038" stroke-width="1.71" stroke-opacity="0.90"/>
<line x1="747.9" y1="624.7" x2="747.9" y2="651.8" stroke="#6a5a5e" stroke-width="2.05"/>
<line x1="755.5" y1="553.2" x2="755.4" y2="621.1" stroke="#6e3038" stroke-width="1.68" stroke-opacity="0.90"/>
<line x1="755.4" y1="621.1" x2="755.4" y2="647.8" stroke="#6a5a5e" stroke-width="2.01"/>
<line x1="762.8" y1="550.9" x2="762.7" y2="617.7" stroke="#6e3038" stroke-width="1.65" stroke-opacity="0.90"/>
<line x1="762.7" y1="617.7" x2="762.6" y2="643.9" stroke="#6a5a5e" stroke-width="1.98"/>
<line x1="769.9" y1="548.7" x2="769.7" y2="614.4" stroke="#6e3038" stroke-width="1.62" stroke-opacity="0.90"/>
<line x1="769.7" y1="614.4" x2="769.6" y2="640.2" stroke="#6a5a5e" stroke-width="1.94"/>
<line x1="776.8" y1="546.6" x2="776.5" y2="611.2" stroke="#6e3038" stroke-width="1.59" stroke-opacity="0.90"/>
<line x1="776.5" y1="611.2" x2="776.4" y2="636.6" stroke="#6a5a5e" stroke-width="1.91"/>
<line x1="783.4" y1="544.6" x2="783.1" y2="608.2" stroke="#6e3038" stroke-width="1.56" stroke-opacity="0.90"/>
<line x1="783.1" y1="608.2" x2="783.0" y2="633.1" stroke="#6a5a5e" stroke-width="1.88"/>
<line x1="789.8" y1="542.6" x2="789.5" y2="605.2" stroke="#6e3038" stroke-width="1.54" stroke-opacity="0.90"/>
<line x1="789.5" y1="605.2" x2="789.3" y2="629.7" stroke="#6a5a5e" stroke-width="1.85"/>
<line x1="796.1" y1="540.7" x2="795.6" y2="602.3" stroke="#6e3038" stroke-width="1.51" stroke-opacity="0.90"/>
<line x1="795.6" y1="602.3" x2="795.5" y2="626.5" stroke="#6a5a5e" stroke-width="1.82"/>
<line x1="802.1" y1="538.8" x2="801.6" y2="599.5" stroke="#6e3038" stroke-width="1.49" stroke-opacity="0.90"/>
<line x1="801.6" y1="599.5" x2="801.4" y2="623.3" stroke="#6a5a5e" stroke-width="1.79"/>
<line x1="807.9" y1="537.0" x2="807.4" y2="596.8" stroke="#6e3038" stroke-width="1.47" stroke-opacity="0.90"/>
<line x1="807.4" y1="596.8" x2="807.2" y2="620.2" stroke="#6a5a5e" stroke-width="1.76"/>
<line x1="813.6" y1="535.2" x2="813.0" y2="594.1" stroke="#6e3038" stroke-width="1.44" stroke-opacity="0.90"/>
<line x1="813.0" y1="594.1" x2="812.8" y2="617.3" stroke="#6a5a5e" stroke-width="1.73"/>
<line x1="819.1" y1="533.5" x2="818.5" y2="591.6" stroke="#6e3038" stroke-width="1.42" stroke-opacity="0.90"/>
<line x1="818.5" y1="591.6" x2="818.3" y2="614.4" stroke="#6a5a5e" stroke-width="1.71"/>
<line x1="824.4" y1="531.9" x2="823.8" y2="589.1" stroke="#6e3038" stroke-width="1.40" stroke-opacity="0.90"/>
<line x1="823.8" y1="589.1" x2="823.5" y2="611.6" stroke="#6a5a5e" stroke-width="1.68"/>
<line x1="829.6" y1="530.3" x2="828.9" y2="586.7" stroke="#6e3038" stroke-width="1.38" stroke-opacity="0.90"/>
<line x1="828.9" y1="586.7" x2="828.7" y2="608.9" stroke="#6a5a5e" stroke-width="1.66"/>
<line x1="834.7" y1="528.7" x2="833.9" y2="584.3" stroke="#6e3038" stroke-width="1.36" stroke-opacity="0.90"/>
<line x1="833.9" y1="584.3" x2="833.6" y2="606.2" stroke="#6a5a5e" stroke-width="1.63"/>
<line x1="839.5" y1="527.2" x2="838.8" y2="582.1" stroke="#6e3038" stroke-width="1.34" stroke-opacity="0.90"/>
<line x1="838.8" y1="582.1" x2="838.5" y2="603.6" stroke="#6a5a5e" stroke-width="1.61"/>
<line x1="844.3" y1="525.7" x2="843.5" y2="579.8" stroke="#6e3038" stroke-width="1.32" stroke-opacity="0.90"/>
<line x1="843.5" y1="579.8" x2="843.2" y2="601.1" stroke="#6a5a5e" stroke-width="1.59"/>
<line x1="848.9" y1="524.3" x2="848.1" y2="577.7" stroke="#6e3038" stroke-width="1.30" stroke-opacity="0.90"/>
<line x1="848.1" y1="577.7" x2="847.8" y2="598.7" stroke="#6a5a5e" stroke-width="1.56"/>
<line x1="853.4" y1="522.9" x2="852.6" y2="575.6" stroke="#6e3038" stroke-width="1.29" stroke-opacity="0.90"/>
<line x1="852.6" y1="575.6" x2="852.3" y2="596.3" stroke="#6a5a5e" stroke-width="1.54"/>
<line x1="857.8" y1="521.6" x2="856.9" y2="573.5" stroke="#6e3038" stroke-width="1.27" stroke-opacity="0.90"/>
<line x1="856.9" y1="573.5" x2="856.6" y2="594.0" stroke="#6a5a5e" stroke-width="1.52"/>
<line x1="862.1" y1="520.2" x2="861.2" y2="571.6" stroke="#6e3038" stroke-width="1.25" stroke-opacity="0.90"/>
<line x1="861.2" y1="571.6" x2="860.8" y2="591.8" stroke="#6a5a5e" stroke-width="1.50"/>
<line x1="866.2" y1="518.9" x2="865.3" y2="569.6" stroke="#6e3038" stroke-width="1.23" stroke-opacity="0.90"/>
<line x1="865.3" y1="569.6" x2="865.0" y2="589.6" stroke="#6a5a5e" stroke-width="1.48"/>
<line x1="870.3" y1="517.7" x2="869.3" y2="567.7" stroke="#6e3038" stroke-width="1.22" stroke-opacity="0.90"/>
<line x1="869.3" y1="567.7" x2="869.0" y2="587.4" stroke="#6a5a5e" stroke-width="1.46"/>
<line x1="874.2" y1="516.5" x2="873.3" y2="565.9" stroke="#6e3038" stroke-width="1.20" stroke-opacity="0.90"/>
<line x1="873.3" y1="565.9" x2="872.9" y2="585.4" stroke="#6a5a5e" stroke-width="1.44"/>
<line x1="878.1" y1="515.3" x2="877.1" y2="564.1" stroke="#6e3038" stroke-width="1.19" stroke-opacity="0.90"/>
<line x1="877.1" y1="564.1" x2="876.7" y2="583.3" stroke="#6a5a5e" stroke-width="1.43"/>
<line x1="881.8" y1="514.1" x2="880.8" y2="562.4" stroke="#6e3038" stroke-width="1.17" stroke-opacity="0.90"/>
<line x1="880.8" y1="562.4" x2="880.4" y2="581.3" stroke="#6a5a5e" stroke-width="1.41"/>
<line x1="885.5" y1="513.0" x2="884.5" y2="560.6" stroke="#6e3038" stroke-width="1.16" stroke-opacity="0.90"/>
<line x1="884.5" y1="560.6" x2="884.1" y2="579.4" stroke="#6a5a5e" stroke-width="1.39"/>
<line x1="889.0" y1="511.9" x2="888.0" y2="559.0" stroke="#6e3038" stroke-width="1.14" stroke-opacity="0.90"/>
<line x1="888.0" y1="559.0" x2="887.6" y2="577.5" stroke="#6a5a5e" stroke-width="1.37"/>
<line x1="892.5" y1="510.8" x2="891.5" y2="557.3" stroke="#6e3038" stroke-width="1.13" stroke-opacity="0.90"/>
<line x1="891.5" y1="557.3" x2="891.1" y2="575.7" stroke="#6a5a5e" stroke-width="1.36"/>
<line x1="895.9" y1="509.8" x2="894.9" y2="555.8" stroke="#6e3038" stroke-width="1.12" stroke-opacity="0.90"/>
<line x1="894.9" y1="555.8" x2="894.5" y2="573.9" stroke="#6a5a5e" stroke-width="1.34"/>
<line x1="899.3" y1="508.7" x2="898.2" y2="554.2" stroke="#6e3038" stroke-width="1.10" stroke-opacity="0.90"/>
<line x1="898.2" y1="554.2" x2="897.8" y2="572.1" stroke="#6a5a5e" stroke-width="1.33"/>
<line x1="902.5" y1="507.7" x2="901.4" y2="552.7" stroke="#6e3038" stroke-width="1.09" stroke-opacity="0.90"/>
<line x1="901.4" y1="552.7" x2="901.0" y2="570.4" stroke="#6a5a5e" stroke-width="1.31"/>
<line x1="905.7" y1="506.7" x2="904.6" y2="551.2" stroke="#6e3038" stroke-width="1.08" stroke-opacity="0.90"/>
<line x1="904.6" y1="551.2" x2="904.2" y2="568.7" stroke="#6a5a5e" stroke-width="1.29"/>
<line x1="908.8" y1="505.8" x2="907.7" y2="549.8" stroke="#6e3038" stroke-width="1.07" stroke-opacity="0.90"/>
<line x1="907.7" y1="549.8" x2="907.3" y2="567.1" stroke="#6a5a5e" stroke-width="1.28"/>
<line x1="911.8" y1="504.8" x2="910.7" y2="548.3" stroke="#6e3038" stroke-width="1.05" stroke-opacity="0.90"/>
<line x1="910.7" y1="548.3" x2="910.3" y2="565.5" stroke="#6a5a5e" stroke-width="1.27"/>
<line x1="914.8" y1="503.9" x2="913.7" y2="547.0" stroke="#6e3038" stroke-width="1.04" stroke-opacity="0.90"/>
<line x1="913.7" y1="547.0" x2="913.3" y2="563.9" stroke="#6a5a5e" stroke-width="1.25"/>
<line x1="917.7" y1="503.0" x2="916.6" y2="545.6" stroke="#6e3038" stroke-width="1.03" stroke-opacity="0.90"/>
<line x1="916.6" y1="545.6" x2="916.1" y2="562.4" stroke="#6a5a5e" stroke-width="1.24"/>
<line x1="920.5" y1="502.1" x2="919.4" y2="544.3" stroke="#6e3038" stroke-width="1.02" stroke-opacity="0.90"/>
<line x1="919.4" y1="544.3" x2="919.0" y2="560.9" stroke="#6a5a5e" stroke-width="1.22"/>
<line x1="923.3" y1="501.3" x2="922.2" y2="543.0" stroke="#6e3038" stroke-width="1.01" stroke-opacity="0.90"/>
<line x1="922.2" y1="543.0" x2="921.7" y2="559.4" stroke="#6a5a5e" stroke-width="1.21"/>
<line x1="926.0" y1="500.4" x2="924.9" y2="541.7" stroke="#6e3038" stroke-width="1.00" stroke-opacity="0.90"/>
<line x1="924.9" y1="541.7" x2="924.5" y2="558.0" stroke="#6a5a5e" stroke-width="1.20"/>
<line x1="928.7" y1="499.6" x2="927.6" y2="540.4" stroke="#6e3038" stroke-width="0.99" stroke-opacity="0.90"/>
<line x1="927.6" y1="540.4" x2="927.1" y2="556.6" stroke="#6a5a5e" stroke-width="1.19"/>
<line x1="931.3" y1="498.8" x2="930.2" y2="539.2" stroke="#6e3038" stroke-width="0.98" stroke-opacity="0.90"/>
<line x1="930.2" y1="539.2" x2="929.7" y2="555.2" stroke="#6a5a5e" stroke-width="1.17"/>
<line x1="933.9" y1="498.0" x2="932.7" y2="538.0" stroke="#6e3038" stroke-width="0.97" stroke-opacity="0.90"/>
<line x1="932.7" y1="538.0" x2="932.3" y2="553.8" stroke="#6a5a5e" stroke-width="1.16"/>
<line x1="936.4" y1="497.2" x2="935.2" y2="536.9" stroke="#6e3038" stroke-width="0.96" stroke-opacity="0.90"/>
<line x1="935.2" y1="536.9" x2="934.8" y2="552.5" stroke="#6a5a5e" stroke-width="1.15"/>
<line x1="938.8" y1="496.5" x2="937.7" y2="535.7" stroke="#6e3038" stroke-width="0.95" stroke-opacity="0.90"/>
<line x1="937.7" y1="535.7" x2="937.2" y2="551.2" stroke="#6a5a5e" stroke-width="1.14"/>
<line x1="941.2" y1="495.7" x2="940.1" y2="534.6" stroke="#6e3038" stroke-width="0.94" stroke-opacity="0.90"/>
<line x1="940.1" y1="534.6" x2="939.6" y2="549.9" stroke="#6a5a5e" stroke-width="1.13"/>
<line x1="943.6" y1="495.0" x2="942.4" y2="533.5" stroke="#6e3038" stroke-width="0.93" stroke-opacity="0.90"/>
<line x1="942.4" y1="533.5" x2="942.0" y2="548.7" stroke="#6a5a5e" stroke-width="1.12"/>
<line x1="945.9" y1="494.3" x2="944.7" y2="532.4" stroke="#6e3038" stroke-width="0.92" stroke-opacity="0.90"/>
<line x1="944.7" y1="532.4" x2="944.3" y2="547.4" stroke="#6a5a5e" stroke-width="1.10"/>
<line x1="948.2" y1="493.6" x2="947.0" y2="531.3" stroke="#6e3038" stroke-width="0.91" stroke-opacity="0.90"/>
<line x1="947.0" y1="531.3" x2="946.6" y2="546.2" stroke="#6a5a5e" stroke-width="1.09"/>
<line x1="950.4" y1="492.9" x2="949.2" y2="530.3" stroke="#6e3038" stroke-width="0.90" stroke-opacity="0.90"/>
<line x1="949.2" y1="530.3" x2="948.8" y2="545.1" stroke="#6a5a5e" stroke-width="1.08"/>
<line x1="952.6" y1="492.2" x2="951.4" y2="529.3" stroke="#6e3038" stroke-width="0.89" stroke-opacity="0.90"/>
<line x1="951.4" y1="529.3" x2="951.0" y2="543.9" stroke="#6a5a5e" stroke-width="1.07"/>
<line x1="954.7" y1="491.6" x2="953.6" y2="528.3" stroke="#6e3038" stroke-width="0.89" stroke-opacity="0.90"/>
<line x1="953.6" y1="528.3" x2="953.1" y2="542.8" stroke="#6a5a5e" stroke-width="1.06"/>
<line x1="956.8" y1="490.9" x2="955.7" y2="527.3" stroke="#6e3038" stroke-width="0.88" stroke-opacity="0.90"/>
<line x1="955.7" y1="527.3" x2="955.2" y2="541.6" stroke="#6a5a5e" stroke-width="1.05"/>
<line x1="958.9" y1="490.3" x2="957.7" y2="526.3" stroke="#6e3038" stroke-width="0.87" stroke-opacity="0.90"/>
<line x1="957.7" y1="526.3" x2="957.3" y2="540.6" stroke="#6a5a5e" stroke-width="1.04"/>
<line x1="960.9" y1="489.7" x2="959.7" y2="525.4" stroke="#6e3038" stroke-width="0.86" stroke-opacity="0.90"/>
<line x1="959.7" y1="525.4" x2="959.3" y2="539.5" stroke="#6a5a5e" stroke-width="1.03"/>
<line x1="962.9" y1="489.0" x2="961.7" y2="524.4" stroke="#6e3038" stroke-width="0.85" stroke-opacity="0.90"/>
<line x1="961.7" y1="524.4" x2="961.3" y2="538.4" stroke="#6a5a5e" stroke-width="1.02"/>
<line x1="964.8" y1="488.4" x2="963.7" y2="523.5" stroke="#6e3038" stroke-width="0.85" stroke-opacity="0.90"/>
<line x1="963.7" y1="523.5" x2="963.2" y2="537.4" stroke="#6a5a5e" stroke-width="1.01"/>
<line x1="966.8" y1="487.8" x2="965.6" y2="522.6" stroke="#6e3038" stroke-width="0.84" stroke-opacity="0.90"/>
<line x1="965.6" y1="522.6" x2="965.1" y2="536.4" stroke="#6a5a5e" stroke-width="1.01"/>
<line x1="968.7" y1="487.3" x2="967.5" y2="521.7" stroke="#6e3038" stroke-width="0.83" stroke-opacity="0.90"/>
<line x1="967.5" y1="521.7" x2="967.0" y2="535.4" stroke="#6a5a5e" stroke-width="1.00"/>
<line x1="970.5" y1="486.7" x2="969.3" y2="520.9" stroke="#6e3038" stroke-width="0.82" stroke-opacity="0.90"/>
<line x1="969.3" y1="520.9" x2="968.9" y2="534.4" stroke="#6a5a5e" stroke-width="0.99"/>
<line x1="972.3" y1="486.1" x2="971.2" y2="520.0" stroke="#6e3038" stroke-width="0.82" stroke-opacity="0.90"/>
<line x1="971.2" y1="520.0" x2="970.7" y2="533.4" stroke="#6a5a5e" stroke-width="0.98"/>
<line x1="974.1" y1="485.6" x2="973.0" y2="519.2" stroke="#6e3038" stroke-width="0.81" stroke-opacity="0.90"/>
<line x1="973.0" y1="519.2" x2="972.5" y2="532.5" stroke="#6a5a5e" stroke-width="0.97"/>
<line x1="975.9" y1="485.0" x2="974.7" y2="518.3" stroke="#6e3038" stroke-width="0.80" stroke-opacity="0.90"/>
<line x1="974.7" y1="518.3" x2="974.3" y2="531.5" stroke="#6a5a5e" stroke-width="0.96"/>
<line x1="977.6" y1="484.5" x2="976.5" y2="517.5" stroke="#6e3038" stroke-width="0.80" stroke-opacity="0.90"/>
<line x1="976.5" y1="517.5" x2="976.0" y2="530.6" stroke="#6a5a5e" stroke-width="0.95"/>
<line x1="979.3" y1="484.0" x2="978.2" y2="516.7" stroke="#6e3038" stroke-width="0.79" stroke-opacity="0.90"/>
<line x1="978.2" y1="516.7" x2="977.7" y2="529.7" stroke="#6a5a5e" stroke-width="0.95"/>
<line x1="981.0" y1="483.4" x2="979.8" y2="516.0" stroke="#6e3038" stroke-width="0.78" stroke-opacity="0.90"/>
<line x1="979.8" y1="516.0" x2="979.4" y2="528.8" stroke="#6a5a5e" stroke-width="0.94"/>
<line x1="982.6" y1="482.9" x2="981.5" y2="515.2" stroke="#6e3038" stroke-width="0.78" stroke-opacity="0.90"/>
<line x1="981.5" y1="515.2" x2="981.0" y2="527.9" stroke="#6a5a5e" stroke-width="0.93"/>
<line x1="984.3" y1="482.4" x2="983.1" y2="514.4" stroke="#6e3038" stroke-width="0.77" stroke-opacity="0.90"/>
<line x1="983.1" y1="514.4" x2="982.6" y2="527.1" stroke="#6a5a5e" stroke-width="0.92"/>
<line x1="985.8" y1="481.9" x2="984.7" y2="513.7" stroke="#6e3038" stroke-width="0.76" stroke-opacity="0.90"/>
<line x1="984.7" y1="513.7" x2="984.2" y2="526.2" stroke="#6a5a5e" stroke-width="0.92"/>
<line x1="987.4" y1="481.4" x2="986.3" y2="512.9" stroke="#6e3038" stroke-width="0.76" stroke-opacity="0.90"/>
<line x1="986.3" y1="512.9" x2="985.8" y2="525.4" stroke="#6a5a5e" stroke-width="0.91"/>
<line x1="989.0" y1="481.0" x2="987.8" y2="512.2" stroke="#6e3038" stroke-width="0.75" stroke-opacity="0.90"/>
<line x1="987.8" y1="512.2" x2="987.4" y2="524.6" stroke="#6a5a5e" stroke-width="0.90"/>
<line x1="990.5" y1="480.5" x2="989.3" y2="511.5" stroke="#6e3038" stroke-width="0.75" stroke-opacity="0.90"/>
<line x1="989.3" y1="511.5" x2="988.9" y2="523.8" stroke="#6a5a5e" stroke-width="0.89"/>
<line x1="992.0" y1="480.0" x2="990.8" y2="510.8" stroke="#6e3038" stroke-width="0.74" stroke-opacity="0.90"/>
<line x1="990.8" y1="510.8" x2="990.4" y2="523.0" stroke="#6a5a5e" stroke-width="0.89"/>
<line x1="993.4" y1="479.6" x2="992.3" y2="510.1" stroke="#6e3038" stroke-width="0.73" stroke-opacity="0.90"/>
<line x1="992.3" y1="510.1" x2="991.8" y2="522.2" stroke="#6a5a5e" stroke-width="0.88"/>
<line x1="994.9" y1="479.1" x2="993.7" y2="509.4" stroke="#6e3038" stroke-width="0.73" stroke-opacity="0.90"/>
<line x1="993.7" y1="509.4" x2="993.3" y2="521.4" stroke="#6a5a5e" stroke-width="0.87"/>
<line x1="996.3" y1="478.7" x2="995.2" y2="508.8" stroke="#6e3038" stroke-width="0.72" stroke-opacity="0.90"/>
<line x1="995.2" y1="508.8" x2="994.7" y2="520.7" stroke="#6a5a5e" stroke-width="0.87"/>
<line x1="997.7" y1="478.3" x2="996.6" y2="508.1" stroke="#6e3038" stroke-width="0.72" stroke-opacity="0.90"/>
<line x1="996.6" y1="508.1" x2="996.1" y2="519.9" stroke="#6a5a5e" stroke-width="0.86"/>
<line x1="999.1" y1="477.8" x2="998.0" y2="507.5" stroke="#6e3038" stroke-width="0.71" stroke-opacity="0.90"/>
<line x1="998.0" y1="507.5" x2="997.5" y2="519.2" stroke="#6a5a5e" stroke-width="0.85"/>
<line x1="1000.5" y1="477.4" x2="999.3" y2="506.8" stroke="#6e3038" stroke-width="0.71" stroke-opacity="0.90"/>
<line x1="999.3" y1="506.8" x2="998.9" y2="518.4" stroke="#6a5a5e" stroke-width="0.85"/>
<line x1="1001.8" y1="477.0" x2="1000.7" y2="506.2" stroke="#6e3038" stroke-width="0.70" stroke-opacity="0.90"/>
<line x1="1000.7" y1="506.2" x2="1000.2" y2="517.7" stroke="#6a5a5e" stroke-width="0.84"/>
<line x1="1003.1" y1="476.6" x2="1002.0" y2="505.6" stroke="#6e3038" stroke-width="0.70" stroke-opacity="0.90"/>
<line x1="1002.0" y1="505.6" x2="1001.6" y2="517.0" stroke="#6a5a5e" stroke-width="0.83"/>
<line x1="1004.4" y1="476.2" x2="1003.3" y2="504.9" stroke="#6e3038" stroke-width="0.69" stroke-opacity="0.90"/>
<line x1="1003.3" y1="504.9" x2="1002.9" y2="516.3" stroke="#6a5a5e" stroke-width="0.83"/>
<line x1="1005.7" y1="475.8" x2="1004.6" y2="504.3" stroke="#6e3038" stroke-width="0.69" stroke-opacity="0.90"/>
<line x1="1004.6" y1="504.3" x2="1004.2" y2="515.6" stroke="#6a5a5e" stroke-width="0.82"/>
<line x1="554.0" y1="729.2" x2="561.7" y2="725.4" stroke="#4f8e92" stroke-width="3.43"/><line x1="561.7" y1="725.4" x2="576.7" y2="718.1" stroke="#4f8e92" stroke-width="3.37"/><line x1="576.7" y1="718.1" x2="596.0" y2="708.6" stroke="#4f8e92" stroke-width="3.28"/><line x1="596.0" y1="708.6" x2="618.0" y2="697.8" stroke="#4f8e92" stroke-width="3.16"/><line x1="618.0" y1="697.8" x2="641.6" y2="686.2" stroke="#4f8e92" stroke-width="3.04"/><line x1="641.6" y1="686.2" x2="666.0" y2="674.3" stroke="#4f8e92" stroke-width="2.90"/><line x1="666.0" y1="674.3" x2="690.5" y2="662.2" stroke="#4f8e92" stroke-width="2.77"/><line x1="690.5" y1="662.2" x2="714.7" y2="650.4" stroke="#4f8e92" stroke-width="2.63"/><line x1="714.7" y1="650.4" x2="738.2" y2="638.8" stroke="#4f8e92" stroke-width="2.50"/><line x1="738.2" y1="638.8" x2="760.9" y2="627.7" stroke="#4f8e92" stroke-width="2.38"/><line x1="760.9" y1="627.7" x2="782.6" y2="617.1" stroke="#4f8e92" stroke-width="2.25"/><line x1="782.6" y1="617.1" x2="803.2" y2="607.0" stroke="#4f8e92" stroke-width="2.14"/><line x1="803.2" y1="607.0" x2="822.7" y2="597.4" stroke="#4f8e92" stroke-width="2.03"/><line x1="822.7" y1="597.4" x2="841.0" y2="588.4" stroke="#4f8e92" stroke-width="1.92"/><line x1="841.0" y1="588.4" x2="858.3" y2="580.0" stroke="#4f8e92" stroke-width="1.83"/><line x1="858.3" y1="580.0" x2="874.5" y2="572.0" stroke="#4f8e92" stroke-width="1.73"/><line x1="874.5" y1="572.0" x2="889.7" y2="564.6" stroke="#4f8e92" stroke-width="1.65"/><line x1="889.7" y1="564.6" x2="903.9" y2="557.6" stroke="#4f8e92" stroke-width="1.57"/><line x1="903.9" y1="557.6" x2="917.2" y2="551.1" stroke="#4f8e92" stroke-width="1.49"/><line x1="917.2" y1="551.1" x2="929.7" y2="544.9" stroke="#4f8e92" stroke-width="1.42"/><line x1="929.7" y1="544.9" x2="941.4" y2="539.2" stroke="#4f8e92" stroke-width="1.35"/><line x1="941.4" y1="539.2" x2="952.3" y2="533.9" stroke="#4f8e92" stroke-width="1.29"/><line x1="952.3" y1="533.9" x2="962.6" y2="528.8" stroke="#4f8e92" stroke-width="1.23"/><line x1="962.6" y1="528.8" x2="972.2" y2="524.1" stroke="#4f8e92" stroke-width="1.18"/><line x1="972.2" y1="524.1" x2="981.2" y2="519.7" stroke="#4f8e92" stroke-width="1.13"/><line x1="981.2" y1="519.7" x2="989.6" y2="515.5" stroke="#4f8e92" stroke-width="1.08"/><line x1="989.6" y1="515.5" x2="997.6" y2="511.6" stroke="#4f8e92" stroke-width="1.03"/><line x1="997.6" y1="511.6" x2="1005.1" y2="508.0" stroke="#4f8e92" stroke-width="0.99"/>
<line x1="554.8" y1="752.4" x2="562.4" y2="748.4" stroke="#5c8a90" stroke-width="2.47"/><line x1="562.4" y1="748.4" x2="577.3" y2="740.5" stroke="#5c8a90" stroke-width="2.42"/><line x1="577.3" y1="740.5" x2="596.5" y2="730.3" stroke="#5c8a90" stroke-width="2.36"/><line x1="596.5" y1="730.3" x2="618.5" y2="718.8" stroke="#5c8a90" stroke-width="2.28"/><line x1="618.5" y1="718.8" x2="642.0" y2="706.3" stroke="#5c8a90" stroke-width="2.19"/><line x1="642.0" y1="706.3" x2="666.3" y2="693.5" stroke="#5c8a90" stroke-width="2.09"/><line x1="666.3" y1="693.5" x2="690.7" y2="680.6" stroke="#5c8a90" stroke-width="1.99"/><line x1="690.7" y1="680.6" x2="714.8" y2="667.9" stroke="#5c8a90" stroke-width="1.90"/><line x1="714.8" y1="667.9" x2="738.3" y2="655.5" stroke="#5c8a90" stroke-width="1.80"/><line x1="738.3" y1="655.5" x2="760.9" y2="643.5" stroke="#5c8a90" stroke-width="1.71"/><line x1="760.9" y1="643.5" x2="782.5" y2="632.1" stroke="#5c8a90" stroke-width="1.62"/><line x1="782.5" y1="632.1" x2="803.1" y2="621.3" stroke="#5c8a90" stroke-width="1.54"/><line x1="803.1" y1="621.3" x2="822.5" y2="611.0" stroke="#5c8a90" stroke-width="1.46"/><line x1="822.5" y1="611.0" x2="840.8" y2="601.3" stroke="#5c8a90" stroke-width="1.39"/><line x1="840.8" y1="601.3" x2="858.1" y2="592.2" stroke="#5c8a90" stroke-width="1.32"/><line x1="858.1" y1="592.2" x2="874.2" y2="583.7" stroke="#5c8a90" stroke-width="1.25"/><line x1="874.2" y1="583.7" x2="889.4" y2="575.7" stroke="#5c8a90" stroke-width="1.19"/><line x1="889.4" y1="575.7" x2="903.6" y2="568.2" stroke="#5c8a90" stroke-width="1.13"/><line x1="903.6" y1="568.2" x2="916.9" y2="561.1" stroke="#5c8a90" stroke-width="1.08"/><line x1="916.9" y1="561.1" x2="929.4" y2="554.6" stroke="#5c8a90" stroke-width="1.02"/><line x1="929.4" y1="554.6" x2="941.1" y2="548.4" stroke="#5c8a90" stroke-width="0.98"/><line x1="941.1" y1="548.4" x2="952.0" y2="542.6" stroke="#5c8a90" stroke-width="0.93"/><line x1="952.0" y1="542.6" x2="962.3" y2="537.2" stroke="#5c8a90" stroke-width="0.89"/><line x1="962.3" y1="537.2" x2="971.9" y2="532.1" stroke="#5c8a90" stroke-width="0.85"/><line x1="971.9" y1="532.1" x2="980.9" y2="527.4" stroke="#5c8a90" stroke-width="0.81"/><line x1="980.9" y1="527.4" x2="989.4" y2="522.9" stroke="#5c8a90" stroke-width="0.78"/><line x1="989.4" y1="522.9" x2="997.3" y2="518.7" stroke="#5c8a90" stroke-width="0.75"/><line x1="997.3" y1="518.7" x2="1004.8" y2="514.7" stroke="#5c8a90" stroke-width="0.72"/>
<line x1="545.3" y1="622.8" x2="547.7" y2="694.6" stroke="#703a42" stroke-width="2.03" stroke-opacity="0.80"/>
<line x1="595.6" y1="700.6" x2="547.7" y2="694.6" stroke="#6a4a50" stroke-width="2.03" stroke-opacity="0.80"/>
<line x1="545.3" y1="622.8" x2="593.7" y2="627.3" stroke="#6a575b" stroke-width="2.54"/>
<line x1="593.7" y1="627.3" x2="595.6" y2="700.6" stroke="#5c5557" stroke-width="3.25"/>
<line x1="561.3" y1="617.8" x2="563.4" y2="687.8" stroke="#703a42" stroke-width="1.98" stroke-opacity="0.80"/>
<line x1="610.5" y1="693.5" x2="563.4" y2="687.8" stroke="#6a4a50" stroke-width="1.98" stroke-opacity="0.80"/>
<line x1="561.3" y1="617.8" x2="608.8" y2="622.0" stroke="#6a575b" stroke-width="2.47"/>
<line x1="608.8" y1="622.0" x2="610.5" y2="693.5" stroke="#5c5557" stroke-width="3.16"/>
<line x1="576.5" y1="613.0" x2="578.4" y2="681.3" stroke="#703a42" stroke-width="1.93" stroke-opacity="0.80"/>
<line x1="624.6" y1="686.8" x2="578.4" y2="681.3" stroke="#6a4a50" stroke-width="1.93" stroke-opacity="0.80"/>
<line x1="576.5" y1="613.0" x2="623.2" y2="617.0" stroke="#6a575b" stroke-width="2.41"/>
<line x1="623.2" y1="617.0" x2="624.6" y2="686.8" stroke="#5c5557" stroke-width="3.08"/>
<line x1="591.0" y1="608.4" x2="592.7" y2="675.2" stroke="#703a42" stroke-width="1.88" stroke-opacity="0.80"/>
<line x1="638.0" y1="680.3" x2="592.7" y2="675.2" stroke="#6a4a50" stroke-width="1.88" stroke-opacity="0.80"/>
<line x1="591.0" y1="608.4" x2="636.8" y2="612.2" stroke="#6a575b" stroke-width="2.35"/>
<line x1="636.8" y1="612.2" x2="638.0" y2="680.3" stroke="#5c5557" stroke-width="3.00"/>
<line x1="604.8" y1="604.0" x2="606.3" y2="669.3" stroke="#703a42" stroke-width="1.83" stroke-opacity="0.80"/>
<line x1="650.9" y1="674.2" x2="606.3" y2="669.3" stroke="#6a4a50" stroke-width="1.83" stroke-opacity="0.80"/>
<line x1="604.8" y1="604.0" x2="649.8" y2="607.7" stroke="#6a575b" stroke-width="2.29"/>
<line x1="649.8" y1="607.7" x2="650.9" y2="674.2" stroke="#5c5557" stroke-width="2.93"/>
<line x1="618.0" y1="599.8" x2="619.3" y2="663.7" stroke="#703a42" stroke-width="1.79" stroke-opacity="0.80"/>
<line x1="663.1" y1="668.4" x2="619.3" y2="663.7" stroke="#6a4a50" stroke-width="1.79" stroke-opacity="0.80"/>
<line x1="618.0" y1="599.8" x2="662.2" y2="603.4" stroke="#6a575b" stroke-width="2.24"/>
<line x1="662.2" y1="603.4" x2="663.1" y2="668.4" stroke="#5c5557" stroke-width="2.86"/>
<line x1="630.5" y1="595.9" x2="631.7" y2="658.3" stroke="#703a42" stroke-width="1.75" stroke-opacity="0.80"/>
<line x1="674.8" y1="662.8" x2="631.7" y2="658.3" stroke="#6a4a50" stroke-width="1.75" stroke-opacity="0.80"/>
<line x1="630.5" y1="595.9" x2="674.0" y2="599.2" stroke="#6a575b" stroke-width="2.18"/>
<line x1="674.0" y1="599.2" x2="674.8" y2="662.8" stroke="#5c5557" stroke-width="2.80"/>
<line x1="642.6" y1="592.0" x2="643.6" y2="653.2" stroke="#703a42" stroke-width="1.71" stroke-opacity="0.80"/>
<line x1="685.9" y1="657.5" x2="643.6" y2="653.2" stroke="#6a4a50" stroke-width="1.71" stroke-opacity="0.80"/>
<line x1="642.6" y1="592.0" x2="685.3" y2="595.3" stroke="#6a575b" stroke-width="2.13"/>
<line x1="685.3" y1="595.3" x2="685.9" y2="657.5" stroke="#5c5557" stroke-width="2.73"/>
<line x1="654.1" y1="588.4" x2="655.0" y2="648.3" stroke="#703a42" stroke-width="1.67" stroke-opacity="0.80"/>
<line x1="696.6" y1="652.4" x2="655.0" y2="648.3" stroke="#6a4a50" stroke-width="1.67" stroke-opacity="0.80"/>
<line x1="654.1" y1="588.4" x2="696.1" y2="591.5" stroke="#6a575b" stroke-width="2.09"/>
<line x1="696.1" y1="591.5" x2="696.6" y2="652.4" stroke="#5c5557" stroke-width="2.67"/>
<line x1="665.1" y1="584.9" x2="665.9" y2="643.6" stroke="#703a42" stroke-width="1.63" stroke-opacity="0.80"/>
<line x1="706.9" y1="647.6" x2="665.9" y2="643.6" stroke="#6a4a50" stroke-width="1.63" stroke-opacity="0.80"/>
<line x1="665.1" y1="584.9" x2="706.4" y2="587.9" stroke="#6a575b" stroke-width="2.04"/>
<line x1="706.4" y1="587.9" x2="706.9" y2="647.6" stroke="#5c5557" stroke-width="2.61"/>
<line x1="675.7" y1="581.6" x2="676.4" y2="639.1" stroke="#703a42" stroke-width="1.60" stroke-opacity="0.80"/>
<line x1="716.7" y1="642.9" x2="676.4" y2="639.1" stroke="#6a4a50" stroke-width="1.60" stroke-opacity="0.80"/>
<line x1="675.7" y1="581.6" x2="716.3" y2="584.4" stroke="#6a575b" stroke-width="2.00"/>
<line x1="716.3" y1="584.4" x2="716.7" y2="642.9" stroke="#5c5557" stroke-width="2.56"/>
<line x1="685.9" y1="578.3" x2="686.4" y2="634.8" stroke="#703a42" stroke-width="1.57" stroke-opacity="0.80"/>
<line x1="726.1" y1="638.4" x2="686.4" y2="634.8" stroke="#6a4a50" stroke-width="1.57" stroke-opacity="0.80"/>
<line x1="685.9" y1="578.3" x2="725.8" y2="581.0" stroke="#6a575b" stroke-width="1.96"/>
<line x1="725.8" y1="581.0" x2="726.1" y2="638.4" stroke="#5c5557" stroke-width="2.50"/>
<line x1="695.6" y1="575.2" x2="696.1" y2="630.6" stroke="#703a42" stroke-width="1.53" stroke-opacity="0.80"/>
<line x1="735.1" y1="634.1" x2="696.1" y2="630.6" stroke="#6a4a50" stroke-width="1.53" stroke-opacity="0.80"/>
<line x1="695.6" y1="575.2" x2="735.0" y2="577.9" stroke="#6a575b" stroke-width="1.92"/>
<line x1="735.0" y1="577.9" x2="735.1" y2="634.1" stroke="#5c5557" stroke-width="2.45"/>
<line x1="705.0" y1="572.3" x2="705.4" y2="626.6" stroke="#703a42" stroke-width="1.50" stroke-opacity="0.80"/>
<line x1="743.8" y1="630.0" x2="705.4" y2="626.6" stroke="#6a4a50" stroke-width="1.50" stroke-opacity="0.80"/>
<line x1="705.0" y1="572.3" x2="743.7" y2="574.8" stroke="#6a575b" stroke-width="1.88"/>
<line x1="743.7" y1="574.8" x2="743.8" y2="630.0" stroke="#5c5557" stroke-width="2.40"/>
<line x1="714.0" y1="569.4" x2="714.4" y2="622.7" stroke="#703a42" stroke-width="1.47" stroke-opacity="0.80"/>
<line x1="752.2" y1="626.0" x2="714.4" y2="622.7" stroke="#6a4a50" stroke-width="1.47" stroke-opacity="0.80"/>
<line x1="714.0" y1="569.4" x2="752.2" y2="571.8" stroke="#6a575b" stroke-width="1.84"/>
<line x1="752.2" y1="571.8" x2="752.2" y2="626.0" stroke="#5c5557" stroke-width="2.36"/>
<line x1="722.7" y1="566.7" x2="723.0" y2="619.0" stroke="#703a42" stroke-width="1.44" stroke-opacity="0.80"/>
<line x1="760.2" y1="622.1" x2="723.0" y2="619.0" stroke="#6a4a50" stroke-width="1.44" stroke-opacity="0.80"/>
<line x1="722.7" y1="566.7" x2="760.3" y2="569.0" stroke="#6a575b" stroke-width="1.81"/>
<line x1="760.3" y1="569.0" x2="760.2" y2="622.1" stroke="#5c5557" stroke-width="2.31"/>
<line x1="731.1" y1="564.0" x2="731.3" y2="615.4" stroke="#703a42" stroke-width="1.42" stroke-opacity="0.80"/>
<line x1="768.0" y1="618.5" x2="731.3" y2="615.4" stroke="#6a4a50" stroke-width="1.42" stroke-opacity="0.80"/>
<line x1="731.1" y1="564.0" x2="768.1" y2="566.2" stroke="#6a575b" stroke-width="1.77"/>
<line x1="768.1" y1="566.2" x2="768.0" y2="618.5" stroke="#5c5557" stroke-width="2.27"/>
<line x1="739.2" y1="561.5" x2="739.3" y2="612.0" stroke="#703a42" stroke-width="1.39" stroke-opacity="0.80"/>
<line x1="775.4" y1="614.9" x2="739.3" y2="612.0" stroke="#6a4a50" stroke-width="1.39" stroke-opacity="0.80"/>
<line x1="739.2" y1="561.5" x2="775.6" y2="563.6" stroke="#6a575b" stroke-width="1.74"/>
<line x1="775.6" y1="563.6" x2="775.4" y2="614.9" stroke="#5c5557" stroke-width="2.23"/>
<line x1="747.0" y1="559.0" x2="747.0" y2="608.7" stroke="#703a42" stroke-width="1.37" stroke-opacity="0.80"/>
<line x1="782.6" y1="611.5" x2="747.0" y2="608.7" stroke="#6a4a50" stroke-width="1.37" stroke-opacity="0.80"/>
<line x1="747.0" y1="559.0" x2="782.9" y2="561.1" stroke="#6a575b" stroke-width="1.71"/>
<line x1="782.9" y1="561.1" x2="782.6" y2="611.5" stroke="#5c5557" stroke-width="2.19"/>
<line x1="754.5" y1="556.6" x2="754.5" y2="605.4" stroke="#703a42" stroke-width="1.34" stroke-opacity="0.80"/>
<line x1="789.6" y1="608.2" x2="754.5" y2="605.4" stroke="#6a4a50" stroke-width="1.34" stroke-opacity="0.80"/>
<line x1="754.5" y1="556.6" x2="789.9" y2="558.6" stroke="#6a575b" stroke-width="1.68"/>
<line x1="789.9" y1="558.6" x2="789.6" y2="608.2" stroke="#5c5557" stroke-width="2.15"/>
<line x1="761.8" y1="554.3" x2="761.7" y2="602.3" stroke="#703a42" stroke-width="1.32" stroke-opacity="0.80"/>
<line x1="796.3" y1="605.0" x2="761.7" y2="602.3" stroke="#6a4a50" stroke-width="1.32" stroke-opacity="0.80"/>
<line x1="761.8" y1="554.3" x2="796.6" y2="556.2" stroke="#6a575b" stroke-width="1.65"/>
<line x1="796.6" y1="556.2" x2="796.3" y2="605.0" stroke="#5c5557" stroke-width="2.11"/>
<line x1="768.8" y1="552.1" x2="768.7" y2="599.3" stroke="#703a42" stroke-width="1.30" stroke-opacity="0.80"/>
<line x1="802.8" y1="601.9" x2="768.7" y2="599.3" stroke="#6a4a50" stroke-width="1.30" stroke-opacity="0.80"/>
<line x1="768.8" y1="552.1" x2="803.2" y2="554.0" stroke="#6a575b" stroke-width="1.62"/>
<line x1="803.2" y1="554.0" x2="802.8" y2="601.9" stroke="#5c5557" stroke-width="2.07"/>
<line x1="775.6" y1="549.9" x2="775.4" y2="596.4" stroke="#703a42" stroke-width="1.27" stroke-opacity="0.80"/>
<line x1="809.1" y1="598.9" x2="775.4" y2="596.4" stroke="#6a4a50" stroke-width="1.27" stroke-opacity="0.80"/>
<line x1="775.6" y1="549.9" x2="809.5" y2="551.7" stroke="#6a575b" stroke-width="1.59"/>
<line x1="809.5" y1="551.7" x2="809.1" y2="598.9" stroke="#5c5557" stroke-width="2.04"/>
<line x1="782.1" y1="547.9" x2="781.9" y2="593.6" stroke="#703a42" stroke-width="1.25" stroke-opacity="0.80"/>
<line x1="815.1" y1="596.0" x2="781.9" y2="593.6" stroke="#6a4a50" stroke-width="1.25" stroke-opacity="0.80"/>
<line x1="782.1" y1="547.9" x2="815.6" y2="549.6" stroke="#6a575b" stroke-width="1.57"/>
<line x1="815.6" y1="549.6" x2="815.1" y2="596.0" stroke="#5c5557" stroke-width="2.00"/>
<line x1="788.5" y1="545.8" x2="788.2" y2="590.9" stroke="#703a42" stroke-width="1.23" stroke-opacity="0.80"/>
<line x1="821.0" y1="593.2" x2="788.2" y2="590.9" stroke="#6a4a50" stroke-width="1.23" stroke-opacity="0.80"/>
<line x1="788.5" y1="545.8" x2="821.5" y2="547.5" stroke="#6a575b" stroke-width="1.54"/>
<line x1="821.5" y1="547.5" x2="821.0" y2="593.2" stroke="#5c5557" stroke-width="1.97"/>
<line x1="794.7" y1="543.9" x2="794.4" y2="588.2" stroke="#703a42" stroke-width="1.21" stroke-opacity="0.80"/>
<line x1="826.7" y1="590.5" x2="794.4" y2="588.2" stroke="#6a4a50" stroke-width="1.21" stroke-opacity="0.80"/>
<line x1="794.7" y1="543.9" x2="827.2" y2="545.5" stroke="#6a575b" stroke-width="1.51"/>
<line x1="827.2" y1="545.5" x2="826.7" y2="590.5" stroke="#5c5557" stroke-width="1.94"/>
<line x1="800.6" y1="542.0" x2="800.3" y2="585.7" stroke="#703a42" stroke-width="1.19" stroke-opacity="0.80"/>
<line x1="832.2" y1="587.8" x2="800.3" y2="585.7" stroke="#6a4a50" stroke-width="1.19" stroke-opacity="0.80"/>
<line x1="800.6" y1="542.0" x2="832.8" y2="543.6" stroke="#6a575b" stroke-width="1.49"/>
<line x1="832.8" y1="543.6" x2="832.2" y2="587.8" stroke="#5c5557" stroke-width="1.91"/>
<line x1="806.4" y1="540.2" x2="806.1" y2="583.2" stroke="#703a42" stroke-width="1.17" stroke-opacity="0.80"/>
<line x1="837.5" y1="585.3" x2="806.1" y2="583.2" stroke="#6a4a50" stroke-width="1.17" stroke-opacity="0.80"/>
<line x1="806.4" y1="540.2" x2="838.1" y2="541.7" stroke="#6a575b" stroke-width="1.47"/>
<line x1="838.1" y1="541.7" x2="837.5" y2="585.3" stroke="#5c5557" stroke-width="1.88"/>
<line x1="812.1" y1="538.4" x2="811.6" y2="580.8" stroke="#703a42" stroke-width="1.16" stroke-opacity="0.80"/>
<line x1="842.7" y1="582.8" x2="811.6" y2="580.8" stroke="#6a4a50" stroke-width="1.16" stroke-opacity="0.80"/>
<line x1="812.1" y1="538.4" x2="843.3" y2="539.9" stroke="#6a575b" stroke-width="1.44"/>
<line x1="843.3" y1="539.9" x2="842.7" y2="582.8" stroke="#5c5557" stroke-width="1.85"/>
<line x1="817.5" y1="536.7" x2="817.1" y2="578.5" stroke="#703a42" stroke-width="1.14" stroke-opacity="0.80"/>
<line x1="847.8" y1="580.4" x2="817.1" y2="578.5" stroke="#6a4a50" stroke-width="1.14" stroke-opacity="0.80"/>
<line x1="817.5" y1="536.7" x2="848.4" y2="538.1" stroke="#6a575b" stroke-width="1.42"/>
<line x1="848.4" y1="538.1" x2="847.8" y2="580.4" stroke="#5c5557" stroke-width="1.82"/>
<line x1="822.8" y1="535.0" x2="822.3" y2="576.2" stroke="#703a42" stroke-width="1.12" stroke-opacity="0.80"/>
<line x1="852.6" y1="578.1" x2="822.3" y2="576.2" stroke="#6a4a50" stroke-width="1.12" stroke-opacity="0.80"/>
<line x1="822.8" y1="535.0" x2="853.3" y2="536.4" stroke="#6a575b" stroke-width="1.40"/>
<line x1="853.3" y1="536.4" x2="852.6" y2="578.1" stroke="#5c5557" stroke-width="1.79"/>
<line x1="827.9" y1="533.4" x2="827.5" y2="574.0" stroke="#703a42" stroke-width="1.10" stroke-opacity="0.80"/>
<line x1="857.4" y1="575.9" x2="827.5" y2="574.0" stroke="#6a4a50" stroke-width="1.10" stroke-opacity="0.80"/>
<line x1="827.9" y1="533.4" x2="858.1" y2="534.7" stroke="#6a575b" stroke-width="1.38"/>
<line x1="858.1" y1="534.7" x2="857.4" y2="575.9" stroke="#5c5557" stroke-width="1.77"/>
<line x1="832.9" y1="531.8" x2="832.4" y2="571.8" stroke="#703a42" stroke-width="1.09" stroke-opacity="0.80"/>
<line x1="862.0" y1="573.7" x2="832.4" y2="571.8" stroke="#6a4a50" stroke-width="1.09" stroke-opacity="0.80"/>
<line x1="832.9" y1="531.8" x2="862.7" y2="533.1" stroke="#6a575b" stroke-width="1.36"/>
<line x1="862.7" y1="533.1" x2="862.0" y2="573.7" stroke="#5c5557" stroke-width="1.74"/>
<line x1="837.8" y1="530.2" x2="837.3" y2="569.8" stroke="#703a42" stroke-width="1.07" stroke-opacity="0.80"/>
<line x1="866.5" y1="571.5" x2="837.3" y2="569.8" stroke="#6a4a50" stroke-width="1.07" stroke-opacity="0.80"/>
<line x1="837.8" y1="530.2" x2="867.2" y2="531.5" stroke="#6a575b" stroke-width="1.34"/>
<line x1="867.2" y1="531.5" x2="866.5" y2="571.5" stroke="#5c5557" stroke-width="1.72"/>
<line x1="842.5" y1="528.7" x2="842.0" y2="567.7" stroke="#703a42" stroke-width="1.06" stroke-opacity="0.80"/>
<line x1="870.8" y1="569.4" x2="842.0" y2="567.7" stroke="#6a4a50" stroke-width="1.06" stroke-opacity="0.80"/>
<line x1="842.5" y1="528.7" x2="871.6" y2="530.0" stroke="#6a575b" stroke-width="1.32"/>
<line x1="871.6" y1="530.0" x2="870.8" y2="569.4" stroke="#5c5557" stroke-width="1.69"/>
<line x1="847.1" y1="527.3" x2="846.5" y2="565.8" stroke="#703a42" stroke-width="1.04" stroke-opacity="0.80"/>
<line x1="875.1" y1="567.4" x2="846.5" y2="565.8" stroke="#6a4a50" stroke-width="1.04" stroke-opacity="0.80"/>
<line x1="847.1" y1="527.3" x2="875.8" y2="528.5" stroke="#6a575b" stroke-width="1.30"/>
<line x1="875.8" y1="528.5" x2="875.1" y2="567.4" stroke="#5c5557" stroke-width="1.67"/>
<line x1="851.6" y1="525.9" x2="851.0" y2="563.8" stroke="#703a42" stroke-width="1.03" stroke-opacity="0.80"/>
<line x1="879.2" y1="565.5" x2="851.0" y2="563.8" stroke="#6a4a50" stroke-width="1.03" stroke-opacity="0.80"/>
<line x1="851.6" y1="525.9" x2="879.9" y2="527.1" stroke="#6a575b" stroke-width="1.29"/>
<line x1="879.9" y1="527.1" x2="879.2" y2="565.5" stroke="#5c5557" stroke-width="1.65"/>
<line x1="855.9" y1="524.5" x2="855.3" y2="562.0" stroke="#703a42" stroke-width="1.02" stroke-opacity="0.80"/>
<line x1="883.2" y1="563.6" x2="855.3" y2="562.0" stroke="#6a4a50" stroke-width="1.02" stroke-opacity="0.80"/>
<line x1="855.9" y1="524.5" x2="884.0" y2="525.6" stroke="#6a575b" stroke-width="1.27"/>
<line x1="884.0" y1="525.6" x2="883.2" y2="563.6" stroke="#5c5557" stroke-width="1.62"/>
<line x1="860.2" y1="523.1" x2="859.6" y2="560.2" stroke="#703a42" stroke-width="1.00" stroke-opacity="0.80"/>
<line x1="887.1" y1="561.7" x2="859.6" y2="560.2" stroke="#6a4a50" stroke-width="1.00" stroke-opacity="0.80"/>
<line x1="860.2" y1="523.1" x2="887.9" y2="524.3" stroke="#6a575b" stroke-width="1.25"/>
<line x1="887.9" y1="524.3" x2="887.1" y2="561.7" stroke="#5c5557" stroke-width="1.60"/>
<line x1="864.3" y1="521.8" x2="863.7" y2="558.4" stroke="#703a42" stroke-width="0.99" stroke-opacity="0.80"/>
<line x1="890.9" y1="559.9" x2="863.7" y2="558.4" stroke="#6a4a50" stroke-width="0.99" stroke-opacity="0.80"/>
<line x1="864.3" y1="521.8" x2="891.7" y2="522.9" stroke="#6a575b" stroke-width="1.24"/>
<line x1="891.7" y1="522.9" x2="890.9" y2="559.9" stroke="#5c5557" stroke-width="1.58"/>
<line x1="868.3" y1="520.6" x2="867.7" y2="556.7" stroke="#703a42" stroke-width="0.98" stroke-opacity="0.80"/>
<line x1="894.6" y1="558.1" x2="867.7" y2="556.7" stroke="#6a4a50" stroke-width="0.98" stroke-opacity="0.80"/>
<line x1="868.3" y1="520.6" x2="895.4" y2="521.6" stroke="#6a575b" stroke-width="1.22"/>
<line x1="895.4" y1="521.6" x2="894.6" y2="558.1" stroke="#5c5557" stroke-width="1.56"/>
<line x1="872.3" y1="519.3" x2="871.6" y2="555.0" stroke="#703a42" stroke-width="0.96" stroke-opacity="0.80"/>
<line x1="898.2" y1="556.4" x2="871.6" y2="555.0" stroke="#6a4a50" stroke-width="0.96" stroke-opacity="0.80"/>
<line x1="872.3" y1="519.3" x2="899.1" y2="520.4" stroke="#6a575b" stroke-width="1.20"/>
<line x1="899.1" y1="520.4" x2="898.2" y2="556.4" stroke="#5c5557" stroke-width="1.54"/>
<line x1="876.1" y1="518.1" x2="875.4" y2="553.3" stroke="#703a42" stroke-width="0.95" stroke-opacity="0.80"/>
<line x1="901.8" y1="554.7" x2="875.4" y2="553.3" stroke="#6a4a50" stroke-width="0.95" stroke-opacity="0.80"/>
<line x1="876.1" y1="518.1" x2="902.6" y2="519.1" stroke="#6a575b" stroke-width="1.19"/>
<line x1="902.6" y1="519.1" x2="901.8" y2="554.7" stroke="#5c5557" stroke-width="1.52"/>
<line x1="879.8" y1="516.9" x2="879.1" y2="551.7" stroke="#703a42" stroke-width="0.94" stroke-opacity="0.80"/>
<line x1="905.2" y1="553.1" x2="879.1" y2="551.7" stroke="#6a4a50" stroke-width="0.94" stroke-opacity="0.80"/>
<line x1="879.8" y1="516.9" x2="906.0" y2="517.9" stroke="#6a575b" stroke-width="1.17"/>
<line x1="906.0" y1="517.9" x2="905.2" y2="553.1" stroke="#5c5557" stroke-width="1.50"/>
<line x1="883.5" y1="515.8" x2="882.8" y2="550.2" stroke="#703a42" stroke-width="0.93" stroke-opacity="0.80"/>
<line x1="908.6" y1="551.5" x2="882.8" y2="550.2" stroke="#6a4a50" stroke-width="0.93" stroke-opacity="0.80"/>
<line x1="883.5" y1="515.8" x2="909.4" y2="516.7" stroke="#6a575b" stroke-width="1.16"/>
<line x1="909.4" y1="516.7" x2="908.6" y2="551.5" stroke="#5c5557" stroke-width="1.48"/>
<line x1="887.0" y1="514.6" x2="886.3" y2="548.6" stroke="#703a42" stroke-width="0.92" stroke-opacity="0.80"/>
<line x1="911.8" y1="549.9" x2="886.3" y2="548.6" stroke="#6a4a50" stroke-width="0.92" stroke-opacity="0.80"/>
<line x1="887.0" y1="514.6" x2="912.7" y2="515.6" stroke="#6a575b" stroke-width="1.15"/>
<line x1="912.7" y1="515.6" x2="911.8" y2="549.9" stroke="#5c5557" stroke-width="1.47"/>
<line x1="890.5" y1="513.5" x2="889.8" y2="547.1" stroke="#703a42" stroke-width="0.91" stroke-opacity="0.80"/>
<line x1="915.0" y1="548.4" x2="889.8" y2="547.1" stroke="#6a4a50" stroke-width="0.91" stroke-opacity="0.80"/>
<line x1="890.5" y1="513.5" x2="915.9" y2="514.5" stroke="#6a575b" stroke-width="1.13"/>
<line x1="915.9" y1="514.5" x2="915.0" y2="548.4" stroke="#5c5557" stroke-width="1.45"/>
<line x1="893.9" y1="512.5" x2="893.2" y2="545.7" stroke="#703a42" stroke-width="0.89" stroke-opacity="0.80"/>
<line x1="918.1" y1="546.9" x2="893.2" y2="545.7" stroke="#6a4a50" stroke-width="0.89" stroke-opacity="0.80"/>
<line x1="893.9" y1="512.5" x2="919.0" y2="513.4" stroke="#6a575b" stroke-width="1.12"/>
<line x1="919.0" y1="513.4" x2="918.1" y2="546.9" stroke="#5c5557" stroke-width="1.43"/>
<line x1="897.2" y1="511.4" x2="896.5" y2="544.2" stroke="#703a42" stroke-width="0.88" stroke-opacity="0.80"/>
<line x1="921.2" y1="545.4" x2="896.5" y2="544.2" stroke="#6a4a50" stroke-width="0.88" stroke-opacity="0.80"/>
<line x1="897.2" y1="511.4" x2="922.1" y2="512.3" stroke="#6a575b" stroke-width="1.10"/>
<line x1="922.1" y1="512.3" x2="921.2" y2="545.4" stroke="#5c5557" stroke-width="1.41"/>
<line x1="900.5" y1="510.4" x2="899.7" y2="542.9" stroke="#703a42" stroke-width="0.87" stroke-opacity="0.80"/>
<line x1="924.2" y1="544.0" x2="899.7" y2="542.9" stroke="#6a4a50" stroke-width="0.87" stroke-opacity="0.80"/>
<line x1="900.5" y1="510.4" x2="925.1" y2="511.3" stroke="#6a575b" stroke-width="1.09"/>
<line x1="925.1" y1="511.3" x2="924.2" y2="544.0" stroke="#5c5557" stroke-width="1.40"/>
<line x1="903.6" y1="509.4" x2="902.9" y2="541.5" stroke="#703a42" stroke-width="0.86" stroke-opacity="0.80"/>
<line x1="927.1" y1="542.6" x2="902.9" y2="541.5" stroke="#6a4a50" stroke-width="0.86" stroke-opacity="0.80"/>
<line x1="903.6" y1="509.4" x2="928.0" y2="510.2" stroke="#6a575b" stroke-width="1.08"/>
<line x1="928.0" y1="510.2" x2="927.1" y2="542.6" stroke="#5c5557" stroke-width="1.38"/>
<line x1="906.7" y1="508.4" x2="906.0" y2="540.2" stroke="#703a42" stroke-width="0.85" stroke-opacity="0.80"/>
<line x1="929.9" y1="541.3" x2="906.0" y2="540.2" stroke="#6a4a50" stroke-width="0.85" stroke-opacity="0.80"/>
<line x1="906.7" y1="508.4" x2="930.8" y2="509.2" stroke="#6a575b" stroke-width="1.07"/>
<line x1="930.8" y1="509.2" x2="929.9" y2="541.3" stroke="#5c5557" stroke-width="1.37"/>
<line x1="909.8" y1="507.4" x2="909.0" y2="538.9" stroke="#703a42" stroke-width="0.84" stroke-opacity="0.80"/>
<line x1="932.7" y1="540.0" x2="909.0" y2="538.9" stroke="#6a4a50" stroke-width="0.84" stroke-opacity="0.80"/>
<line x1="909.8" y1="507.4" x2="933.6" y2="508.3" stroke="#6a575b" stroke-width="1.06"/>
<line x1="933.6" y1="508.3" x2="932.7" y2="540.0" stroke="#5c5557" stroke-width="1.35"/>
<line x1="912.7" y1="506.5" x2="911.9" y2="537.6" stroke="#703a42" stroke-width="0.83" stroke-opacity="0.80"/>
<line x1="935.4" y1="538.7" x2="911.9" y2="537.6" stroke="#6a4a50" stroke-width="0.83" stroke-opacity="0.80"/>
<line x1="912.7" y1="506.5" x2="936.4" y2="507.3" stroke="#6a575b" stroke-width="1.04"/>
<line x1="936.4" y1="507.3" x2="935.4" y2="538.7" stroke="#5c5557" stroke-width="1.34"/>
<line x1="915.6" y1="505.6" x2="914.8" y2="536.3" stroke="#703a42" stroke-width="0.83" stroke-opacity="0.80"/>
<line x1="938.1" y1="537.4" x2="914.8" y2="536.3" stroke="#6a4a50" stroke-width="0.83" stroke-opacity="0.80"/>
<line x1="915.6" y1="505.6" x2="939.0" y2="506.4" stroke="#6a575b" stroke-width="1.03"/>
<line x1="939.0" y1="506.4" x2="938.1" y2="537.4" stroke="#5c5557" stroke-width="1.32"/>
<line x1="918.5" y1="504.7" x2="917.7" y2="535.1" stroke="#703a42" stroke-width="0.82" stroke-opacity="0.80"/>
<line x1="940.7" y1="536.1" x2="917.7" y2="535.1" stroke="#6a4a50" stroke-width="0.82" stroke-opacity="0.80"/>
<line x1="918.5" y1="504.7" x2="941.6" y2="505.4" stroke="#6a575b" stroke-width="1.02"/>
<line x1="941.6" y1="505.4" x2="940.7" y2="536.1" stroke="#5c5557" stroke-width="1.31"/>
<line x1="921.2" y1="503.8" x2="920.4" y2="533.9" stroke="#703a42" stroke-width="0.81" stroke-opacity="0.80"/>
<line x1="943.3" y1="534.9" x2="920.4" y2="533.9" stroke="#6a4a50" stroke-width="0.81" stroke-opacity="0.80"/>
<line x1="921.2" y1="503.8" x2="944.2" y2="504.6" stroke="#6a575b" stroke-width="1.01"/>
<line x1="944.2" y1="504.6" x2="943.3" y2="534.9" stroke="#5c5557" stroke-width="1.29"/>
<line x1="924.0" y1="502.9" x2="923.2" y2="532.8" stroke="#703a42" stroke-width="0.80" stroke-opacity="0.80"/>
<line x1="945.8" y1="533.7" x2="923.2" y2="532.8" stroke="#6a4a50" stroke-width="0.80" stroke-opacity="0.80"/>
<line x1="924.0" y1="502.9" x2="946.7" y2="503.7" stroke="#6a575b" stroke-width="1.00"/>
<line x1="946.7" y1="503.7" x2="945.8" y2="533.7" stroke="#5c5557" stroke-width="1.28"/>
<line x1="926.6" y1="502.1" x2="925.8" y2="531.6" stroke="#703a42" stroke-width="0.79" stroke-opacity="0.80"/>
<line x1="948.2" y1="532.6" x2="925.8" y2="531.6" stroke="#6a4a50" stroke-width="0.79" stroke-opacity="0.80"/>
<line x1="926.6" y1="502.1" x2="949.1" y2="502.8" stroke="#6a575b" stroke-width="0.99"/>
<line x1="949.1" y1="502.8" x2="948.2" y2="532.6" stroke="#5c5557" stroke-width="1.27"/>
<line x1="929.2" y1="501.3" x2="928.4" y2="530.5" stroke="#703a42" stroke-width="0.78" stroke-opacity="0.80"/>
<line x1="950.6" y1="531.4" x2="928.4" y2="530.5" stroke="#6a4a50" stroke-width="0.78" stroke-opacity="0.80"/>
<line x1="929.2" y1="501.3" x2="951.5" y2="502.0" stroke="#6a575b" stroke-width="0.98"/>
<line x1="951.5" y1="502.0" x2="950.6" y2="531.4" stroke="#5c5557" stroke-width="1.25"/>
<line x1="931.8" y1="500.5" x2="931.0" y2="529.4" stroke="#703a42" stroke-width="0.77" stroke-opacity="0.80"/>
<line x1="953.0" y1="530.3" x2="931.0" y2="529.4" stroke="#6a4a50" stroke-width="0.77" stroke-opacity="0.80"/>
<line x1="931.8" y1="500.5" x2="953.9" y2="501.2" stroke="#6a575b" stroke-width="0.97"/>
<line x1="953.9" y1="501.2" x2="953.0" y2="530.3" stroke="#5c5557" stroke-width="1.24"/>
<line x1="934.3" y1="499.7" x2="933.5" y2="528.3" stroke="#703a42" stroke-width="0.77" stroke-opacity="0.80"/>
<line x1="955.3" y1="529.2" x2="933.5" y2="528.3" stroke="#6a4a50" stroke-width="0.77" stroke-opacity="0.80"/>
<line x1="934.3" y1="499.7" x2="956.2" y2="500.3" stroke="#6a575b" stroke-width="0.96"/>
<line x1="956.2" y1="500.3" x2="955.3" y2="529.2" stroke="#5c5557" stroke-width="1.23"/>
<line x1="936.7" y1="498.9" x2="935.9" y2="527.3" stroke="#703a42" stroke-width="0.76" stroke-opacity="0.80"/>
<line x1="957.5" y1="528.1" x2="935.9" y2="527.3" stroke="#6a4a50" stroke-width="0.76" stroke-opacity="0.80"/>
<line x1="936.7" y1="498.9" x2="958.4" y2="499.6" stroke="#6a575b" stroke-width="0.95"/>
<line x1="958.4" y1="499.6" x2="957.5" y2="528.1" stroke="#5c5557" stroke-width="1.21"/>
<line x1="939.1" y1="498.1" x2="938.3" y2="526.2" stroke="#703a42" stroke-width="0.75" stroke-opacity="0.80"/>
<line x1="959.7" y1="527.1" x2="938.3" y2="526.2" stroke="#6a4a50" stroke-width="0.75" stroke-opacity="0.80"/>
<line x1="939.1" y1="498.1" x2="960.7" y2="498.8" stroke="#6a575b" stroke-width="0.94"/>
<line x1="960.7" y1="498.8" x2="959.7" y2="527.1" stroke="#5c5557" stroke-width="1.20"/>
<line x1="941.5" y1="497.4" x2="940.7" y2="525.2" stroke="#703a42" stroke-width="0.74" stroke-opacity="0.80"/>
<line x1="961.9" y1="526.1" x2="940.7" y2="525.2" stroke="#6a4a50" stroke-width="0.74" stroke-opacity="0.80"/>
<line x1="941.5" y1="497.4" x2="962.8" y2="498.0" stroke="#6a575b" stroke-width="0.93"/>
<line x1="962.8" y1="498.0" x2="961.9" y2="526.1" stroke="#5c5557" stroke-width="1.19"/>
<line x1="943.8" y1="496.7" x2="943.0" y2="524.2" stroke="#703a42" stroke-width="0.74" stroke-opacity="0.80"/>
<line x1="964.0" y1="525.0" x2="943.0" y2="524.2" stroke="#6a4a50" stroke-width="0.74" stroke-opacity="0.80"/>
<line x1="943.8" y1="496.7" x2="965.0" y2="497.3" stroke="#6a575b" stroke-width="0.92"/>
<line x1="965.0" y1="497.3" x2="964.0" y2="525.0" stroke="#5c5557" stroke-width="1.18"/>
<line x1="946.1" y1="495.9" x2="945.3" y2="523.2" stroke="#703a42" stroke-width="0.73" stroke-opacity="0.80"/>
<line x1="966.1" y1="524.0" x2="945.3" y2="523.2" stroke="#6a4a50" stroke-width="0.73" stroke-opacity="0.80"/>
<line x1="946.1" y1="495.9" x2="967.0" y2="496.5" stroke="#6a575b" stroke-width="0.91"/>
<line x1="967.0" y1="496.5" x2="966.1" y2="524.0" stroke="#5c5557" stroke-width="1.17"/>
<line x1="948.3" y1="495.2" x2="947.5" y2="522.3" stroke="#703a42" stroke-width="0.72" stroke-opacity="0.80"/>
<line x1="968.2" y1="523.1" x2="947.5" y2="522.3" stroke="#6a4a50" stroke-width="0.72" stroke-opacity="0.80"/>
<line x1="948.3" y1="495.2" x2="969.1" y2="495.8" stroke="#6a575b" stroke-width="0.90"/>
<line x1="969.1" y1="495.8" x2="968.2" y2="523.1" stroke="#5c5557" stroke-width="1.16"/>
<line x1="950.5" y1="494.5" x2="949.7" y2="521.3" stroke="#703a42" stroke-width="0.72" stroke-opacity="0.80"/>
<line x1="970.2" y1="522.1" x2="949.7" y2="521.3" stroke="#6a4a50" stroke-width="0.72" stroke-opacity="0.80"/>
<line x1="950.5" y1="494.5" x2="971.1" y2="495.1" stroke="#6a575b" stroke-width="0.89"/>
<line x1="971.1" y1="495.1" x2="970.2" y2="522.1" stroke="#5c5557" stroke-width="1.14"/>
<line x1="952.6" y1="493.9" x2="951.8" y2="520.4" stroke="#703a42" stroke-width="0.71" stroke-opacity="0.80"/>
<line x1="972.1" y1="521.2" x2="951.8" y2="520.4" stroke="#6a4a50" stroke-width="0.71" stroke-opacity="0.80"/>
<line x1="952.6" y1="493.9" x2="973.1" y2="494.4" stroke="#6a575b" stroke-width="0.89"/>
<line x1="973.1" y1="494.4" x2="972.1" y2="521.2" stroke="#5c5557" stroke-width="1.13"/>
<line x1="954.8" y1="493.2" x2="953.9" y2="519.5" stroke="#703a42" stroke-width="0.70" stroke-opacity="0.80"/>
<line x1="974.1" y1="520.3" x2="953.9" y2="519.5" stroke="#6a4a50" stroke-width="0.70" stroke-opacity="0.80"/>
<line x1="954.8" y1="493.2" x2="975.0" y2="493.8" stroke="#6a575b" stroke-width="0.88"/>
<line x1="975.0" y1="493.8" x2="974.1" y2="520.3" stroke="#5c5557" stroke-width="1.12"/>
<line x1="956.8" y1="492.5" x2="956.0" y2="518.6" stroke="#703a42" stroke-width="0.70" stroke-opacity="0.80"/>
<line x1="976.0" y1="519.4" x2="956.0" y2="518.6" stroke="#6a4a50" stroke-width="0.70" stroke-opacity="0.80"/>
<line x1="956.8" y1="492.5" x2="976.9" y2="493.1" stroke="#6a575b" stroke-width="0.87"/>
<line x1="976.9" y1="493.1" x2="976.0" y2="519.4" stroke="#5c5557" stroke-width="1.11"/>
<line x1="958.9" y1="491.9" x2="958.0" y2="517.7" stroke="#703a42" stroke-width="0.69" stroke-opacity="0.80"/>
<line x1="977.8" y1="518.5" x2="958.0" y2="517.7" stroke="#6a4a50" stroke-width="0.69" stroke-opacity="0.80"/>
<line x1="958.9" y1="491.9" x2="978.8" y2="492.4" stroke="#6a575b" stroke-width="0.86"/>
<line x1="978.8" y1="492.4" x2="977.8" y2="518.5" stroke="#5c5557" stroke-width="1.10"/>
<line x1="960.8" y1="491.3" x2="960.0" y2="516.9" stroke="#703a42" stroke-width="0.68" stroke-opacity="0.80"/>
<line x1="979.7" y1="517.6" x2="960.0" y2="516.9" stroke="#6a4a50" stroke-width="0.68" stroke-opacity="0.80"/>
<line x1="960.8" y1="491.3" x2="980.6" y2="491.8" stroke="#6a575b" stroke-width="0.85"/>
<line x1="980.6" y1="491.8" x2="979.7" y2="517.6" stroke="#5c5557" stroke-width="1.09"/>
<line x1="962.8" y1="490.6" x2="962.0" y2="516.0" stroke="#703a42" stroke-width="0.68" stroke-opacity="0.80"/>
<line x1="981.5" y1="516.7" x2="962.0" y2="516.0" stroke="#6a4a50" stroke-width="0.68" stroke-opacity="0.80"/>
<line x1="962.8" y1="490.6" x2="982.4" y2="491.2" stroke="#6a575b" stroke-width="0.85"/>
<line x1="982.4" y1="491.2" x2="981.5" y2="516.7" stroke="#5c5557" stroke-width="1.08"/>
<line x1="964.7" y1="490.0" x2="963.9" y2="515.2" stroke="#703a42" stroke-width="0.67" stroke-opacity="0.80"/>
<line x1="983.2" y1="515.9" x2="963.9" y2="515.2" stroke="#6a4a50" stroke-width="0.67" stroke-opacity="0.80"/>
<line x1="964.7" y1="490.0" x2="984.1" y2="490.6" stroke="#6a575b" stroke-width="0.84"/>
<line x1="984.1" y1="490.6" x2="983.2" y2="515.9" stroke="#5c5557" stroke-width="1.07"/>
<line x1="966.6" y1="489.4" x2="965.8" y2="514.4" stroke="#703a42" stroke-width="0.66" stroke-opacity="0.80"/>
<line x1="985.0" y1="515.1" x2="965.8" y2="514.4" stroke="#6a4a50" stroke-width="0.66" stroke-opacity="0.80"/>
<line x1="966.6" y1="489.4" x2="985.9" y2="489.9" stroke="#6a575b" stroke-width="0.83"/>
<line x1="985.9" y1="489.9" x2="985.0" y2="515.1" stroke="#5c5557" stroke-width="1.06"/>
<line x1="968.5" y1="488.9" x2="967.6" y2="513.6" stroke="#703a42" stroke-width="0.66" stroke-opacity="0.80"/>
<line x1="986.7" y1="514.3" x2="967.6" y2="513.6" stroke="#6a4a50" stroke-width="0.66" stroke-opacity="0.80"/>
<line x1="968.5" y1="488.9" x2="987.6" y2="489.3" stroke="#6a575b" stroke-width="0.82"/>
<line x1="987.6" y1="489.3" x2="986.7" y2="514.3" stroke="#5c5557" stroke-width="1.05"/>
<line x1="970.3" y1="488.3" x2="969.5" y2="512.8" stroke="#703a42" stroke-width="0.65" stroke-opacity="0.80"/>
<line x1="988.3" y1="513.5" x2="969.5" y2="512.8" stroke="#6a4a50" stroke-width="0.65" stroke-opacity="0.80"/>
<line x1="970.3" y1="488.3" x2="989.3" y2="488.8" stroke="#6a575b" stroke-width="0.82"/>
<line x1="989.3" y1="488.8" x2="988.3" y2="513.5" stroke="#5c5557" stroke-width="1.05"/>
<line x1="972.1" y1="487.7" x2="971.3" y2="512.0" stroke="#703a42" stroke-width="0.65" stroke-opacity="0.80"/>
<line x1="990.0" y1="512.7" x2="971.3" y2="512.0" stroke="#6a4a50" stroke-width="0.65" stroke-opacity="0.80"/>
<line x1="972.1" y1="487.7" x2="990.9" y2="488.2" stroke="#6a575b" stroke-width="0.81"/>
<line x1="990.9" y1="488.2" x2="990.0" y2="512.7" stroke="#5c5557" stroke-width="1.04"/>
<line x1="973.9" y1="487.1" x2="973.0" y2="511.3" stroke="#703a42" stroke-width="0.64" stroke-opacity="0.80"/>
<line x1="991.6" y1="511.9" x2="973.0" y2="511.3" stroke="#6a4a50" stroke-width="0.64" stroke-opacity="0.80"/>
<line x1="973.9" y1="487.1" x2="992.5" y2="487.6" stroke="#6a575b" stroke-width="0.80"/>
<line x1="992.5" y1="487.6" x2="991.6" y2="511.9" stroke="#5c5557" stroke-width="1.03"/>
<line x1="975.6" y1="486.6" x2="974.8" y2="510.5" stroke="#703a42" stroke-width="0.64" stroke-opacity="0.80"/>
<line x1="993.2" y1="511.1" x2="974.8" y2="510.5" stroke="#6a4a50" stroke-width="0.64" stroke-opacity="0.80"/>
<line x1="975.6" y1="486.6" x2="994.1" y2="487.1" stroke="#6a575b" stroke-width="0.80"/>
<line x1="994.1" y1="487.1" x2="993.2" y2="511.1" stroke="#5c5557" stroke-width="1.02"/>
<line x1="977.3" y1="486.1" x2="976.5" y2="509.8" stroke="#703a42" stroke-width="0.63" stroke-opacity="0.80"/>
<line x1="994.8" y1="510.4" x2="976.5" y2="509.8" stroke="#6a4a50" stroke-width="0.63" stroke-opacity="0.80"/>
<line x1="977.3" y1="486.1" x2="995.7" y2="486.5" stroke="#6a575b" stroke-width="0.79"/>
<line x1="995.7" y1="486.5" x2="994.8" y2="510.4" stroke="#5c5557" stroke-width="1.01"/>
<line x1="979.0" y1="485.5" x2="978.2" y2="509.1" stroke="#703a42" stroke-width="0.63" stroke-opacity="0.80"/>
<line x1="996.3" y1="509.7" x2="978.2" y2="509.1" stroke="#6a4a50" stroke-width="0.63" stroke-opacity="0.80"/>
<line x1="979.0" y1="485.5" x2="997.2" y2="486.0" stroke="#6a575b" stroke-width="0.78"/>
<line x1="997.2" y1="486.0" x2="996.3" y2="509.7" stroke="#5c5557" stroke-width="1.00"/>
<line x1="980.6" y1="485.0" x2="979.8" y2="508.3" stroke="#703a42" stroke-width="0.62" stroke-opacity="0.80"/>
<line x1="997.8" y1="508.9" x2="979.8" y2="508.3" stroke="#6a4a50" stroke-width="0.62" stroke-opacity="0.80"/>
<line x1="980.6" y1="485.0" x2="998.7" y2="485.4" stroke="#6a575b" stroke-width="0.78"/>
<line x1="998.7" y1="485.4" x2="997.8" y2="508.9" stroke="#5c5557" stroke-width="0.99"/>
<line x1="982.3" y1="484.5" x2="981.4" y2="507.6" stroke="#703a42" stroke-width="0.62" stroke-opacity="0.80"/>
<line x1="999.3" y1="508.2" x2="981.4" y2="507.6" stroke="#6a4a50" stroke-width="0.62" stroke-opacity="0.80"/>
<line x1="982.3" y1="484.5" x2="1000.2" y2="484.9" stroke="#6a575b" stroke-width="0.77"/>
<line x1="1000.2" y1="484.9" x2="999.3" y2="508.2" stroke="#5c5557" stroke-width="0.99"/>
<line x1="983.9" y1="484.0" x2="983.0" y2="507.0" stroke="#703a42" stroke-width="0.61" stroke-opacity="0.80"/>
<line x1="1000.8" y1="507.5" x2="983.0" y2="507.0" stroke="#6a4a50" stroke-width="0.61" stroke-opacity="0.80"/>
<line x1="983.9" y1="484.0" x2="1001.7" y2="484.4" stroke="#6a575b" stroke-width="0.76"/>
<line x1="1001.7" y1="484.4" x2="1000.8" y2="507.5" stroke="#5c5557" stroke-width="0.98"/>
<line x1="985.4" y1="483.5" x2="984.6" y2="506.3" stroke="#703a42" stroke-width="0.61" stroke-opacity="0.80"/>
<line x1="1002.2" y1="506.8" x2="984.6" y2="506.3" stroke="#6a4a50" stroke-width="0.61" stroke-opacity="0.80"/>
<line x1="985.4" y1="483.5" x2="1003.1" y2="483.9" stroke="#6a575b" stroke-width="0.76"/>
<line x1="1003.1" y1="483.9" x2="1002.2" y2="506.8" stroke="#5c5557" stroke-width="0.97"/>
<line x1="987.0" y1="483.0" x2="986.2" y2="505.6" stroke="#703a42" stroke-width="0.60" stroke-opacity="0.80"/>
<line x1="1003.6" y1="506.2" x2="986.2" y2="505.6" stroke="#6a4a50" stroke-width="0.60" stroke-opacity="0.80"/>
<line x1="987.0" y1="483.0" x2="1004.5" y2="483.4" stroke="#6a575b" stroke-width="0.75"/>
<line x1="1004.5" y1="483.4" x2="1003.6" y2="506.2" stroke="#5c5557" stroke-width="0.96"/>
<line x1="988.5" y1="482.5" x2="987.7" y2="504.9" stroke="#703a42" stroke-width="0.60" stroke-opacity="0.80"/>
<line x1="1005.0" y1="505.5" x2="987.7" y2="504.9" stroke="#6a4a50" stroke-width="0.60" stroke-opacity="0.80"/>
<line x1="988.5" y1="482.5" x2="1005.9" y2="482.9" stroke="#6a575b" stroke-width="0.75"/>
<line x1="1005.9" y1="482.9" x2="1005.0" y2="505.5" stroke="#5c5557" stroke-width="0.95"/>
<line x1="990.0" y1="482.0" x2="989.2" y2="504.3" stroke="#703a42" stroke-width="0.59" stroke-opacity="0.80"/>
<line x1="1006.4" y1="504.8" x2="989.2" y2="504.3" stroke="#6a4a50" stroke-width="0.59" stroke-opacity="0.80"/>
<line x1="990.0" y1="482.0" x2="1007.3" y2="482.4" stroke="#6a575b" stroke-width="0.74"/>
<line x1="1007.3" y1="482.4" x2="1006.4" y2="504.8" stroke="#5c5557" stroke-width="0.95"/>
<line x1="991.5" y1="481.6" x2="990.7" y2="503.7" stroke="#703a42" stroke-width="0.59" stroke-opacity="0.80"/>
<line x1="1007.8" y1="504.2" x2="990.7" y2="503.7" stroke="#6a4a50" stroke-width="0.59" stroke-opacity="0.80"/>
<line x1="991.5" y1="481.6" x2="1008.7" y2="482.0" stroke="#6a575b" stroke-width="0.73"/>
<line x1="1008.7" y1="482.0" x2="1007.8" y2="504.2" stroke="#5c5557" stroke-width="0.94"/>
<line x1="992.9" y1="481.1" x2="992.1" y2="503.0" stroke="#703a42" stroke-width="0.58" stroke-opacity="0.80"/>
<line x1="1009.1" y1="503.6" x2="992.1" y2="503.0" stroke="#6a4a50" stroke-width="0.58" stroke-opacity="0.80"/>
<line x1="992.9" y1="481.1" x2="1010.0" y2="481.5" stroke="#6a575b" stroke-width="0.73"/>
<line x1="1010.0" y1="481.5" x2="1009.1" y2="503.6" stroke="#5c5557" stroke-width="0.93"/>
<line x1="994.4" y1="480.7" x2="993.5" y2="502.4" stroke="#703a42" stroke-width="0.58" stroke-opacity="0.80"/>
<line x1="1010.4" y1="502.9" x2="993.5" y2="502.4" stroke="#6a4a50" stroke-width="0.58" stroke-opacity="0.80"/>
<line x1="994.4" y1="480.7" x2="1011.3" y2="481.0" stroke="#6a575b" stroke-width="0.72"/>
<line x1="1011.3" y1="481.0" x2="1010.4" y2="502.9" stroke="#5c5557" stroke-width="0.92"/>
<line x1="995.8" y1="480.2" x2="995.0" y2="501.8" stroke="#703a42" stroke-width="0.57" stroke-opacity="0.80"/>
<line x1="1011.7" y1="502.3" x2="995.0" y2="501.8" stroke="#6a4a50" stroke-width="0.57" stroke-opacity="0.80"/>
<line x1="995.8" y1="480.2" x2="1012.6" y2="480.6" stroke="#6a575b" stroke-width="0.72"/>
<line x1="1012.6" y1="480.6" x2="1011.7" y2="502.3" stroke="#5c5557" stroke-width="0.92"/>
<line x1="997.2" y1="479.8" x2="996.4" y2="501.2" stroke="#703a42" stroke-width="0.57" stroke-opacity="0.80"/>
<line x1="1013.0" y1="501.7" x2="996.4" y2="501.2" stroke="#6a4a50" stroke-width="0.57" stroke-opacity="0.80"/>
<line x1="997.2" y1="479.8" x2="1013.9" y2="480.1" stroke="#6a575b" stroke-width="0.71"/>
<line x1="1013.9" y1="480.1" x2="1013.0" y2="501.7" stroke="#5c5557" stroke-width="0.91"/>
<line x1="998.5" y1="479.3" x2="997.7" y2="500.6" stroke="#703a42" stroke-width="0.56" stroke-opacity="0.80"/>
<line x1="1014.2" y1="501.1" x2="997.7" y2="500.6" stroke="#6a4a50" stroke-width="0.56" stroke-opacity="0.80"/>
<line x1="998.5" y1="479.3" x2="1015.1" y2="479.7" stroke="#6a575b" stroke-width="0.71"/>
<line x1="1015.1" y1="479.7" x2="1014.2" y2="501.1" stroke="#5c5557" stroke-width="0.90"/>
<line x1="999.9" y1="478.9" x2="999.1" y2="500.0" stroke="#703a42" stroke-width="0.56" stroke-opacity="0.80"/>
<line x1="1015.5" y1="500.5" x2="999.1" y2="500.0" stroke="#6a4a50" stroke-width="0.56" stroke-opacity="0.80"/>
<line x1="999.9" y1="478.9" x2="1016.4" y2="479.3" stroke="#6a575b" stroke-width="0.70"/>
<line x1="1016.4" y1="479.3" x2="1015.5" y2="500.5" stroke="#5c5557" stroke-width="0.90"/>
<line x1="1001.2" y1="478.5" x2="1000.4" y2="499.5" stroke="#703a42" stroke-width="0.56" stroke-opacity="0.80"/>
<line x1="1016.7" y1="500.0" x2="1000.4" y2="499.5" stroke="#6a4a50" stroke-width="0.56" stroke-opacity="0.80"/>
<line x1="1001.2" y1="478.5" x2="1017.6" y2="478.8" stroke="#6a575b" stroke-width="0.70"/>
<line x1="1017.6" y1="478.8" x2="1016.7" y2="500.0" stroke="#5c5557" stroke-width="0.89"/>
<line x1="1002.5" y1="478.1" x2="1001.7" y2="498.9" stroke="#703a42" stroke-width="0.55" stroke-opacity="0.80"/>
<line x1="1017.9" y1="499.4" x2="1001.7" y2="498.9" stroke="#6a4a50" stroke-width="0.55" stroke-opacity="0.80"/>
<line x1="1002.5" y1="478.1" x2="1018.8" y2="478.4" stroke="#6a575b" stroke-width="0.69"/>
<line x1="1018.8" y1="478.4" x2="1017.9" y2="499.4" stroke="#5c5557" stroke-width="0.88"/>
<line x1="591.5" y1="631.2" x2="598.9" y2="628.5" stroke="#6c8286" stroke-width="2.76"/><line x1="598.9" y1="628.5" x2="613.5" y2="623.4" stroke="#6c8286" stroke-width="2.71"/><line x1="613.5" y1="623.4" x2="632.2" y2="616.7" stroke="#6c8286" stroke-width="2.63"/><line x1="632.2" y1="616.7" x2="653.5" y2="609.1" stroke="#6c8286" stroke-width="2.54"/><line x1="653.5" y1="609.1" x2="676.3" y2="601.0" stroke="#6c8286" stroke-width="2.43"/><line x1="676.3" y1="601.0" x2="699.8" y2="592.7" stroke="#6c8286" stroke-width="2.32"/><line x1="699.8" y1="592.7" x2="723.3" y2="584.3" stroke="#6c8286" stroke-width="2.21"/><line x1="723.3" y1="584.3" x2="746.5" y2="576.1" stroke="#6c8286" stroke-width="2.10"/><line x1="746.5" y1="576.1" x2="769.0" y2="568.1" stroke="#6c8286" stroke-width="2.00"/><line x1="769.0" y1="568.1" x2="790.6" y2="560.4" stroke="#6c8286" stroke-width="1.89"/><line x1="790.6" y1="560.4" x2="811.2" y2="553.1" stroke="#6c8286" stroke-width="1.79"/><line x1="811.2" y1="553.1" x2="830.7" y2="546.1" stroke="#6c8286" stroke-width="1.70"/><line x1="830.7" y1="546.1" x2="849.1" y2="539.6" stroke="#6c8286" stroke-width="1.61"/><line x1="849.1" y1="539.6" x2="866.4" y2="533.4" stroke="#6c8286" stroke-width="1.53"/><line x1="866.4" y1="533.4" x2="882.7" y2="527.6" stroke="#6c8286" stroke-width="1.45"/><line x1="882.7" y1="527.6" x2="897.9" y2="522.2" stroke="#6c8286" stroke-width="1.37"/><line x1="897.9" y1="522.2" x2="912.2" y2="517.2" stroke="#6c8286" stroke-width="1.30"/><line x1="912.2" y1="517.2" x2="925.5" y2="512.4" stroke="#6c8286" stroke-width="1.24"/><line x1="925.5" y1="512.4" x2="938.0" y2="508.0" stroke="#6c8286" stroke-width="1.18"/><line x1="938.0" y1="508.0" x2="949.6" y2="503.8" stroke="#6c8286" stroke-width="1.12"/><line x1="949.6" y1="503.8" x2="960.5" y2="500.0" stroke="#6c8286" stroke-width="1.07"/><line x1="960.5" y1="500.0" x2="970.7" y2="496.3" stroke="#6c8286" stroke-width="1.02"/><line x1="970.7" y1="496.3" x2="980.3" y2="493.0" stroke="#6c8286" stroke-width="0.97"/><line x1="980.3" y1="493.0" x2="989.2" y2="489.8" stroke="#6c8286" stroke-width="0.93"/><line x1="989.2" y1="489.8" x2="997.6" y2="486.8" stroke="#6c8286" stroke-width="0.89"/><line x1="997.6" y1="486.8" x2="1005.4" y2="484.0" stroke="#6c8286" stroke-width="0.85"/><line x1="1005.4" y1="484.0" x2="1012.8" y2="481.4" stroke="#6c8286" stroke-width="0.81"/><line x1="1012.8" y1="481.4" x2="1019.7" y2="478.9" stroke="#6c8286" stroke-width="0.78"/>
<line x1="593.2" y1="698.7" x2="600.6" y2="695.2" stroke="#4f8e92" stroke-width="3.12"/><line x1="600.6" y1="695.2" x2="614.9" y2="688.5" stroke="#4f8e92" stroke-width="3.07"/><line x1="614.9" y1="688.5" x2="633.4" y2="679.8" stroke="#4f8e92" stroke-width="2.98"/><line x1="633.4" y1="679.8" x2="654.5" y2="669.8" stroke="#4f8e92" stroke-width="2.87"/><line x1="654.5" y1="669.8" x2="677.0" y2="659.2" stroke="#4f8e92" stroke-width="2.76"/><line x1="677.0" y1="659.2" x2="700.3" y2="648.2" stroke="#4f8e92" stroke-width="2.63"/><line x1="700.3" y1="648.2" x2="723.6" y2="637.3" stroke="#4f8e92" stroke-width="2.51"/><line x1="723.6" y1="637.3" x2="746.5" y2="626.4" stroke="#4f8e92" stroke-width="2.38"/><line x1="746.5" y1="626.4" x2="768.9" y2="615.9" stroke="#4f8e92" stroke-width="2.26"/><line x1="768.9" y1="615.9" x2="790.3" y2="605.8" stroke="#4f8e92" stroke-width="2.15"/><line x1="790.3" y1="605.8" x2="810.8" y2="596.2" stroke="#4f8e92" stroke-width="2.04"/><line x1="810.8" y1="596.2" x2="830.2" y2="587.0" stroke="#4f8e92" stroke-width="1.93"/><line x1="830.2" y1="587.0" x2="848.5" y2="578.4" stroke="#4f8e92" stroke-width="1.83"/><line x1="848.5" y1="578.4" x2="865.8" y2="570.2" stroke="#4f8e92" stroke-width="1.73"/><line x1="865.8" y1="570.2" x2="882.0" y2="562.6" stroke="#4f8e92" stroke-width="1.64"/><line x1="882.0" y1="562.6" x2="897.2" y2="555.4" stroke="#4f8e92" stroke-width="1.56"/><line x1="897.2" y1="555.4" x2="911.4" y2="548.7" stroke="#4f8e92" stroke-width="1.48"/><line x1="911.4" y1="548.7" x2="924.7" y2="542.5" stroke="#4f8e92" stroke-width="1.41"/><line x1="924.7" y1="542.5" x2="937.1" y2="536.6" stroke="#4f8e92" stroke-width="1.34"/><line x1="937.1" y1="536.6" x2="948.8" y2="531.1" stroke="#4f8e92" stroke-width="1.27"/><line x1="948.8" y1="531.1" x2="959.7" y2="526.0" stroke="#4f8e92" stroke-width="1.21"/><line x1="959.7" y1="526.0" x2="969.9" y2="521.2" stroke="#4f8e92" stroke-width="1.16"/><line x1="969.9" y1="521.2" x2="979.4" y2="516.7" stroke="#4f8e92" stroke-width="1.11"/><line x1="979.4" y1="516.7" x2="988.4" y2="512.5" stroke="#4f8e92" stroke-width="1.06"/><line x1="988.4" y1="512.5" x2="996.8" y2="508.5" stroke="#4f8e92" stroke-width="1.01"/><line x1="996.8" y1="508.5" x2="1004.6" y2="504.8" stroke="#4f8e92" stroke-width="0.97"/><line x1="1004.6" y1="504.8" x2="1012.0" y2="501.3" stroke="#4f8e92" stroke-width="0.93"/><line x1="1012.0" y1="501.3" x2="1018.9" y2="498.1" stroke="#4f8e92" stroke-width="0.89"/>
<polygon points="561.3,752.2 1007.0,516.6 1006.9,517.6 561.6,762.7" fill="#b0607c" fill-opacity="0.95" />
<polygon points="479.0,747.0 522.0,722.0 609.5,738.0 566.0,760.0" fill="#c08088" fill-opacity="0.60" />
<line x1="487.0" y1="547.2" x2="549.9" y2="551.0" stroke="#5f8088" stroke-width="2.00" stroke-linecap="round"/>
<line x1="487.9" y1="568.7" x2="550.6" y2="573.1" stroke="#5f8088" stroke-width="2.00" stroke-linecap="round"/>
<line x1="488.8" y1="590.0" x2="551.3" y2="595.0" stroke="#5f8088" stroke-width="2.00" stroke-linecap="round"/>
<line x1="489.7" y1="611.2" x2="552.0" y2="616.8" stroke="#5f8088" stroke-width="2.00" stroke-linecap="round"/>
<line x1="490.6" y1="632.3" x2="552.6" y2="638.4" stroke="#5f8088" stroke-width="2.00" stroke-linecap="round"/>
<line x1="491.4" y1="653.2" x2="553.3" y2="659.9" stroke="#5f8088" stroke-width="2.00" stroke-linecap="round"/>
<line x1="492.3" y1="673.9" x2="554.0" y2="681.3" stroke="#5f8088" stroke-width="2.00" stroke-linecap="round"/>
<line x1="493.1" y1="694.6" x2="554.7" y2="702.5" stroke="#5f8088" stroke-width="2.00" stroke-linecap="round"/>
<line x1="494.0" y1="715.1" x2="555.3" y2="723.5" stroke="#5f8088" stroke-width="2.00" stroke-linecap="round"/>
<line x1="494.8" y1="735.4" x2="556.0" y2="744.5" stroke="#5f8088" stroke-width="2.00" stroke-linecap="round"/>
<polyline points="486.3,527.9 553.4,531.2 559.9,741.9" fill="none" stroke="#e2690e" stroke-width="2.3" stroke-linejoin="round"/>
<polyline points="533.7,519.7 597.4,522.6 600.8,661.5" fill="none" stroke="#e2690e" stroke-width="2.1" stroke-linejoin="round"/>
<polyline points="579.4,512.8 639.7,515.3 641.5,614.7" fill="none" stroke="#e2690e" stroke-width="1.9" stroke-linejoin="round"/>
<line x1="490.8" y1="579.9" x2="550.9" y2="584.3" stroke="#5b7a00" stroke-width="4.20" stroke-linecap="round"/>
<line x1="493.0" y1="633.3" x2="552.7" y2="639.2" stroke="#5b7a00" stroke-width="4.20" stroke-linecap="round"/>
<line x1="495.2" y1="685.8" x2="554.4" y2="693.2" stroke="#5b7a00" stroke-width="4.20" stroke-linecap="round"/>
<line x1="496.9" y1="728.1" x2="555.7" y2="736.6" stroke="#5b7a00" stroke-width="4.20" stroke-linecap="round"/>
<line x1="487.5" y1="532.0" x2="548.5" y2="532.0" stroke="#4f7400" stroke-width="5.00" stroke-linecap="round"/>
<line x1="489.0" y1="531.0" x2="496.7" y2="742.0" stroke="#486600" stroke-width="4.60" stroke-linecap="round"/>
<line x1="487.9" y1="532.0" x2="495.6" y2="741.0" stroke="#648800" stroke-width="1.30" stroke-linecap="round"/>
<circle cx="490.5" cy="529.5" r="1.6" fill="#5a6a6a"/>
<line x1="503.5" y1="531.0" x2="511.0" y2="742.0" stroke="#486600" stroke-width="4.60" stroke-linecap="round"/>
<line x1="502.4" y1="532.0" x2="509.9" y2="741.0" stroke="#648800" stroke-width="1.30" stroke-linecap="round"/>
<circle cx="505.0" cy="529.5" r="1.6" fill="#5a6a6a"/>
<line x1="518.0" y1="531.0" x2="525.6" y2="742.0" stroke="#486600" stroke-width="4.60" stroke-linecap="round"/>
<line x1="516.9" y1="532.0" x2="524.5" y2="741.0" stroke="#648800" stroke-width="1.30" stroke-linecap="round"/>
<circle cx="519.5" cy="529.5" r="1.6" fill="#5a6a6a"/>
<line x1="532.8" y1="531.0" x2="539.5" y2="742.0" stroke="#486600" stroke-width="4.60" stroke-linecap="round"/>
<line x1="531.7" y1="532.0" x2="538.4" y2="741.0" stroke="#648800" stroke-width="1.30" stroke-linecap="round"/>
<circle cx="534.3" cy="529.5" r="1.6" fill="#5a6a6a"/>
<line x1="547.6" y1="531.0" x2="554.4" y2="742.0" stroke="#486600" stroke-width="4.60" stroke-linecap="round"/>
<line x1="546.5" y1="532.0" x2="553.3" y2="741.0" stroke="#648800" stroke-width="1.30" stroke-linecap="round"/>
<circle cx="549.1" cy="529.5" r="1.6" fill="#5a6a6a"/>
<path d="M558 622.5 L591.5 628 L592 704 L560 699 M583 698 L592 704" fill="none" stroke="#16c4cc" stroke-width="2.2" stroke-linejoin="round"/>
<circle cx="590" cy="629.5" r="1.5" fill="#0a9aa2"/><circle cx="590.5" cy="702" r="1.5" fill="#0a9aa2"/>
<path d="M480.5 662.5 L462.5 664.5 L465.8 734 L491 740 M465.8 734 L482.8 727 L480.5 662.5" fill="none" stroke="#16c4cc" stroke-width="2.2" stroke-linejoin="round"/>
<line x1="565.0" y1="619.0" x2="566.2" y2="708.0" stroke="#776e72" stroke-width="1.80"/>
<line x1="573.5" y1="620.0" x2="574.7" y2="708.6" stroke="#776e72" stroke-width="1.80"/>
<line x1="582.0" y1="621.0" x2="583.2" y2="709.2" stroke="#776e72" stroke-width="1.80"/>
<line x1="590.5" y1="622.0" x2="591.7" y2="709.8" stroke="#776e72" stroke-width="1.80"/>
<line x1="559.0" y1="640.0" x2="592.0" y2="644.0" stroke="#6c8a90" stroke-width="1.70"/>
<line x1="559.0" y1="656.0" x2="592.0" y2="660.0" stroke="#6c8a90" stroke-width="1.70"/>
<line x1="559.0" y1="672.0" x2="592.0" y2="676.0" stroke="#6c8a90" stroke-width="1.70"/>
<line x1="559.0" y1="688.0" x2="592.0" y2="692.0" stroke="#6c8a90" stroke-width="1.70"/>
<line x1="559.0" y1="704.0" x2="592.0" y2="708.0" stroke="#6c8a90" stroke-width="1.70"/>
<polygon points="353.0,507.5 552.5,491.5 552.5,505.5 353.0,528.6" fill="url(#cy)" />
<line x1="353.0" y1="513.0" x2="552.0" y2="495.5" stroke="#00c8c8" stroke-width="1.00"/>
<line x1="353.0" y1="520.0" x2="552.0" y2="500.0" stroke="#00bcbc" stroke-width="1.00"/>
<path d="M482 492.5 L552 485 M500 488 L552 482.6 M520 484.6 L553 481.2" stroke="#1ab2ba" stroke-width="2" fill="none"/>
<circle cx="547" cy="497.5" r="1.3" fill="#086a70"/>
<line x1="490.0" y1="512.0" x2="490.4" y2="521.0" stroke="#3ab0c0" stroke-width="2.00"/>
<line x1="490.4" y1="521.0" x2="490.7" y2="528.0" stroke="#a25a58" stroke-width="2.00"/>
<line x1="506.5" y1="510.5" x2="506.9" y2="519.5" stroke="#3ab0c0" stroke-width="2.00"/>
<line x1="506.9" y1="519.5" x2="507.2" y2="526.5" stroke="#a25a58" stroke-width="2.00"/>
<line x1="523.0" y1="509.0" x2="523.4" y2="518.0" stroke="#3ab0c0" stroke-width="2.00"/>
<line x1="523.4" y1="518.0" x2="523.7" y2="525.0" stroke="#a25a58" stroke-width="2.00"/>
<line x1="539.0" y1="507.5" x2="539.4" y2="516.5" stroke="#3ab0c0" stroke-width="2.00"/>
<line x1="539.4" y1="516.5" x2="539.7" y2="523.5" stroke="#a25a58" stroke-width="2.00"/>
<polygon points="1010.0,438.0 1033.0,437.6 1021.0,441.0 1010.0,441.2" fill="#10d4d4" />
<polygon points="479.0,747.0 566.0,760.0 566.0,764.5 479.0,751.0" fill="#b7b7b7" />
<polygon points="566.0,760.0 609.5,734.5 609.5,738.5 566.0,764.5" fill="#d0d0d0" />
<line x1="502.0" y1="745.0" x2="511.0" y2="740.0" stroke="#d020a8" stroke-width="3.20" stroke-linecap="round"/>
<circle cx="502.0" cy="745.2" r="2.3" fill="#4a1490"/>
<line x1="493.0" y1="740.0" x2="499.0" y2="737.0" stroke="#5c9098" stroke-width="2.60" stroke-linecap="round"/>
<line x1="518.0" y1="748.5" x2="527.0" y2="743.5" stroke="#d020a8" stroke-width="3.20" stroke-linecap="round"/>
<circle cx="518.0" cy="748.7" r="2.3" fill="#4a1490"/>
<line x1="509.0" y1="743.5" x2="515.0" y2="740.5" stroke="#5c9098" stroke-width="2.60" stroke-linecap="round"/>
<line x1="534.0" y1="751.5" x2="543.0" y2="746.5" stroke="#d020a8" stroke-width="3.20" stroke-linecap="round"/>
<circle cx="534.0" cy="751.7" r="2.3" fill="#4a1490"/>
<line x1="525.0" y1="746.5" x2="531.0" y2="743.5" stroke="#5c9098" stroke-width="2.60" stroke-linecap="round"/>
<line x1="550.0" y1="754.5" x2="559.0" y2="749.5" stroke="#d020a8" stroke-width="3.20" stroke-linecap="round"/>
<circle cx="550.0" cy="754.7" r="2.3" fill="#4a1490"/>
<line x1="541.0" y1="749.5" x2="547.0" y2="746.5" stroke="#5c9098" stroke-width="2.60" stroke-linecap="round"/>
<line x1="393.0" y1="866.6" x2="393.0" y2="848.0" stroke="#453a80" stroke-width="3.40"/>
<polygon points="392.9,841.0 389.4,851.0 396.4,851.0" fill="#453a80" />
<line x1="393.0" y1="866.0" x2="378.0" y2="865.8" stroke="#3f8a3a" stroke-width="2.60"/>
<polygon points="372.0,865.5 379.0,863.0 379.0,869.0" fill="#3f8a3a" />
<circle cx="397.6" cy="865.2" r="2.9" fill="#a2483c"/>
<g font-family="Liberation Sans,sans-serif" font-size="11" font-weight="bold" fill="#1c2838" text-anchor="middle"><text x="392.9" y="838.6">Z</text><text x="367" y="869.8">Y</text><text x="402.8" y="868.6">X</text></g>
<ellipse cx="1110" cy="881.6" rx="28" ry="7.8" fill="none" stroke="#7f97c3" stroke-width="4.4"/>
<polygon points="1092.9,855.1 1117.1,855.3 1117.1,883.2 1093.2,879.9" fill="#c4587e" />
<polygon points="1117.1,855.3 1124.8,855.0 1124.8,874.4 1117.1,883.2" fill="#419672" />
<text x="1104.8" y="877" font-family="Liberation Sans,sans-serif" font-size="20.5" fill="#dfe6f8" text-anchor="middle" transform="translate(1104.8 0) scale(.62 1) translate(-1104.8 0)">B</text>
<text x="1121.4" y="875.6" font-family="Liberation Sans,sans-serif" font-size="19.5" fill="#d6efe4" text-anchor="middle" transform="translate(1121.4 0) scale(.3 1) translate(-1121.4 0)">R</text>
</svg>
<span class="t" style="letter-spacing:-0.172px;left:358px;top:260px">OranMax=0.98 &lt;=1.00, yeterli.</span>
<span class="t" style="left:505px;top:259px;font-family:'Liberation Serif',serif;font-size:11px;color:#333">√</span>
<!-- status bar -->
<div style="left:3px;top:919px;width:1161px;height:30px;background:#f0f0f0"></div>
<span class="t" style="letter-spacing:-0.181px;left:6px;top:924px">Lisans: INS. MUH. SADIK OZBABA (99)</span>
<span class="t" style="transform:scaleX(0.929);transform-origin:0 50%;left:1023px;top:923.5px;color:#f40000;text-decoration:underline">İnternet bağlantısı başarılı.</span>
<svg style="left:1148px;top:926px" width="13" height="14" viewBox="0 0 13 14" fill="#b2b2b2"><rect x="8.9" y="2" width="2" height="2"/><rect x="5" y="6" width="2" height="2"/><rect x="8.9" y="6" width="2" height="2"/><rect x="1" y="10" width="2" height="2"/><rect x="5" y="10" width="2" height="2"/><rect x="8.9" y="10" width="2" height="2"/></svg>
</div></div>
</body></html>
